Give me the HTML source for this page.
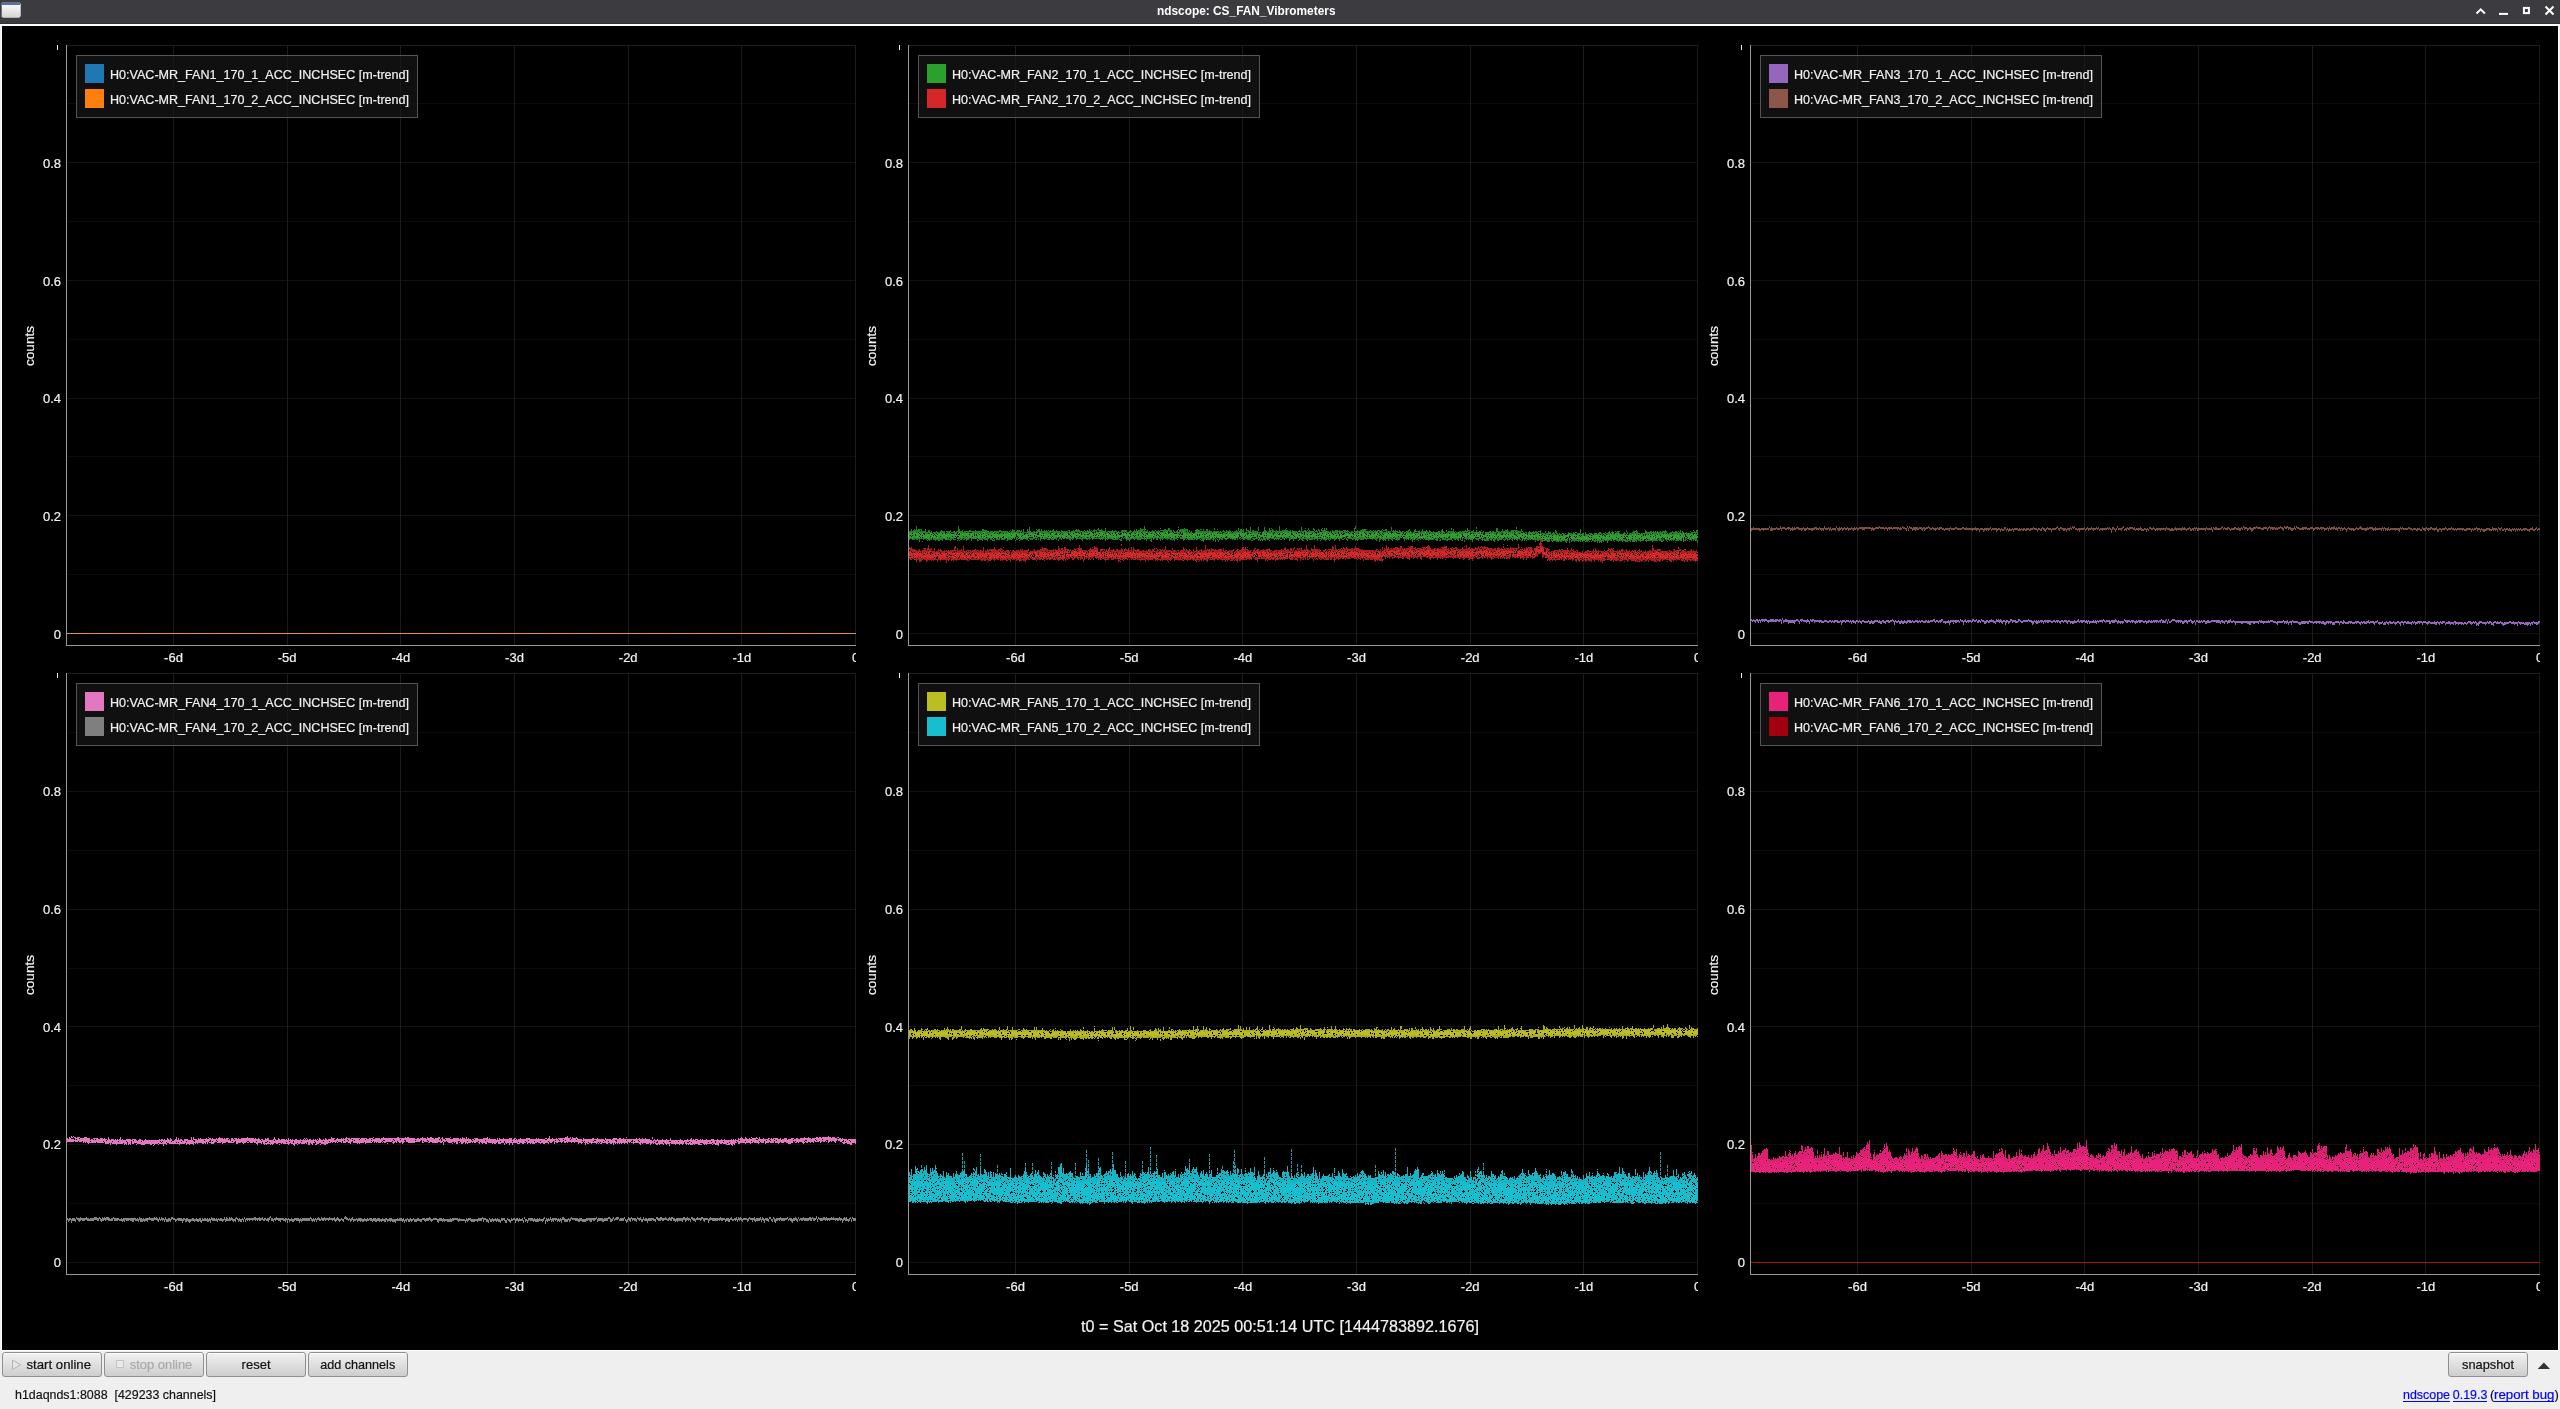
<!DOCTYPE html><html><head><meta charset="utf-8"><title>ndscope: CS_FAN_Vibrometers</title><style>html,body{margin:0;padding:0;background:#efefef;width:2560px;height:1409px;overflow:hidden;}svg{position:absolute;left:0;top:0;display:block;will-change:transform;}text{font-family:"Liberation Sans",sans-serif;stroke-width:0.2px;}</style></head><body><svg width="2560" height="1409" viewBox="0 0 2560 1409" shape-rendering="crispEdges"><defs><linearGradient id="btn" x1="0" y1="0" x2="0" y2="1"><stop offset="0" stop-color="#f2f2f2"/><stop offset="1" stop-color="#cdcdcd"/></linearGradient><linearGradient id="ico" x1="0" y1="0" x2="0" y2="1"><stop offset="0" stop-color="#ffffff"/><stop offset="1" stop-color="#d5d6d2"/></linearGradient><pattern id="sp1" width="211" height="127" patternUnits="userSpaceOnUse"><path d="M10 0h1M16 0h1M19 0h1M31 0h1M37 0h1M51 0h1M67 0h1M68 0h1M69 0h1M79 0h1M86 0h1M89 0h1M94 0h1M102 0h1M103 0h1M104 0h1M109 0h1M123 0h1M127 0h1M131 0h1M134 0h1M135 0h1M136 0h1M158 0h1M167 0h1M206 0h1M1 1h1M20 1h1M41 1h1M45 1h1M47 1h1M51 1h1M62 1h1M76 1h1M81 1h1M88 1h1M103 1h1M118 1h1M119 1h1M120 1h1M121 1h1M129 1h1M131 1h1M139 1h1M147 1h1M152 1h1M153 1h1M160 1h1M182 1h1M183 1h1M190 1h1M201 1h1M5 2h1M16 2h1M17 2h1M26 2h1M41 2h1M43 2h1M45 2h1M49 2h1M58 2h1M64 2h1M71 2h1M75 2h1M87 2h1M112 2h1M123 2h1M132 2h1M158 2h1M160 2h1M171 2h1M186 2h1M187 2h1M197 2h1M200 2h1M25 3h1M38 3h1M45 3h1M54 3h1M77 3h1M84 3h1M111 3h1M126 3h1M130 3h1M134 3h1M136 3h1M137 3h1M146 3h1M151 3h1M161 3h1M186 3h1M189 3h1M190 3h1M7 4h1M17 4h1M32 4h1M36 4h1M43 4h1M69 4h1M82 4h1M92 4h1M98 4h1M104 4h1M120 4h1M121 4h1M122 4h1M124 4h1M130 4h1M143 4h1M147 4h1M155 4h1M169 4h1M178 4h1M183 4h1M200 4h1M205 4h1M6 5h1M24 5h1M54 5h1M74 5h1M83 5h1M137 5h1M169 5h1M170 5h1M185 5h1M187 5h1M188 5h1M195 5h1M198 5h1M202 5h1M206 5h1M207 5h1M13 6h1M19 6h1M31 6h1M49 6h1M55 6h1M58 6h1M61 6h1M66 6h1M75 6h1M78 6h1M84 6h1M109 6h1M112 6h1M113 6h1M119 6h1M150 6h1M159 6h1M196 6h1M206 6h1M210 6h1M6 7h1M15 7h1M18 7h1M51 7h1M57 7h1M76 7h1M97 7h1M107 7h1M109 7h1M123 7h1M131 7h1M177 7h1M187 7h1M194 7h1M13 8h1M21 8h1M26 8h1M33 8h1M34 8h1M38 8h1M53 8h1M57 8h1M70 8h1M87 8h1M118 8h1M119 8h1M124 8h1M135 8h1M136 8h1M165 8h1M186 8h1M187 8h1M199 8h1M79 9h1M95 9h1M98 9h1M106 9h1M109 9h1M117 9h1M123 9h1M133 9h1M135 9h1M136 9h1M167 9h1M168 9h1M198 9h1M12 10h1M25 10h1M30 10h1M35 10h1M48 10h1M50 10h1M57 10h1M59 10h1M72 10h1M89 10h1M99 10h1M110 10h1M113 10h1M118 10h1M123 10h1M149 10h1M154 10h1M157 10h1M175 10h1M177 10h1M188 10h1M5 11h1M8 11h1M39 11h1M56 11h1M85 11h1M91 11h1M101 11h1M121 11h1M123 11h1M177 11h1M179 11h1M181 11h1M205 11h1M209 11h1M7 12h1M19 12h1M32 12h1M52 12h1M61 12h1M64 12h1M81 12h1M82 12h1M87 12h1M88 12h1M91 12h1M94 12h1M111 12h1M116 12h1M121 12h1M132 12h1M152 12h1M162 12h1M169 12h1M172 12h1M176 12h1M177 12h1M0 13h1M1 13h1M20 13h1M22 13h1M28 13h1M43 13h1M46 13h1M56 13h1M74 13h1M86 13h1M97 13h1M111 13h1M114 13h1M118 13h1M135 13h1M149 13h1M176 13h1M193 13h1M199 13h1M205 13h1M208 13h1M5 14h1M24 14h1M38 14h1M40 14h1M59 14h1M78 14h1M81 14h1M83 14h1M86 14h1M96 14h1M107 14h1M117 14h1M119 14h1M144 14h1M153 14h1M155 14h1M163 14h1M174 14h1M175 14h1M176 14h1M201 14h1M204 14h1M206 14h1M207 14h1M210 14h1M11 15h1M35 15h1M38 15h1M49 15h1M50 15h1M51 15h1M59 15h1M72 15h1M94 15h1M122 15h1M132 15h1M139 15h1M143 15h1M165 15h1M173 15h1M177 15h1M185 15h1M186 15h1M205 15h1M11 16h1M33 16h1M40 16h1M59 16h1M63 16h1M78 16h1M84 16h1M87 16h1M104 16h1M121 16h1M141 16h1M157 16h1M166 16h1M199 16h1M205 16h1M206 16h1M207 16h1M4 17h1M19 17h1M31 17h1M39 17h1M43 17h1M51 17h1M58 17h1M59 17h1M60 17h1M67 17h1M68 17h1M84 17h1M104 17h1M106 17h1M108 17h1M113 17h1M114 17h1M119 17h1M134 17h1M157 17h1M163 17h1M164 17h1M166 17h1M188 17h1M195 17h1M200 17h1M206 17h1M12 18h1M27 18h1M34 18h1M45 18h1M51 18h1M55 18h1M67 18h1M70 18h1M76 18h1M90 18h1M108 18h1M115 18h1M131 18h1M134 18h1M153 18h1M188 18h1M196 18h1M9 19h1M68 19h1M124 19h1M128 19h1M140 19h1M158 19h1M159 19h1M163 19h1M174 19h1M175 19h1M176 19h1M179 19h1M182 19h1M183 19h1M200 19h1M3 20h1M4 20h1M14 20h1M23 20h1M34 20h1M38 20h1M42 20h1M47 20h1M76 20h1M79 20h1M81 20h1M108 20h1M121 20h1M127 20h1M130 20h1M132 20h1M142 20h1M161 20h1M12 21h1M39 21h1M41 21h1M48 21h1M74 21h1M80 21h1M87 21h1M94 21h1M106 21h1M141 21h1M148 21h1M189 21h1M192 21h1M198 21h1M199 21h1M11 22h1M13 22h1M23 22h1M29 22h1M53 22h1M57 22h1M64 22h1M70 22h1M71 22h1M86 22h1M92 22h1M94 22h1M98 22h1M99 22h1M101 22h1M105 22h1M119 22h1M121 22h1M124 22h1M134 22h1M143 22h1M160 22h1M169 22h1M172 22h1M178 22h1M193 22h1M195 22h1M10 23h1M23 23h1M43 23h1M44 23h1M46 23h1M62 23h1M64 23h1M73 23h1M80 23h1M99 23h1M101 23h1M111 23h1M122 23h1M129 23h1M142 23h1M151 23h1M169 23h1M201 23h1M208 23h1M209 23h1M12 24h1M23 24h1M40 24h1M44 24h1M68 24h1M79 24h1M85 24h1M94 24h1M104 24h1M118 24h1M121 24h1M136 24h1M165 24h1M167 24h1M182 24h1M185 24h1M186 24h1M201 24h1M203 24h1M13 25h1M34 25h1M94 25h1M109 25h1M157 25h1M180 25h1M183 25h1M7 26h1M16 26h1M49 26h1M52 26h1M59 26h1M61 26h1M75 26h1M92 26h1M117 26h1M122 26h1M134 26h1M135 26h1M153 26h1M171 26h1M189 26h1M190 26h1M194 26h1M208 26h1M1 27h1M48 27h1M69 27h1M73 27h1M74 27h1M75 27h1M92 27h1M95 27h1M97 27h1M99 27h1M111 27h1M112 27h1M120 27h1M126 27h1M129 27h1M136 27h1M138 27h1M167 27h1M175 27h1M180 27h1M188 27h1M197 27h1M198 27h1M2 28h1M10 28h1M19 28h1M20 28h1M26 28h1M30 28h1M34 28h1M35 28h1M66 28h1M109 28h1M110 28h1M113 28h1M122 28h1M128 28h1M129 28h1M130 28h1M143 28h1M160 28h1M162 28h1M185 28h1M187 28h1M188 28h1M197 28h1M202 28h1M1 29h1M13 29h1M36 29h1M42 29h1M44 29h1M73 29h1M78 29h1M104 29h1M107 29h1M113 29h1M114 29h1M130 29h1M135 29h1M136 29h1M143 29h1M155 29h1M165 29h1M178 29h1M190 29h1M208 29h1M0 30h1M24 30h1M32 30h1M33 30h1M54 30h1M61 30h1M68 30h1M69 30h1M71 30h1M74 30h1M90 30h1M94 30h1M122 30h1M125 30h1M139 30h1M140 30h1M147 30h1M163 30h1M167 30h1M173 30h1M183 30h1M185 30h1M192 30h1M209 30h1M3 31h1M19 31h1M33 31h1M37 31h1M48 31h1M54 31h1M56 31h1M64 31h1M95 31h1M97 31h1M100 31h1M101 31h1M115 31h1M126 31h1M133 31h1M162 31h1M167 31h1M170 31h1M174 31h1M178 31h1M183 31h1M184 31h1M13 32h1M19 32h1M27 32h1M34 32h1M44 32h1M51 32h1M56 32h1M68 32h1M80 32h1M84 32h1M88 32h1M100 32h1M128 32h1M130 32h1M135 32h1M153 32h1M157 32h1M158 32h1M193 32h1M199 32h1M202 32h1M206 32h1M32 33h1M48 33h1M63 33h1M64 33h1M65 33h1M86 33h1M121 33h1M132 33h1M165 33h1M167 33h1M183 33h1M189 33h1M198 33h1M205 33h1M209 33h1M210 33h1M0 34h1M3 34h1M6 34h1M16 34h1M19 34h1M20 34h1M30 34h1M41 34h1M48 34h1M68 34h1M79 34h1M84 34h1M95 34h1M97 34h1M101 34h1M108 34h1M120 34h1M128 34h1M178 34h1M185 34h1M200 34h1M210 34h1M7 35h1M31 35h1M68 35h1M86 35h1M94 35h1M116 35h1M138 35h1M145 35h1M146 35h1M156 35h1M163 35h1M201 35h1M210 35h1M1 36h1M2 36h1M12 36h1M18 36h1M25 36h1M26 36h1M46 36h1M111 36h1M152 36h1M164 36h1M167 36h1M178 36h1M188 36h1M201 36h1M206 36h1M208 36h1M1 37h1M11 37h1M20 37h1M48 37h1M53 37h1M67 37h1M71 37h1M76 37h1M80 37h1M81 37h1M83 37h1M100 37h1M111 37h1M127 37h1M134 37h1M144 37h1M186 37h1M208 37h1M0 38h1M9 38h1M13 38h1M45 38h1M58 38h1M59 38h1M84 38h1M92 38h1M96 38h1M149 38h1M160 38h1M174 38h1M200 38h1M0 39h1M4 39h1M15 39h1M53 39h1M64 39h1M79 39h1M87 39h1M91 39h1M111 39h1M113 39h1M120 39h1M125 39h1M135 39h1M136 39h1M138 39h1M141 39h1M159 39h1M165 39h1M170 39h1M179 39h1M5 40h1M6 40h1M20 40h1M36 40h1M45 40h1M47 40h1M48 40h1M50 40h1M60 40h1M65 40h1M89 40h1M122 40h1M125 40h1M137 40h1M142 40h1M157 40h1M162 40h1M181 40h1M190 40h1M193 40h1M204 40h1M208 40h1M4 41h1M6 41h1M30 41h1M40 41h1M66 41h1M100 41h1M112 41h1M113 41h1M120 41h1M124 41h1M134 41h1M158 41h1M170 41h1M174 41h1M185 41h1M187 41h1M192 41h1M7 42h1M10 42h1M31 42h1M39 42h1M51 42h1M87 42h1M93 42h1M94 42h1M107 42h1M113 42h1M116 42h1M134 42h1M141 42h1M163 42h1M173 42h1M186 42h1M187 42h1M188 42h1M189 42h1M195 42h1M210 42h1M0 43h1M5 43h1M11 43h1M15 43h1M19 43h1M30 43h1M32 43h1M45 43h1M47 43h1M50 43h1M56 43h1M61 43h1M69 43h1M81 43h1M91 43h1M126 43h1M128 43h1M143 43h1M145 43h1M146 43h1M151 43h1M156 43h1M157 43h1M167 43h1M177 43h1M210 43h1M12 44h1M29 44h1M37 44h1M43 44h1M58 44h1M77 44h1M88 44h1M98 44h1M115 44h1M116 44h1M118 44h1M132 44h1M141 44h1M144 44h1M151 44h1M187 44h1M193 44h1M8 45h1M39 45h1M54 45h1M57 45h1M58 45h1M61 45h1M74 45h1M85 45h1M87 45h1M110 45h1M124 45h1M142 45h1M161 45h1M169 45h1M184 45h1M205 45h1M207 45h1M209 45h1M5 46h1M13 46h1M40 46h1M59 46h1M80 46h1M81 46h1M92 46h1M94 46h1M97 46h1M112 46h1M120 46h1M127 46h1M141 46h1M145 46h1M173 46h1M189 46h1M208 46h1M6 47h1M58 47h1M66 47h1M69 47h1M73 47h1M76 47h1M81 47h1M85 47h1M87 47h1M96 47h1M100 47h1M103 47h1M116 47h1M129 47h1M140 47h1M144 47h1M170 47h1M177 47h1M182 47h1M184 47h1M197 47h1M202 47h1M1 48h1M3 48h1M6 48h1M13 48h1M25 48h1M40 48h1M45 48h1M49 48h1M53 48h1M55 48h1M57 48h1M58 48h1M61 48h1M76 48h1M79 48h1M80 48h1M109 48h1M116 48h1M117 48h1M121 48h1M130 48h1M160 48h1M167 48h1M184 48h1M191 48h1M196 48h1M197 48h1M198 48h1M202 48h1M4 49h1M42 49h1M45 49h1M64 49h1M66 49h1M67 49h1M88 49h1M89 49h1M130 49h1M138 49h1M139 49h1M143 49h1M144 49h1M166 49h1M167 49h1M168 49h1M170 49h1M197 49h1M209 49h1M5 50h1M13 50h1M14 50h1M21 50h1M37 50h1M61 50h1M62 50h1M74 50h1M75 50h1M81 50h1M84 50h1M90 50h1M98 50h1M105 50h1M112 50h1M119 50h1M147 50h1M166 50h1M171 50h1M173 50h1M176 50h1M180 50h1M6 51h1M10 51h1M14 51h1M25 51h1M36 51h1M50 51h1M54 51h1M59 51h1M61 51h1M66 51h1M69 51h1M102 51h1M106 51h1M134 51h1M138 51h1M147 51h1M148 51h1M159 51h1M175 51h1M178 51h1M184 51h1M194 51h1M3 52h1M11 52h1M44 52h1M61 52h1M68 52h1M72 52h1M84 52h1M98 52h1M102 52h1M104 52h1M113 52h1M114 52h1M123 52h1M140 52h1M150 52h1M151 52h1M153 52h1M172 52h1M187 52h1M199 52h1M205 52h1M4 53h1M11 53h1M16 53h1M17 53h1M27 53h1M30 53h1M50 53h1M53 53h1M54 53h1M64 53h1M70 53h1M80 53h1M83 53h1M94 53h1M97 53h1M116 53h1M128 53h1M141 53h1M151 53h1M158 53h1M160 53h1M163 53h1M168 53h1M187 53h1M193 53h1M203 53h1M2 54h1M16 54h1M23 54h1M25 54h1M50 54h1M89 54h1M104 54h1M128 54h1M141 54h1M146 54h1M154 54h1M157 54h1M180 54h1M181 54h1M189 54h1M196 54h1M198 54h1M15 55h1M17 55h1M25 55h1M26 55h1M36 55h1M51 55h1M92 55h1M96 55h1M111 55h1M133 55h1M151 55h1M164 55h1M175 55h1M181 55h1M182 55h1M190 55h1M2 56h1M14 56h1M22 56h1M40 56h1M45 56h1M50 56h1M63 56h1M74 56h1M95 56h1M96 56h1M104 56h1M105 56h1M115 56h1M140 56h1M144 56h1M154 56h1M159 56h1M169 56h1M207 56h1M7 57h1M15 57h1M19 57h1M43 57h1M57 57h1M72 57h1M78 57h1M82 57h1M85 57h1M87 57h1M128 57h1M133 57h1M137 57h1M138 57h1M144 57h1M147 57h1M157 57h1M163 57h1M173 57h1M191 57h1M204 57h1M9 58h1M21 58h1M29 58h1M34 58h1M36 58h1M42 58h1M43 58h1M62 58h1M67 58h1M73 58h1M93 58h1M113 58h1M124 58h1M132 58h1M135 58h1M151 58h1M152 58h1M156 58h1M157 58h1M158 58h1M167 58h1M170 58h1M176 58h1M179 58h1M193 58h1M194 58h1M209 58h1M13 59h1M47 59h1M51 59h1M67 59h1M80 59h1M98 59h1M100 59h1M103 59h1M115 59h1M134 59h1M149 59h1M158 59h1M179 59h1M206 59h1M207 59h1M0 60h1M12 60h1M24 60h1M37 60h1M42 60h1M45 60h1M50 60h1M54 60h1M85 60h1M90 60h1M93 60h1M103 60h1M117 60h1M118 60h1M146 60h1M170 60h1M175 60h1M189 60h1M197 60h1M202 60h1M208 60h1M2 61h1M6 61h1M20 61h1M44 61h1M47 61h1M51 61h1M54 61h1M68 61h1M79 61h1M80 61h1M84 61h1M109 61h1M118 61h1M128 61h1M129 61h1M136 61h1M143 61h1M159 61h1M170 61h1M181 61h1M183 61h1M193 61h1M204 61h1M6 62h1M9 62h1M12 62h1M16 62h1M31 62h1M33 62h1M39 62h1M56 62h1M63 62h1M71 62h1M74 62h1M78 62h1M80 62h1M85 62h1M93 62h1M105 62h1M109 62h1M126 62h1M141 62h1M155 62h1M168 62h1M181 62h1M182 62h1M189 62h1M197 62h1M198 62h1M204 62h1M17 63h1M37 63h1M41 63h1M61 63h1M65 63h1M66 63h1M68 63h1M77 63h1M91 63h1M93 63h1M109 63h1M111 63h1M135 63h1M154 63h1M155 63h1M158 63h1M159 63h1M160 63h1M170 63h1M179 63h1M186 63h1M4 64h1M10 64h1M38 64h1M41 64h1M59 64h1M66 64h1M90 64h1M96 64h1M123 64h1M130 64h1M140 64h1M146 64h1M175 64h1M182 64h1M197 64h1M200 64h1M208 64h1M4 65h1M27 65h1M39 65h1M41 65h1M46 65h1M49 65h1M54 65h1M56 65h1M58 65h1M64 65h1M68 65h1M73 65h1M83 65h1M84 65h1M98 65h1M107 65h1M110 65h1M115 65h1M141 65h1M142 65h1M143 65h1M148 65h1M153 65h1M161 65h1M167 65h1M186 65h1M193 65h1M194 65h1M207 65h1M208 65h1M16 66h1M19 66h1M30 66h1M32 66h1M55 66h1M60 66h1M81 66h1M82 66h1M106 66h1M110 66h1M111 66h1M114 66h1M119 66h1M127 66h1M128 66h1M132 66h1M133 66h1M165 66h1M185 66h1M195 66h1M198 66h1M206 66h1M2 67h1M6 67h1M7 67h1M15 67h1M41 67h1M42 67h1M55 67h1M59 67h1M67 67h1M85 67h1M93 67h1M95 67h1M107 67h1M108 67h1M116 67h1M129 67h1M132 67h1M143 67h1M152 67h1M170 67h1M184 67h1M185 67h1M204 67h1M37 68h1M43 68h1M50 68h1M59 68h1M70 68h1M75 68h1M93 68h1M99 68h1M125 68h1M139 68h1M144 68h1M157 68h1M169 68h1M178 68h1M194 68h1M202 68h1M0 69h1M11 69h1M13 69h1M16 69h1M39 69h1M48 69h1M49 69h1M77 69h1M81 69h1M82 69h1M110 69h1M112 69h1M186 69h1M189 69h1M192 69h1M206 69h1M207 69h1M13 70h1M18 70h1M20 70h1M25 70h1M29 70h1M43 70h1M49 70h1M58 70h1M60 70h1M68 70h1M77 70h1M79 70h1M80 70h1M90 70h1M91 70h1M103 70h1M104 70h1M117 70h1M127 70h1M143 70h1M145 70h1M154 70h1M180 70h1M203 70h1M44 71h1M45 71h1M47 71h1M56 71h1M57 71h1M64 71h1M72 71h1M84 71h1M85 71h1M87 71h1M105 71h1M112 71h1M117 71h1M123 71h1M131 71h1M132 71h1M147 71h1M158 71h1M160 71h1M165 71h1M171 71h1M180 71h1M193 71h1M201 71h1M202 71h1M207 71h1M0 72h1M3 72h1M32 72h1M49 72h1M71 72h1M77 72h1M79 72h1M82 72h1M88 72h1M100 72h1M109 72h1M125 72h1M141 72h1M151 72h1M154 72h1M157 72h1M170 72h1M172 72h1M173 72h1M189 72h1M206 72h1M209 72h1M10 73h1M11 73h1M16 73h1M36 73h1M39 73h1M49 73h1M59 73h1M72 73h1M83 73h1M142 73h1M176 73h1M183 73h1M206 73h1M24 74h1M42 74h1M50 74h1M52 74h1M67 74h1M70 74h1M77 74h1M81 74h1M85 74h1M89 74h1M112 74h1M116 74h1M137 74h1M146 74h1M151 74h1M157 74h1M159 74h1M163 74h1M180 74h1M183 74h1M184 74h1M186 74h1M188 74h1M198 74h1M200 74h1M201 74h1M203 74h1M21 75h1M28 75h1M37 75h1M43 75h1M46 75h1M64 75h1M68 75h1M103 75h1M110 75h1M112 75h1M116 75h1M124 75h1M127 75h1M137 75h1M138 75h1M145 75h1M147 75h1M174 75h1M182 75h1M186 75h1M194 75h1M6 76h1M10 76h1M15 76h1M18 76h1M19 76h1M25 76h1M31 76h1M32 76h1M43 76h1M52 76h1M74 76h1M77 76h1M98 76h1M108 76h1M127 76h1M138 76h1M146 76h1M153 76h1M169 76h1M185 76h1M189 76h1M190 76h1M191 76h1M28 77h1M48 77h1M51 77h1M61 77h1M81 77h1M94 77h1M121 77h1M149 77h1M160 77h1M162 77h1M181 77h1M188 77h1M208 77h1M2 78h1M13 78h1M26 78h1M46 78h1M52 78h1M56 78h1M58 78h1M70 78h1M84 78h1M87 78h1M90 78h1M98 78h1M116 78h1M119 78h1M123 78h1M130 78h1M134 78h1M137 78h1M145 78h1M146 78h1M176 78h1M179 78h1M184 78h1M197 78h1M201 78h1M202 78h1M10 79h1M19 79h1M20 79h1M30 79h1M32 79h1M67 79h1M84 79h1M87 79h1M104 79h1M123 79h1M131 79h1M193 79h1M197 79h1M0 80h1M2 80h1M5 80h1M6 80h1M14 80h1M29 80h1M36 80h1M39 80h1M57 80h1M65 80h1M78 80h1M92 80h1M105 80h1M116 80h1M124 80h1M158 80h1M176 80h1M196 80h1M210 80h1M7 81h1M18 81h1M28 81h1M48 81h1M51 81h1M66 81h1M75 81h1M80 81h1M96 81h1M111 81h1M114 81h1M116 81h1M120 81h1M126 81h1M129 81h1M145 81h1M162 81h1M166 81h1M179 81h1M185 81h1M195 81h1M198 81h1M210 81h1M2 82h1M7 82h1M12 82h1M24 82h1M35 82h1M38 82h1M62 82h1M69 82h1M70 82h1M72 82h1M78 82h1M80 82h1M97 82h1M99 82h1M103 82h1M106 82h1M109 82h1M119 82h1M120 82h1M138 82h1M140 82h1M142 82h1M148 82h1M151 82h1M154 82h1M171 82h1M181 82h1M185 82h1M188 82h1M200 82h1M3 83h1M14 83h1M24 83h1M29 83h1M31 83h1M37 83h1M40 83h1M59 83h1M84 83h1M107 83h1M111 83h1M177 83h1M184 83h1M185 83h1M192 83h1M193 83h1M197 83h1M9 84h1M13 84h1M14 84h1M16 84h1M21 84h1M23 84h1M28 84h1M48 84h1M68 84h1M70 84h1M75 84h1M94 84h1M98 84h1M99 84h1M103 84h1M117 84h1M118 84h1M128 84h1M129 84h1M145 84h1M157 84h1M159 84h1M169 84h1M175 84h1M176 84h1M181 84h1M190 84h1M193 84h1M205 84h1M207 84h1M210 84h1M9 85h1M38 85h1M47 85h1M67 85h1M101 85h1M111 85h1M113 85h1M119 85h1M122 85h1M128 85h1M131 85h1M133 85h1M151 85h1M160 85h1M175 85h1M188 85h1M190 85h1M198 85h1M201 85h1M9 86h1M18 86h1M25 86h1M31 86h1M35 86h1M42 86h1M43 86h1M47 86h1M76 86h1M82 86h1M83 86h1M95 86h1M114 86h1M116 86h1M117 86h1M134 86h1M143 86h1M145 86h1M151 86h1M180 86h1M188 86h1M195 86h1M203 86h1M4 87h1M5 87h1M18 87h1M19 87h1M36 87h1M39 87h1M46 87h1M70 87h1M88 87h1M94 87h1M98 87h1M102 87h1M103 87h1M114 87h1M116 87h1M118 87h1M120 87h1M144 87h1M153 87h1M171 87h1M173 87h1M175 87h1M178 87h1M186 87h1M0 88h1M3 88h1M14 88h1M15 88h1M29 88h1M60 88h1M86 88h1M89 88h1M99 88h1M103 88h1M106 88h1M108 88h1M122 88h1M140 88h1M145 88h1M146 88h1M170 88h1M172 88h1M176 88h1M180 88h1M202 88h1M7 89h1M27 89h1M36 89h1M49 89h1M50 89h1M53 89h1M69 89h1M73 89h1M76 89h1M88 89h1M113 89h1M122 89h1M129 89h1M134 89h1M143 89h1M154 89h1M160 89h1M175 89h1M176 89h1M177 89h1M180 89h1M187 89h1M193 89h1M198 89h1M200 89h1M205 89h1M207 89h1M11 90h1M37 90h1M80 90h1M82 90h1M98 90h1M113 90h1M123 90h1M125 90h1M135 90h1M137 90h1M140 90h1M142 90h1M155 90h1M158 90h1M174 90h1M200 90h1M209 90h1M1 91h1M17 91h1M56 91h1M59 91h1M67 91h1M78 91h1M86 91h1M91 91h1M113 91h1M120 91h1M133 91h1M136 91h1M137 91h1M147 91h1M161 91h1M165 91h1M209 91h1M1 92h1M2 92h1M9 92h1M20 92h1M29 92h1M32 92h1M37 92h1M84 92h1M92 92h1M95 92h1M100 92h1M101 92h1M117 92h1M119 92h1M127 92h1M136 92h1M142 92h1M146 92h1M179 92h1M180 92h1M181 92h1M185 92h1M206 92h1M208 92h1M5 93h1M8 93h1M12 93h1M16 93h1M31 93h1M45 93h1M53 93h1M54 93h1M57 93h1M73 93h1M74 93h1M93 93h1M97 93h1M103 93h1M114 93h1M116 93h1M121 93h1M124 93h1M133 93h1M148 93h1M151 93h1M171 93h1M176 93h1M193 93h1M205 93h1M209 93h1M0 94h1M12 94h1M47 94h1M57 94h1M64 94h1M72 94h1M79 94h1M97 94h1M98 94h1M103 94h1M130 94h1M131 94h1M152 94h1M158 94h1M167 94h1M169 94h1M178 94h1M190 94h1M192 94h1M13 95h1M16 95h1M39 95h1M48 95h1M50 95h1M62 95h1M64 95h1M83 95h1M111 95h1M131 95h1M137 95h1M166 95h1M177 95h1M179 95h1M191 95h1M203 95h1M208 95h1M0 96h1M5 96h1M22 96h1M24 96h1M29 96h1M55 96h1M57 96h1M86 96h1M109 96h1M129 96h1M131 96h1M139 96h1M140 96h1M149 96h1M151 96h1M159 96h1M162 96h1M166 96h1M168 96h1M180 96h1M188 96h1M206 96h1M208 96h1M0 97h1M1 97h1M18 97h1M23 97h1M37 97h1M44 97h1M58 97h1M71 97h1M87 97h1M89 97h1M93 97h1M107 97h1M125 97h1M133 97h1M134 97h1M135 97h1M142 97h1M194 97h1M0 98h1M1 98h1M23 98h1M24 98h1M47 98h1M62 98h1M63 98h1M72 98h1M91 98h1M94 98h1M105 98h1M106 98h1M112 98h1M132 98h1M135 98h1M137 98h1M145 98h1M165 98h1M176 98h1M177 98h1M191 98h1M208 98h1M10 99h1M32 99h1M42 99h1M55 99h1M64 99h1M68 99h1M75 99h1M100 99h1M107 99h1M111 99h1M118 99h1M130 99h1M142 99h1M149 99h1M153 99h1M161 99h1M187 99h1M197 99h1M203 99h1M204 99h1M10 100h1M19 100h1M34 100h1M41 100h1M59 100h1M83 100h1M94 100h1M99 100h1M107 100h1M117 100h1M120 100h1M152 100h1M158 100h1M170 100h1M173 100h1M175 100h1M1 101h1M5 101h1M8 101h1M21 101h1M28 101h1M29 101h1M42 101h1M44 101h1M45 101h1M47 101h1M54 101h1M62 101h1M66 101h1M73 101h1M83 101h1M84 101h1M87 101h1M104 101h1M109 101h1M111 101h1M124 101h1M127 101h1M129 101h1M130 101h1M137 101h1M139 101h1M140 101h1M172 101h1M176 101h1M181 101h1M200 101h1M201 101h1M0 102h1M12 102h1M20 102h1M39 102h1M89 102h1M92 102h1M94 102h1M96 102h1M97 102h1M100 102h1M101 102h1M105 102h1M108 102h1M126 102h1M131 102h1M139 102h1M141 102h1M150 102h1M156 102h1M166 102h1M167 102h1M205 102h1M6 103h1M7 103h1M15 103h1M51 103h1M66 103h1M69 103h1M73 103h1M81 103h1M88 103h1M91 103h1M92 103h1M95 103h1M105 103h1M124 103h1M135 103h1M141 103h1M155 103h1M156 103h1M168 103h1M190 103h1M200 103h1M208 103h1M210 103h1M6 104h1M12 104h1M14 104h1M17 104h1M23 104h1M30 104h1M62 104h1M70 104h1M74 104h1M87 104h1M96 104h1M100 104h1M102 104h1M121 104h1M132 104h1M138 104h1M143 104h1M145 104h1M160 104h1M162 104h1M193 104h1M4 105h1M8 105h1M19 105h1M44 105h1M46 105h1M49 105h1M56 105h1M61 105h1M70 105h1M72 105h1M73 105h1M74 105h1M76 105h1M84 105h1M93 105h1M96 105h1M114 105h1M117 105h1M123 105h1M127 105h1M131 105h1M133 105h1M135 105h1M144 105h1M151 105h1M171 105h1M175 105h1M201 105h1M206 105h1M25 106h1M31 106h1M37 106h1M47 106h1M53 106h1M69 106h1M88 106h1M105 106h1M149 106h1M151 106h1M162 106h1M166 106h1M167 106h1M174 106h1M188 106h1M200 106h1M32 107h1M38 107h1M40 107h1M56 107h1M74 107h1M76 107h1M83 107h1M87 107h1M91 107h1M120 107h1M142 107h1M144 107h1M147 107h1M162 107h1M174 107h1M8 108h1M12 108h1M14 108h1M24 108h1M25 108h1M34 108h1M38 108h1M41 108h1M50 108h1M52 108h1M53 108h1M65 108h1M77 108h1M85 108h1M103 108h1M117 108h1M123 108h1M139 108h1M151 108h1M178 108h1M194 108h1M200 108h1M9 109h1M10 109h1M15 109h1M21 109h1M23 109h1M39 109h1M48 109h1M53 109h1M57 109h1M68 109h1M70 109h1M71 109h1M85 109h1M90 109h1M94 109h1M103 109h1M119 109h1M126 109h1M137 109h1M141 109h1M143 109h1M176 109h1M179 109h1M185 109h1M192 109h1M4 110h1M8 110h1M40 110h1M67 110h1M79 110h1M91 110h1M92 110h1M105 110h1M109 110h1M124 110h1M126 110h1M140 110h1M142 110h1M167 110h1M174 110h1M195 110h1M200 110h1M203 110h1M208 110h1M13 111h1M14 111h1M19 111h1M20 111h1M39 111h1M44 111h1M51 111h1M71 111h1M77 111h1M79 111h1M100 111h1M103 111h1M106 111h1M112 111h1M117 111h1M176 111h1M180 111h1M181 111h1M183 111h1M191 111h1M193 111h1M198 111h1M199 111h1M210 111h1M23 112h1M42 112h1M50 112h1M53 112h1M56 112h1M58 112h1M67 112h1M68 112h1M86 112h1M97 112h1M99 112h1M100 112h1M140 112h1M141 112h1M143 112h1M146 112h1M153 112h1M162 112h1M176 112h1M188 112h1M203 112h1M207 112h1M209 112h1M2 113h1M4 113h1M62 113h1M87 113h1M88 113h1M101 113h1M119 113h1M127 113h1M132 113h1M135 113h1M139 113h1M140 113h1M147 113h1M155 113h1M168 113h1M172 113h1M174 113h1M194 113h1M199 113h1M202 113h1M13 114h1M16 114h1M19 114h1M21 114h1M27 114h1M32 114h1M36 114h1M58 114h1M82 114h1M101 114h1M109 114h1M112 114h1M116 114h1M121 114h1M134 114h1M140 114h1M145 114h1M146 114h1M148 114h1M156 114h1M180 114h1M183 114h1M186 114h1M14 115h1M19 115h1M29 115h1M35 115h1M36 115h1M62 115h1M77 115h1M94 115h1M111 115h1M112 115h1M150 115h1M153 115h1M155 115h1M160 115h1M170 115h1M171 115h1M172 115h1M184 115h1M188 115h1M191 115h1M194 115h1M197 115h1M198 115h1M200 115h1M205 115h1M206 115h1M20 116h1M28 116h1M44 116h1M45 116h1M55 116h1M61 116h1M85 116h1M86 116h1M90 116h1M95 116h1M107 116h1M140 116h1M151 116h1M154 116h1M156 116h1M158 116h1M186 116h1M188 116h1M200 116h1M11 117h1M23 117h1M24 117h1M43 117h1M47 117h1M48 117h1M49 117h1M50 117h1M60 117h1M65 117h1M89 117h1M96 117h1M99 117h1M110 117h1M128 117h1M132 117h1M138 117h1M150 117h1M160 117h1M1 118h1M5 118h1M12 118h1M14 118h1M20 118h1M24 118h1M39 118h1M50 118h1M57 118h1M70 118h1M80 118h1M97 118h1M100 118h1M103 118h1M106 118h1M110 118h1M112 118h1M117 118h1M124 118h1M149 118h1M156 118h1M158 118h1M159 118h1M165 118h1M186 118h1M194 118h1M204 118h1M12 119h1M19 119h1M25 119h1M28 119h1M51 119h1M52 119h1M65 119h1M72 119h1M85 119h1M94 119h1M98 119h1M143 119h1M151 119h1M160 119h1M161 119h1M165 119h1M166 119h1M177 119h1M0 120h1M5 120h1M9 120h1M14 120h1M21 120h1M38 120h1M46 120h1M50 120h1M51 120h1M55 120h1M65 120h1M67 120h1M80 120h1M83 120h1M88 120h1M90 120h1M92 120h1M93 120h1M103 120h1M107 120h1M111 120h1M112 120h1M126 120h1M132 120h1M142 120h1M157 120h1M175 120h1M177 120h1M187 120h1M199 120h1M2 121h1M18 121h1M29 121h1M33 121h1M39 121h1M59 121h1M62 121h1M70 121h1M73 121h1M88 121h1M89 121h1M98 121h1M115 121h1M131 121h1M136 121h1M141 121h1M142 121h1M153 121h1M159 121h1M163 121h1M166 121h1M169 121h1M173 121h1M179 121h1M182 121h1M203 121h1M206 121h1M207 121h1M4 122h1M18 122h1M22 122h1M28 122h1M29 122h1M49 122h1M68 122h1M71 122h1M72 122h1M73 122h1M74 122h1M79 122h1M90 122h1M99 122h1M115 122h1M118 122h1M125 122h1M128 122h1M129 122h1M131 122h1M133 122h1M149 122h1M162 122h1M204 122h1M205 122h1M208 122h1M17 123h1M19 123h1M23 123h1M49 123h1M52 123h1M74 123h1M76 123h1M90 123h1M93 123h1M95 123h1M123 123h1M124 123h1M136 123h1M141 123h1M148 123h1M154 123h1M160 123h1M182 123h1M189 123h1M5 124h1M19 124h1M50 124h1M63 124h1M106 124h1M133 124h1M137 124h1M143 124h1M172 124h1M173 124h1M183 124h1M193 124h1M194 124h1M204 124h1M210 124h1M1 125h1M6 125h1M21 125h1M24 125h1M36 125h1M37 125h1M45 125h1M56 125h1M78 125h1M82 125h1M90 125h1M103 125h1M112 125h1M118 125h1M126 125h1M131 125h1M141 125h1M160 125h1M162 125h1M171 125h1M181 125h1M186 125h1M194 125h1M209 125h1M210 125h1M23 126h1M24 126h1M30 126h1M51 126h1M54 126h1M55 126h1M58 126h1M75 126h1M82 126h1M96 126h1M104 126h1M127 126h1M131 126h1M161 126h1M166 126h1M176 126h1M178 126h1M206 126h1M208 126h1" stroke="#000" stroke-width="1" transform="translate(0 0.5)"/></pattern><pattern id="sp2" width="199" height="113" patternUnits="userSpaceOnUse"><path d="M0 0h1M37 0h1M45 0h1M63 0h1M64 0h1M66 0h1M69 0h1M96 0h1M103 0h1M153 0h1M167 0h1M12 1h1M24 1h1M33 1h1M51 1h1M59 1h1M67 1h1M73 1h1M121 1h1M166 1h1M176 1h1M180 1h1M189 1h1M47 2h1M56 2h1M99 2h1M120 2h1M122 2h1M140 2h1M170 2h1M188 2h1M1 3h1M6 3h1M8 3h1M11 3h1M50 3h1M66 3h1M68 3h1M75 3h1M99 3h1M111 3h1M156 3h1M166 3h1M190 3h1M194 3h1M2 4h1M14 4h1M41 4h1M82 4h1M86 4h1M100 4h1M101 4h1M102 4h1M105 4h1M137 4h1M143 4h1M162 4h1M178 4h1M190 4h1M67 5h1M100 5h1M107 5h1M111 5h1M122 5h1M125 5h1M145 5h1M152 5h1M34 6h1M62 6h1M89 6h1M158 6h1M179 6h1M186 6h1M13 7h1M37 7h1M89 7h1M103 7h1M108 7h1M147 7h1M153 7h1M155 7h1M185 7h1M195 7h1M8 8h1M14 8h1M29 8h1M39 8h1M57 8h1M59 8h1M75 8h1M94 8h1M114 8h1M126 8h1M172 8h1M186 8h1M11 9h1M21 9h1M23 9h1M28 9h1M40 9h1M43 9h1M58 9h1M64 9h1M76 9h1M77 9h1M96 9h1M98 9h1M102 9h1M117 9h1M119 9h1M145 9h1M170 9h1M175 9h1M182 9h1M186 9h1M197 9h1M21 10h1M38 10h1M65 10h1M78 10h1M109 10h1M142 10h1M157 10h1M162 10h1M0 11h1M51 11h1M64 11h1M66 11h1M113 11h1M119 11h1M141 11h1M38 12h1M42 12h1M43 12h1M57 12h1M72 12h1M80 12h1M95 12h1M123 12h1M126 12h1M127 12h1M133 12h1M154 12h1M179 12h1M185 12h1M30 13h1M32 13h1M60 13h1M74 13h1M182 13h1M20 14h1M27 14h1M29 14h1M75 14h1M77 14h1M117 14h1M126 14h1M142 14h1M168 14h1M171 14h1M184 14h1M186 14h1M14 15h1M27 15h1M42 15h1M62 15h1M101 15h1M125 15h1M127 15h1M147 15h1M158 15h1M161 15h1M0 16h1M43 16h1M48 16h1M61 16h1M67 16h1M70 16h1M89 16h1M195 16h1M3 17h1M7 17h1M27 17h1M39 17h1M110 17h1M112 17h1M115 17h1M122 17h1M2 18h1M60 18h1M97 18h1M101 18h1M144 18h1M146 18h1M52 19h1M85 19h1M102 19h1M106 19h1M166 19h1M169 19h1M0 20h1M15 20h1M21 20h1M60 20h1M67 20h1M137 20h1M150 20h1M168 20h1M6 21h1M20 21h1M43 21h1M48 21h1M81 21h1M112 21h1M122 21h1M131 21h1M153 21h1M159 21h1M163 21h1M1 22h1M46 22h1M84 22h1M96 22h1M109 22h1M120 22h1M129 22h1M150 22h1M151 22h1M160 22h1M167 22h1M178 22h1M191 22h1M196 22h1M16 23h1M32 23h1M34 23h1M43 23h1M45 23h1M61 23h1M66 23h1M96 23h1M115 23h1M175 23h1M6 24h1M7 24h1M42 24h1M67 24h1M106 24h1M119 24h1M130 24h1M134 24h1M143 24h1M149 24h1M179 24h1M192 24h1M2 25h1M12 25h1M23 25h1M44 25h1M46 25h1M55 25h1M66 25h1M98 25h1M101 25h1M125 25h1M129 25h1M137 25h1M141 25h1M145 25h1M147 25h1M153 25h1M156 25h1M158 25h1M195 25h1M9 26h1M24 26h1M33 26h1M82 26h1M100 26h1M107 26h1M110 26h1M126 26h1M134 26h1M162 26h1M180 26h1M10 27h1M30 27h1M39 27h1M47 27h1M49 27h1M52 27h1M67 27h1M73 27h1M78 27h1M88 27h1M103 27h1M117 27h1M119 27h1M131 27h1M13 28h1M51 28h1M57 28h1M78 28h1M79 28h1M118 28h1M122 28h1M127 28h1M140 28h1M145 28h1M152 28h1M154 28h1M5 29h1M28 29h1M30 29h1M36 29h1M71 29h1M76 29h1M91 29h1M96 29h1M121 29h1M132 29h1M153 29h1M158 29h1M168 29h1M176 29h1M198 29h1M15 30h1M79 30h1M83 30h1M94 30h1M129 30h1M133 30h1M136 30h1M140 30h1M143 30h1M144 30h1M148 30h1M176 30h1M181 30h1M182 30h1M198 30h1M25 31h1M142 31h1M144 31h1M198 31h1M9 32h1M19 32h1M30 32h1M55 32h1M82 32h1M91 32h1M116 32h1M143 32h1M188 32h1M190 32h1M2 33h1M33 33h1M53 33h1M62 33h1M69 33h1M88 33h1M92 33h1M98 33h1M132 33h1M133 33h1M154 33h1M5 34h1M29 34h1M37 34h1M95 34h1M104 34h1M142 34h1M160 34h1M176 34h1M0 35h1M60 35h1M64 35h1M81 35h1M89 35h1M100 35h1M106 35h1M112 35h1M115 35h1M141 35h1M142 35h1M154 35h1M158 35h1M171 35h1M14 36h1M38 36h1M55 36h1M61 36h1M90 36h1M95 36h1M34 37h1M37 37h1M50 37h1M88 37h1M104 37h1M105 37h1M110 37h1M124 37h1M126 37h1M147 37h1M166 37h1M169 37h1M24 38h1M54 38h1M59 38h1M61 38h1M68 38h1M69 38h1M75 38h1M108 38h1M135 38h1M146 38h1M156 38h1M158 38h1M179 38h1M11 39h1M29 39h1M30 39h1M78 39h1M90 39h1M112 39h1M131 39h1M132 39h1M151 39h1M185 39h1M21 40h1M42 40h1M43 40h1M84 40h1M85 40h1M97 40h1M100 40h1M106 40h1M114 40h1M145 40h1M161 40h1M174 40h1M15 41h1M73 41h1M110 41h1M126 41h1M154 41h1M155 41h1M161 41h1M167 41h1M190 41h1M4 42h1M142 42h1M165 42h1M178 42h1M183 42h1M8 43h1M22 43h1M50 43h1M56 43h1M75 43h1M85 43h1M93 43h1M139 43h1M166 43h1M13 44h1M14 44h1M47 44h1M99 44h1M116 44h1M123 44h1M147 44h1M154 44h1M52 45h1M87 45h1M125 45h1M187 45h1M193 45h1M3 46h1M5 46h1M8 46h1M30 46h1M40 46h1M57 46h1M72 46h1M75 46h1M79 46h1M85 46h1M106 46h1M108 46h1M127 46h1M134 46h1M136 46h1M12 47h1M32 47h1M95 47h1M104 47h1M142 47h1M164 47h1M166 47h1M173 47h1M176 47h1M177 47h1M19 48h1M23 48h1M47 48h1M52 48h1M82 48h1M110 48h1M121 48h1M122 48h1M163 48h1M171 48h1M2 49h1M21 49h1M39 49h1M45 49h1M46 49h1M77 49h1M131 49h1M142 49h1M178 49h1M196 49h1M16 50h1M86 50h1M107 50h1M118 50h1M124 50h1M177 50h1M4 51h1M6 51h1M58 51h1M69 51h1M118 51h1M122 51h1M126 51h1M140 51h1M157 51h1M165 51h1M1 52h1M5 52h1M13 52h1M62 52h1M101 52h1M102 52h1M157 52h1M160 52h1M187 52h1M24 53h1M25 53h1M61 53h1M74 53h1M80 53h1M87 53h1M90 53h1M112 53h1M124 53h1M128 53h1M150 53h1M152 53h1M161 53h1M18 54h1M43 54h1M61 54h1M63 54h1M99 54h1M101 54h1M110 54h1M147 54h1M161 54h1M167 54h1M168 54h1M18 55h1M37 55h1M42 55h1M139 55h1M156 55h1M172 55h1M19 56h1M31 56h1M44 56h1M62 56h1M85 56h1M149 56h1M163 56h1M167 56h1M181 56h1M26 57h1M27 57h1M35 57h1M41 57h1M54 57h1M58 57h1M74 57h1M77 57h1M106 57h1M107 57h1M114 57h1M125 57h1M134 57h1M148 57h1M155 57h1M197 57h1M26 58h1M44 58h1M49 58h1M71 58h1M74 58h1M81 58h1M83 58h1M114 58h1M139 58h1M162 58h1M15 59h1M42 59h1M51 59h1M86 59h1M159 59h1M168 59h1M172 59h1M49 60h1M85 60h1M90 60h1M95 60h1M107 60h1M159 60h1M176 60h1M194 60h1M23 61h1M46 61h1M58 61h1M78 61h1M99 61h1M101 61h1M114 61h1M115 61h1M120 61h1M128 61h1M145 61h1M189 61h1M36 62h1M37 62h1M48 62h1M57 62h1M68 62h1M84 62h1M99 62h1M197 62h1M198 62h1M56 63h1M58 63h1M102 63h1M108 63h1M124 63h1M135 63h1M163 63h1M168 63h1M170 63h1M191 63h1M18 64h1M48 64h1M88 64h1M155 64h1M197 64h1M2 65h1M32 65h1M68 65h1M93 65h1M110 65h1M111 65h1M152 65h1M13 66h1M49 66h1M72 66h1M81 66h1M122 66h1M123 66h1M125 66h1M127 66h1M195 66h1M40 67h1M43 67h1M52 67h1M54 67h1M67 67h1M68 67h1M87 67h1M129 67h1M131 67h1M136 67h1M163 67h1M182 67h1M190 67h1M53 68h1M76 68h1M86 68h1M89 68h1M99 68h1M142 68h1M145 68h1M161 68h1M190 68h1M193 68h1M7 69h1M8 69h1M32 69h1M121 69h1M141 69h1M158 69h1M160 69h1M169 69h1M192 69h1M195 69h1M16 70h1M35 70h1M47 70h1M52 70h1M66 70h1M82 70h1M125 70h1M170 70h1M172 70h1M184 70h1M1 71h1M2 71h1M28 71h1M32 71h1M37 71h1M64 71h1M66 71h1M78 71h1M81 71h1M88 71h1M89 71h1M95 71h1M100 71h1M107 71h1M126 71h1M132 71h1M145 71h1M164 71h1M182 71h1M183 71h1M30 72h1M37 72h1M38 72h1M43 72h1M78 72h1M80 72h1M165 72h1M185 72h1M7 73h1M9 73h1M26 73h1M56 73h1M60 73h1M78 73h1M90 73h1M102 73h1M105 73h1M116 73h1M130 73h1M155 73h1M159 73h1M6 74h1M40 74h1M50 74h1M105 74h1M110 74h1M124 74h1M127 74h1M132 74h1M133 74h1M134 74h1M143 74h1M161 74h1M167 74h1M198 74h1M23 75h1M50 75h1M71 75h1M98 75h1M138 75h1M152 75h1M6 76h1M50 76h1M51 76h1M60 76h1M69 76h1M82 76h1M122 76h1M133 76h1M137 76h1M168 76h1M186 76h1M11 77h1M34 77h1M41 77h1M48 77h1M64 77h1M80 77h1M129 77h1M143 77h1M153 77h1M155 77h1M176 77h1M25 78h1M38 78h1M44 78h1M52 78h1M68 78h1M75 78h1M85 78h1M91 78h1M103 78h1M105 78h1M133 78h1M137 78h1M144 78h1M147 78h1M181 78h1M184 78h1M21 79h1M60 79h1M63 79h1M101 79h1M129 79h1M162 79h1M169 79h1M182 79h1M0 80h1M22 80h1M23 80h1M126 80h1M131 80h1M157 80h1M179 80h1M65 81h1M74 81h1M77 81h1M83 81h1M95 81h1M106 81h1M155 81h1M156 81h1M177 81h1M182 81h1M187 81h1M0 82h1M1 82h1M8 82h1M30 82h1M53 82h1M67 82h1M75 82h1M171 82h1M197 82h1M198 82h1M21 83h1M22 83h1M27 83h1M85 83h1M87 83h1M105 83h1M108 83h1M123 83h1M144 83h1M162 83h1M168 83h1M187 83h1M194 83h1M197 83h1M10 84h1M55 84h1M73 84h1M96 84h1M106 84h1M140 84h1M146 84h1M170 84h1M196 84h1M197 84h1M0 85h1M18 85h1M20 85h1M43 85h1M57 85h1M98 85h1M131 85h1M193 85h1M5 86h1M17 86h1M28 86h1M33 86h1M65 86h1M73 86h1M77 86h1M109 86h1M151 86h1M169 86h1M6 87h1M22 87h1M34 87h1M71 87h1M77 87h1M91 87h1M184 87h1M188 87h1M198 87h1M5 88h1M6 88h1M19 88h1M38 88h1M81 88h1M108 88h1M109 88h1M116 88h1M127 88h1M128 88h1M132 88h1M153 88h1M11 89h1M24 89h1M34 89h1M38 89h1M41 89h1M63 89h1M66 89h1M75 89h1M137 89h1M8 90h1M9 90h1M42 90h1M72 90h1M80 90h1M114 90h1M165 90h1M170 90h1M175 90h1M177 90h1M19 91h1M43 91h1M74 91h1M89 91h1M97 91h1M118 91h1M125 91h1M127 91h1M171 91h1M197 91h1M34 92h1M83 92h1M106 92h1M153 92h1M154 92h1M155 92h1M170 92h1M188 92h1M12 93h1M17 93h1M19 93h1M34 93h1M81 93h1M25 94h1M45 94h1M50 94h1M176 94h1M183 94h1M185 94h1M192 94h1M15 95h1M17 95h1M27 95h1M36 95h1M47 95h1M77 95h1M133 95h1M144 95h1M179 95h1M7 96h1M13 96h1M40 96h1M67 96h1M152 96h1M162 96h1M178 96h1M184 96h1M20 97h1M26 97h1M35 97h1M39 97h1M103 97h1M124 97h1M128 97h1M129 97h1M130 97h1M136 97h1M140 97h1M154 97h1M179 97h1M188 97h1M191 97h1M3 98h1M24 98h1M71 98h1M94 98h1M102 98h1M131 98h1M142 98h1M150 98h1M175 98h1M190 98h1M6 99h1M22 99h1M26 99h1M32 99h1M41 99h1M85 99h1M103 99h1M105 99h1M122 99h1M144 99h1M154 99h1M180 99h1M185 99h1M17 100h1M45 100h1M62 100h1M89 100h1M90 100h1M97 100h1M123 100h1M138 100h1M141 100h1M154 100h1M184 100h1M9 101h1M13 101h1M30 101h1M33 101h1M56 101h1M65 101h1M90 101h1M153 101h1M175 101h1M197 101h1M0 102h1M4 102h1M7 102h1M34 102h1M53 102h1M57 102h1M95 102h1M97 102h1M109 102h1M128 102h1M144 102h1M184 102h1M192 102h1M34 103h1M72 103h1M88 103h1M111 103h1M158 103h1M163 103h1M30 104h1M33 104h1M47 104h1M51 104h1M77 104h1M121 104h1M125 104h1M129 104h1M161 104h1M167 104h1M172 104h1M182 104h1M52 105h1M68 105h1M112 105h1M140 105h1M148 105h1M163 105h1M47 106h1M53 106h1M163 106h1M187 106h1M3 107h1M18 107h1M28 107h1M34 107h1M36 107h1M45 107h1M61 107h1M67 107h1M79 107h1M151 107h1M161 107h1M23 108h1M38 108h1M57 108h1M109 108h1M117 108h1M124 108h1M126 108h1M159 108h1M9 109h1M10 109h1M72 109h1M77 109h1M85 109h1M93 109h1M115 109h1M134 109h1M151 109h1M193 109h1M195 109h1M10 110h1M25 110h1M39 110h1M47 110h1M68 110h1M85 110h1M94 110h1M114 110h1M120 110h1M126 110h1M127 110h1M169 110h1M193 110h1M14 111h1M28 111h1M32 111h1M74 111h1M91 111h1M125 111h1M157 111h1M173 111h1M197 111h1M13 112h1M29 112h1M66 112h1M85 112h1M102 112h1M108 112h1M115 112h1M143 112h1M164 112h1M172 112h1M182 112h1" stroke="#000" stroke-width="1" transform="translate(0 0.5)"/></pattern><pattern id="sp3" width="223" height="131" patternUnits="userSpaceOnUse"><path d="M4 0h1M8 0h1M9 0h1M11 0h1M19 0h1M22 0h1M23 0h1M27 0h1M33 0h1M39 0h1M53 0h1M66 0h1M76 0h1M84 0h1M93 0h1M100 0h1M104 0h1M110 0h1M113 0h1M115 0h1M135 0h1M151 0h1M154 0h1M158 0h1M167 0h1M168 0h1M170 0h1M183 0h1M188 0h1M201 0h1M211 0h1M215 0h1M221 0h1M1 1h1M9 1h1M24 1h1M25 1h1M37 1h1M39 1h1M61 1h1M63 1h1M68 1h1M78 1h1M82 1h1M83 1h1M86 1h1M99 1h1M111 1h1M124 1h1M139 1h1M143 1h1M147 1h1M157 1h1M173 1h1M178 1h1M181 1h1M188 1h1M194 1h1M198 1h1M200 1h1M203 1h1M204 1h1M208 1h1M217 1h1M1 2h1M9 2h1M15 2h1M23 2h1M36 2h1M50 2h1M63 2h1M78 2h1M80 2h1M88 2h1M111 2h1M114 2h1M122 2h1M126 2h1M127 2h1M129 2h1M143 2h1M159 2h1M163 2h1M167 2h1M176 2h1M178 2h1M179 2h1M180 2h1M190 2h1M203 2h1M205 2h1M210 2h1M6 3h1M11 3h1M21 3h1M23 3h1M25 3h1M34 3h1M50 3h1M59 3h1M87 3h1M89 3h1M106 3h1M128 3h1M131 3h1M148 3h1M168 3h1M170 3h1M175 3h1M176 3h1M190 3h1M191 3h1M198 3h1M1 4h1M8 4h1M12 4h1M15 4h1M23 4h1M41 4h1M46 4h1M49 4h1M60 4h1M63 4h1M65 4h1M70 4h1M71 4h1M77 4h1M101 4h1M102 4h1M103 4h1M104 4h1M112 4h1M114 4h1M117 4h1M122 4h1M136 4h1M140 4h1M141 4h1M146 4h1M157 4h1M166 4h1M169 4h1M173 4h1M174 4h1M187 4h1M188 4h1M189 4h1M204 4h1M208 4h1M210 4h1M216 4h1M219 4h1M222 4h1M5 5h1M8 5h1M13 5h1M15 5h1M17 5h1M20 5h1M23 5h1M32 5h1M37 5h1M40 5h1M41 5h1M43 5h1M45 5h1M46 5h1M51 5h1M58 5h1M61 5h1M74 5h1M76 5h1M83 5h1M100 5h1M101 5h1M117 5h1M127 5h1M130 5h1M133 5h1M138 5h1M142 5h1M148 5h1M151 5h1M156 5h1M160 5h1M171 5h1M172 5h1M178 5h1M190 5h1M195 5h1M207 5h1M208 5h1M217 5h1M218 5h1M220 5h1M17 6h1M18 6h1M20 6h1M28 6h1M30 6h1M44 6h1M63 6h1M73 6h1M85 6h1M86 6h1M96 6h1M97 6h1M99 6h1M100 6h1M101 6h1M102 6h1M106 6h1M112 6h1M113 6h1M117 6h1M124 6h1M142 6h1M144 6h1M148 6h1M151 6h1M180 6h1M182 6h1M191 6h1M193 6h1M196 6h1M198 6h1M200 6h1M205 6h1M211 6h1M212 6h1M5 7h1M12 7h1M35 7h1M40 7h1M45 7h1M46 7h1M47 7h1M53 7h1M60 7h1M63 7h1M71 7h1M97 7h1M116 7h1M118 7h1M123 7h1M130 7h1M132 7h1M143 7h1M156 7h1M176 7h1M192 7h1M199 7h1M203 7h1M205 7h1M206 7h1M214 7h1M0 8h1M8 8h1M10 8h1M16 8h1M26 8h1M40 8h1M53 8h1M54 8h1M58 8h1M65 8h1M74 8h1M77 8h1M78 8h1M79 8h1M107 8h1M108 8h1M117 8h1M127 8h1M129 8h1M146 8h1M159 8h1M183 8h1M184 8h1M186 8h1M189 8h1M200 8h1M201 8h1M203 8h1M216 8h1M0 9h1M3 9h1M5 9h1M6 9h1M11 9h1M14 9h1M15 9h1M20 9h1M27 9h1M31 9h1M32 9h1M36 9h1M41 9h1M44 9h1M50 9h1M53 9h1M59 9h1M60 9h1M61 9h1M65 9h1M67 9h1M91 9h1M102 9h1M105 9h1M107 9h1M111 9h1M132 9h1M133 9h1M135 9h1M143 9h1M145 9h1M146 9h1M151 9h1M158 9h1M164 9h1M168 9h1M176 9h1M181 9h1M187 9h1M189 9h1M197 9h1M201 9h1M207 9h1M213 9h1M217 9h1M220 9h1M1 10h1M4 10h1M5 10h1M15 10h1M23 10h1M28 10h1M32 10h1M39 10h1M42 10h1M45 10h1M64 10h1M66 10h1M67 10h1M77 10h1M82 10h1M84 10h1M87 10h1M89 10h1M96 10h1M124 10h1M132 10h1M145 10h1M146 10h1M158 10h1M163 10h1M164 10h1M167 10h1M170 10h1M176 10h1M177 10h1M189 10h1M192 10h1M195 10h1M196 10h1M204 10h1M211 10h1M218 10h1M1 11h1M18 11h1M20 11h1M23 11h1M30 11h1M41 11h1M43 11h1M82 11h1M84 11h1M94 11h1M99 11h1M119 11h1M124 11h1M130 11h1M136 11h1M138 11h1M142 11h1M149 11h1M151 11h1M178 11h1M184 11h1M201 11h1M203 11h1M206 11h1M214 11h1M221 11h1M8 12h1M9 12h1M13 12h1M15 12h1M19 12h1M27 12h1M38 12h1M44 12h1M48 12h1M60 12h1M63 12h1M65 12h1M66 12h1M71 12h1M74 12h1M80 12h1M89 12h1M92 12h1M111 12h1M124 12h1M125 12h1M129 12h1M142 12h1M144 12h1M156 12h1M160 12h1M174 12h1M179 12h1M187 12h1M208 12h1M210 12h1M5 13h1M6 13h1M8 13h1M14 13h1M28 13h1M30 13h1M55 13h1M64 13h1M94 13h1M101 13h1M106 13h1M110 13h1M111 13h1M123 13h1M126 13h1M137 13h1M138 13h1M139 13h1M140 13h1M146 13h1M147 13h1M150 13h1M159 13h1M166 13h1M169 13h1M182 13h1M186 13h1M189 13h1M195 13h1M198 13h1M203 13h1M205 13h1M212 13h1M214 13h1M4 14h1M5 14h1M7 14h1M9 14h1M40 14h1M57 14h1M62 14h1M63 14h1M64 14h1M71 14h1M78 14h1M85 14h1M97 14h1M100 14h1M102 14h1M103 14h1M108 14h1M114 14h1M121 14h1M123 14h1M125 14h1M136 14h1M143 14h1M145 14h1M147 14h1M155 14h1M165 14h1M166 14h1M170 14h1M173 14h1M182 14h1M183 14h1M222 14h1M7 15h1M10 15h1M16 15h1M30 15h1M33 15h1M35 15h1M40 15h1M51 15h1M65 15h1M67 15h1M80 15h1M83 15h1M84 15h1M86 15h1M96 15h1M101 15h1M103 15h1M114 15h1M121 15h1M123 15h1M126 15h1M127 15h1M131 15h1M136 15h1M137 15h1M141 15h1M142 15h1M151 15h1M154 15h1M158 15h1M168 15h1M172 15h1M183 15h1M185 15h1M188 15h1M193 15h1M205 15h1M212 15h1M214 15h1M20 16h1M24 16h1M28 16h1M29 16h1M30 16h1M48 16h1M51 16h1M53 16h1M70 16h1M76 16h1M83 16h1M97 16h1M104 16h1M106 16h1M107 16h1M111 16h1M113 16h1M128 16h1M151 16h1M161 16h1M165 16h1M167 16h1M175 16h1M176 16h1M181 16h1M189 16h1M193 16h1M212 16h1M6 17h1M11 17h1M18 17h1M22 17h1M32 17h1M35 17h1M50 17h1M51 17h1M52 17h1M55 17h1M58 17h1M67 17h1M78 17h1M81 17h1M82 17h1M83 17h1M90 17h1M92 17h1M93 17h1M94 17h1M96 17h1M110 17h1M114 17h1M118 17h1M119 17h1M124 17h1M125 17h1M130 17h1M131 17h1M147 17h1M161 17h1M168 17h1M184 17h1M191 17h1M192 17h1M195 17h1M201 17h1M217 17h1M221 17h1M1 18h1M4 18h1M9 18h1M13 18h1M15 18h1M19 18h1M21 18h1M25 18h1M28 18h1M31 18h1M57 18h1M93 18h1M94 18h1M98 18h1M122 18h1M131 18h1M144 18h1M157 18h1M163 18h1M168 18h1M169 18h1M186 18h1M195 18h1M203 18h1M207 18h1M211 18h1M212 18h1M213 18h1M215 18h1M216 18h1M218 18h1M220 18h1M222 18h1M7 19h1M31 19h1M43 19h1M44 19h1M54 19h1M63 19h1M64 19h1M83 19h1M85 19h1M88 19h1M95 19h1M96 19h1M108 19h1M110 19h1M115 19h1M116 19h1M146 19h1M151 19h1M155 19h1M157 19h1M158 19h1M165 19h1M179 19h1M180 19h1M193 19h1M199 19h1M212 19h1M217 19h1M218 19h1M220 19h1M7 20h1M11 20h1M23 20h1M25 20h1M27 20h1M28 20h1M33 20h1M46 20h1M50 20h1M63 20h1M69 20h1M71 20h1M74 20h1M79 20h1M81 20h1M82 20h1M106 20h1M112 20h1M116 20h1M122 20h1M123 20h1M125 20h1M129 20h1M133 20h1M135 20h1M140 20h1M157 20h1M161 20h1M170 20h1M172 20h1M174 20h1M182 20h1M186 20h1M193 20h1M198 20h1M205 20h1M208 20h1M211 20h1M2 21h1M9 21h1M10 21h1M11 21h1M18 21h1M21 21h1M23 21h1M34 21h1M43 21h1M46 21h1M66 21h1M72 21h1M78 21h1M82 21h1M89 21h1M94 21h1M96 21h1M97 21h1M99 21h1M101 21h1M106 21h1M107 21h1M108 21h1M110 21h1M115 21h1M116 21h1M124 21h1M133 21h1M150 21h1M165 21h1M173 21h1M188 21h1M200 21h1M201 21h1M205 21h1M207 21h1M209 21h1M2 22h1M4 22h1M5 22h1M6 22h1M9 22h1M16 22h1M18 22h1M19 22h1M30 22h1M38 22h1M44 22h1M46 22h1M55 22h1M66 22h1M69 22h1M75 22h1M78 22h1M81 22h1M84 22h1M86 22h1M87 22h1M97 22h1M111 22h1M112 22h1M115 22h1M117 22h1M123 22h1M153 22h1M163 22h1M167 22h1M169 22h1M179 22h1M184 22h1M188 22h1M189 22h1M192 22h1M196 22h1M206 22h1M6 23h1M11 23h1M12 23h1M28 23h1M30 23h1M35 23h1M49 23h1M56 23h1M61 23h1M65 23h1M70 23h1M80 23h1M92 23h1M97 23h1M126 23h1M139 23h1M156 23h1M161 23h1M169 23h1M176 23h1M182 23h1M196 23h1M197 23h1M208 23h1M210 23h1M212 23h1M1 24h1M7 24h1M15 24h1M22 24h1M30 24h1M78 24h1M84 24h1M88 24h1M101 24h1M103 24h1M111 24h1M114 24h1M126 24h1M132 24h1M136 24h1M142 24h1M143 24h1M162 24h1M164 24h1M165 24h1M181 24h1M183 24h1M200 24h1M201 24h1M206 24h1M211 24h1M213 24h1M222 24h1M3 25h1M5 25h1M31 25h1M40 25h1M41 25h1M43 25h1M52 25h1M63 25h1M73 25h1M75 25h1M76 25h1M80 25h1M87 25h1M111 25h1M116 25h1M117 25h1M140 25h1M144 25h1M146 25h1M147 25h1M158 25h1M168 25h1M177 25h1M179 25h1M180 25h1M181 25h1M185 25h1M190 25h1M194 25h1M195 25h1M206 25h1M207 25h1M219 25h1M222 25h1M0 26h1M8 26h1M17 26h1M36 26h1M39 26h1M41 26h1M44 26h1M50 26h1M57 26h1M70 26h1M87 26h1M109 26h1M112 26h1M123 26h1M131 26h1M137 26h1M140 26h1M144 26h1M169 26h1M174 26h1M179 26h1M182 26h1M184 26h1M195 26h1M206 26h1M207 26h1M211 26h1M213 26h1M215 26h1M10 27h1M11 27h1M15 27h1M19 27h1M43 27h1M47 27h1M62 27h1M64 27h1M69 27h1M75 27h1M77 27h1M85 27h1M92 27h1M97 27h1M98 27h1M107 27h1M111 27h1M118 27h1M119 27h1M136 27h1M137 27h1M150 27h1M153 27h1M156 27h1M162 27h1M176 27h1M178 27h1M185 27h1M191 27h1M196 27h1M206 27h1M207 27h1M210 27h1M212 27h1M218 27h1M1 28h1M7 28h1M9 28h1M20 28h1M22 28h1M27 28h1M29 28h1M33 28h1M38 28h1M39 28h1M48 28h1M53 28h1M54 28h1M60 28h1M62 28h1M71 28h1M80 28h1M92 28h1M108 28h1M114 28h1M118 28h1M154 28h1M160 28h1M167 28h1M178 28h1M194 28h1M196 28h1M199 28h1M203 28h1M209 28h1M214 28h1M221 28h1M2 29h1M35 29h1M38 29h1M40 29h1M48 29h1M55 29h1M72 29h1M77 29h1M79 29h1M101 29h1M115 29h1M118 29h1M120 29h1M126 29h1M135 29h1M136 29h1M141 29h1M146 29h1M151 29h1M157 29h1M171 29h1M173 29h1M174 29h1M176 29h1M177 29h1M178 29h1M189 29h1M194 29h1M209 29h1M212 29h1M217 29h1M219 29h1M221 29h1M2 30h1M4 30h1M6 30h1M7 30h1M9 30h1M31 30h1M32 30h1M38 30h1M43 30h1M46 30h1M49 30h1M55 30h1M57 30h1M63 30h1M68 30h1M72 30h1M76 30h1M78 30h1M83 30h1M103 30h1M110 30h1M111 30h1M117 30h1M118 30h1M139 30h1M141 30h1M142 30h1M146 30h1M163 30h1M168 30h1M169 30h1M170 30h1M173 30h1M186 30h1M193 30h1M203 30h1M210 30h1M214 30h1M14 31h1M21 31h1M58 31h1M59 31h1M61 31h1M74 31h1M78 31h1M83 31h1M84 31h1M89 31h1M96 31h1M109 31h1M112 31h1M114 31h1M131 31h1M138 31h1M140 31h1M142 31h1M154 31h1M162 31h1M173 31h1M193 31h1M195 31h1M206 31h1M212 31h1M222 31h1M18 32h1M26 32h1M45 32h1M54 32h1M55 32h1M63 32h1M67 32h1M95 32h1M96 32h1M107 32h1M118 32h1M124 32h1M136 32h1M140 32h1M141 32h1M142 32h1M147 32h1M157 32h1M158 32h1M164 32h1M166 32h1M167 32h1M169 32h1M173 32h1M180 32h1M186 32h1M187 32h1M191 32h1M202 32h1M212 32h1M214 32h1M1 33h1M12 33h1M21 33h1M28 33h1M42 33h1M44 33h1M45 33h1M57 33h1M66 33h1M74 33h1M80 33h1M90 33h1M137 33h1M139 33h1M145 33h1M150 33h1M155 33h1M161 33h1M163 33h1M175 33h1M178 33h1M181 33h1M191 33h1M193 33h1M198 33h1M201 33h1M202 33h1M220 33h1M6 34h1M13 34h1M14 34h1M15 34h1M19 34h1M23 34h1M25 34h1M44 34h1M45 34h1M58 34h1M66 34h1M80 34h1M84 34h1M94 34h1M96 34h1M107 34h1M120 34h1M129 34h1M130 34h1M137 34h1M138 34h1M173 34h1M179 34h1M183 34h1M184 34h1M187 34h1M191 34h1M193 34h1M195 34h1M198 34h1M200 34h1M203 34h1M205 34h1M209 34h1M214 34h1M217 34h1M218 34h1M1 35h1M4 35h1M8 35h1M10 35h1M13 35h1M21 35h1M31 35h1M58 35h1M68 35h1M76 35h1M87 35h1M100 35h1M104 35h1M115 35h1M119 35h1M123 35h1M138 35h1M139 35h1M144 35h1M146 35h1M149 35h1M152 35h1M156 35h1M159 35h1M164 35h1M174 35h1M178 35h1M183 35h1M184 35h1M189 35h1M197 35h1M222 35h1M5 36h1M12 36h1M13 36h1M16 36h1M20 36h1M23 36h1M26 36h1M31 36h1M32 36h1M38 36h1M53 36h1M62 36h1M63 36h1M69 36h1M77 36h1M82 36h1M83 36h1M95 36h1M106 36h1M113 36h1M138 36h1M139 36h1M153 36h1M154 36h1M164 36h1M165 36h1M179 36h1M184 36h1M195 36h1M196 36h1M199 36h1M212 36h1M218 36h1M220 36h1M222 36h1M4 37h1M6 37h1M7 37h1M19 37h1M20 37h1M36 37h1M38 37h1M49 37h1M55 37h1M61 37h1M62 37h1M68 37h1M69 37h1M82 37h1M96 37h1M108 37h1M114 37h1M129 37h1M132 37h1M143 37h1M149 37h1M153 37h1M157 37h1M166 37h1M175 37h1M182 37h1M185 37h1M187 37h1M189 37h1M198 37h1M201 37h1M206 37h1M214 37h1M215 37h1M218 37h1M2 38h1M6 38h1M9 38h1M18 38h1M31 38h1M52 38h1M57 38h1M70 38h1M77 38h1M83 38h1M100 38h1M110 38h1M111 38h1M115 38h1M116 38h1M122 38h1M140 38h1M145 38h1M148 38h1M151 38h1M165 38h1M180 38h1M191 38h1M192 38h1M195 38h1M198 38h1M213 38h1M6 39h1M15 39h1M20 39h1M24 39h1M29 39h1M38 39h1M39 39h1M57 39h1M73 39h1M74 39h1M76 39h1M82 39h1M90 39h1M119 39h1M125 39h1M126 39h1M130 39h1M132 39h1M140 39h1M142 39h1M150 39h1M151 39h1M154 39h1M155 39h1M157 39h1M164 39h1M166 39h1M173 39h1M180 39h1M186 39h1M187 39h1M193 39h1M195 39h1M198 39h1M3 40h1M5 40h1M7 40h1M10 40h1M11 40h1M25 40h1M30 40h1M32 40h1M34 40h1M57 40h1M58 40h1M96 40h1M104 40h1M106 40h1M112 40h1M115 40h1M117 40h1M119 40h1M128 40h1M137 40h1M142 40h1M156 40h1M163 40h1M168 40h1M173 40h1M174 40h1M175 40h1M185 40h1M192 40h1M211 40h1M212 40h1M216 40h1M218 40h1M222 40h1M2 41h1M4 41h1M14 41h1M15 41h1M17 41h1M18 41h1M19 41h1M20 41h1M25 41h1M45 41h1M46 41h1M50 41h1M55 41h1M62 41h1M73 41h1M88 41h1M92 41h1M98 41h1M125 41h1M130 41h1M133 41h1M138 41h1M156 41h1M167 41h1M169 41h1M176 41h1M183 41h1M187 41h1M191 41h1M193 41h1M210 41h1M217 41h1M4 42h1M41 42h1M44 42h1M50 42h1M59 42h1M65 42h1M94 42h1M109 42h1M118 42h1M119 42h1M129 42h1M132 42h1M133 42h1M135 42h1M145 42h1M146 42h1M157 42h1M165 42h1M172 42h1M177 42h1M188 42h1M192 42h1M202 42h1M205 42h1M206 42h1M212 42h1M214 42h1M222 42h1M1 43h1M9 43h1M19 43h1M20 43h1M28 43h1M30 43h1M35 43h1M36 43h1M40 43h1M46 43h1M53 43h1M55 43h1M58 43h1M67 43h1M74 43h1M87 43h1M95 43h1M96 43h1M107 43h1M115 43h1M125 43h1M129 43h1M138 43h1M142 43h1M147 43h1M148 43h1M151 43h1M158 43h1M165 43h1M167 43h1M170 43h1M171 43h1M175 43h1M177 43h1M190 43h1M198 43h1M205 43h1M215 43h1M217 43h1M2 44h1M9 44h1M13 44h1M17 44h1M18 44h1M22 44h1M32 44h1M35 44h1M38 44h1M43 44h1M50 44h1M55 44h1M56 44h1M59 44h1M66 44h1M67 44h1M69 44h1M75 44h1M80 44h1M85 44h1M91 44h1M97 44h1M100 44h1M104 44h1M106 44h1M108 44h1M112 44h1M119 44h1M121 44h1M139 44h1M157 44h1M174 44h1M194 44h1M205 44h1M213 44h1M216 44h1M218 44h1M23 45h1M27 45h1M42 45h1M73 45h1M74 45h1M96 45h1M99 45h1M100 45h1M118 45h1M120 45h1M129 45h1M131 45h1M138 45h1M154 45h1M157 45h1M158 45h1M169 45h1M188 45h1M189 45h1M193 45h1M197 45h1M201 45h1M202 45h1M204 45h1M207 45h1M217 45h1M218 45h1M219 45h1M3 46h1M12 46h1M35 46h1M39 46h1M79 46h1M81 46h1M84 46h1M90 46h1M102 46h1M106 46h1M109 46h1M114 46h1M116 46h1M133 46h1M135 46h1M148 46h1M150 46h1M151 46h1M157 46h1M166 46h1M170 46h1M172 46h1M190 46h1M194 46h1M198 46h1M205 46h1M210 46h1M214 46h1M218 46h1M222 46h1M1 47h1M5 47h1M17 47h1M18 47h1M24 47h1M32 47h1M42 47h1M44 47h1M66 47h1M69 47h1M71 47h1M79 47h1M81 47h1M83 47h1M88 47h1M89 47h1M94 47h1M95 47h1M97 47h1M101 47h1M107 47h1M114 47h1M117 47h1M123 47h1M128 47h1M129 47h1M138 47h1M141 47h1M142 47h1M143 47h1M146 47h1M152 47h1M164 47h1M168 47h1M193 47h1M210 47h1M4 48h1M5 48h1M8 48h1M19 48h1M21 48h1M22 48h1M27 48h1M28 48h1M32 48h1M52 48h1M59 48h1M63 48h1M65 48h1M89 48h1M94 48h1M96 48h1M101 48h1M111 48h1M119 48h1M123 48h1M127 48h1M131 48h1M134 48h1M135 48h1M136 48h1M138 48h1M139 48h1M173 48h1M180 48h1M185 48h1M190 48h1M197 48h1M203 48h1M218 48h1M0 49h1M12 49h1M20 49h1M22 49h1M31 49h1M64 49h1M66 49h1M70 49h1M75 49h1M98 49h1M104 49h1M106 49h1M109 49h1M120 49h1M121 49h1M123 49h1M125 49h1M126 49h1M137 49h1M139 49h1M140 49h1M144 49h1M151 49h1M167 49h1M170 49h1M176 49h1M179 49h1M181 49h1M183 49h1M200 49h1M210 49h1M219 49h1M220 49h1M222 49h1M0 50h1M5 50h1M7 50h1M18 50h1M26 50h1M42 50h1M54 50h1M55 50h1M79 50h1M80 50h1M87 50h1M91 50h1M92 50h1M93 50h1M99 50h1M101 50h1M105 50h1M112 50h1M113 50h1M117 50h1M128 50h1M139 50h1M145 50h1M155 50h1M167 50h1M169 50h1M175 50h1M187 50h1M188 50h1M195 50h1M197 50h1M199 50h1M206 50h1M209 50h1M214 50h1M21 51h1M22 51h1M25 51h1M27 51h1M33 51h1M34 51h1M35 51h1M44 51h1M54 51h1M55 51h1M66 51h1M76 51h1M93 51h1M95 51h1M99 51h1M101 51h1M104 51h1M108 51h1M115 51h1M118 51h1M125 51h1M154 51h1M161 51h1M167 51h1M174 51h1M196 51h1M0 52h1M6 52h1M7 52h1M21 52h1M31 52h1M53 52h1M54 52h1M55 52h1M56 52h1M61 52h1M62 52h1M75 52h1M78 52h1M84 52h1M88 52h1M90 52h1M94 52h1M96 52h1M122 52h1M134 52h1M136 52h1M150 52h1M154 52h1M155 52h1M174 52h1M197 52h1M198 52h1M206 52h1M208 52h1M2 53h1M3 53h1M15 53h1M16 53h1M25 53h1M28 53h1M48 53h1M54 53h1M59 53h1M80 53h1M81 53h1M87 53h1M88 53h1M122 53h1M131 53h1M136 53h1M137 53h1M165 53h1M169 53h1M170 53h1M174 53h1M176 53h1M184 53h1M190 53h1M201 53h1M202 53h1M203 53h1M213 53h1M214 53h1M217 53h1M222 53h1M3 54h1M10 54h1M18 54h1M30 54h1M33 54h1M39 54h1M46 54h1M51 54h1M52 54h1M53 54h1M64 54h1M65 54h1M74 54h1M75 54h1M78 54h1M90 54h1M94 54h1M103 54h1M107 54h1M108 54h1M111 54h1M115 54h1M131 54h1M140 54h1M141 54h1M147 54h1M150 54h1M158 54h1M168 54h1M186 54h1M191 54h1M192 54h1M195 54h1M216 54h1M5 55h1M15 55h1M18 55h1M20 55h1M26 55h1M35 55h1M46 55h1M54 55h1M63 55h1M65 55h1M66 55h1M67 55h1M71 55h1M78 55h1M92 55h1M104 55h1M126 55h1M130 55h1M135 55h1M137 55h1M138 55h1M145 55h1M148 55h1M159 55h1M162 55h1M166 55h1M172 55h1M184 55h1M197 55h1M200 55h1M207 55h1M211 55h1M220 55h1M3 56h1M5 56h1M17 56h1M24 56h1M25 56h1M30 56h1M31 56h1M43 56h1M47 56h1M51 56h1M58 56h1M60 56h1M65 56h1M68 56h1M69 56h1M75 56h1M82 56h1M86 56h1M95 56h1M104 56h1M107 56h1M108 56h1M110 56h1M128 56h1M129 56h1M132 56h1M142 56h1M156 56h1M169 56h1M181 56h1M185 56h1M190 56h1M195 56h1M198 56h1M204 56h1M205 56h1M207 56h1M209 56h1M217 56h1M221 56h1M0 57h1M2 57h1M11 57h1M14 57h1M24 57h1M26 57h1M27 57h1M37 57h1M44 57h1M59 57h1M69 57h1M76 57h1M79 57h1M86 57h1M90 57h1M92 57h1M99 57h1M102 57h1M105 57h1M107 57h1M115 57h1M121 57h1M125 57h1M127 57h1M133 57h1M152 57h1M153 57h1M156 57h1M173 57h1M184 57h1M185 57h1M186 57h1M191 57h1M193 57h1M194 57h1M205 57h1M210 57h1M212 57h1M217 57h1M219 57h1M4 58h1M19 58h1M21 58h1M32 58h1M41 58h1M66 58h1M75 58h1M76 58h1M85 58h1M100 58h1M110 58h1M112 58h1M113 58h1M116 58h1M130 58h1M134 58h1M137 58h1M138 58h1M158 58h1M160 58h1M165 58h1M167 58h1M169 58h1M170 58h1M178 58h1M181 58h1M189 58h1M191 58h1M194 58h1M197 58h1M199 58h1M203 58h1M204 58h1M205 58h1M219 58h1M220 58h1M222 58h1M14 59h1M16 59h1M19 59h1M20 59h1M33 59h1M51 59h1M61 59h1M65 59h1M68 59h1M81 59h1M82 59h1M84 59h1M88 59h1M90 59h1M91 59h1M95 59h1M105 59h1M114 59h1M120 59h1M136 59h1M138 59h1M140 59h1M145 59h1M147 59h1M153 59h1M158 59h1M167 59h1M171 59h1M174 59h1M178 59h1M208 59h1M213 59h1M221 59h1M222 59h1M1 60h1M21 60h1M37 60h1M52 60h1M63 60h1M67 60h1M71 60h1M76 60h1M81 60h1M82 60h1M94 60h1M107 60h1M108 60h1M113 60h1M114 60h1M126 60h1M136 60h1M137 60h1M143 60h1M151 60h1M169 60h1M172 60h1M177 60h1M180 60h1M187 60h1M209 60h1M210 60h1M211 60h1M212 60h1M215 60h1M217 60h1M1 61h1M9 61h1M11 61h1M25 61h1M30 61h1M34 61h1M56 61h1M60 61h1M67 61h1M80 61h1M81 61h1M82 61h1M84 61h1M93 61h1M95 61h1M112 61h1M115 61h1M119 61h1M120 61h1M121 61h1M124 61h1M128 61h1M139 61h1M147 61h1M148 61h1M151 61h1M177 61h1M185 61h1M193 61h1M194 61h1M203 61h1M213 61h1M219 61h1M0 62h1M4 62h1M19 62h1M23 62h1M27 62h1M31 62h1M50 62h1M55 62h1M57 62h1M67 62h1M74 62h1M75 62h1M82 62h1M89 62h1M92 62h1M93 62h1M94 62h1M101 62h1M102 62h1M105 62h1M109 62h1M114 62h1M115 62h1M119 62h1M128 62h1M133 62h1M139 62h1M147 62h1M157 62h1M188 62h1M192 62h1M197 62h1M205 62h1M209 62h1M210 62h1M211 62h1M212 62h1M213 62h1M1 63h1M2 63h1M12 63h1M17 63h1M26 63h1M30 63h1M48 63h1M50 63h1M62 63h1M71 63h1M78 63h1M79 63h1M85 63h1M87 63h1M92 63h1M103 63h1M124 63h1M146 63h1M148 63h1M149 63h1M153 63h1M158 63h1M171 63h1M186 63h1M187 63h1M193 63h1M195 63h1M204 63h1M205 63h1M207 63h1M208 63h1M215 63h1M222 63h1M1 64h1M8 64h1M11 64h1M13 64h1M16 64h1M19 64h1M20 64h1M22 64h1M31 64h1M32 64h1M34 64h1M38 64h1M43 64h1M51 64h1M52 64h1M68 64h1M78 64h1M83 64h1M86 64h1M87 64h1M89 64h1M90 64h1M93 64h1M107 64h1M114 64h1M117 64h1M131 64h1M132 64h1M145 64h1M147 64h1M164 64h1M167 64h1M171 64h1M184 64h1M188 64h1M194 64h1M201 64h1M215 64h1M1 65h1M2 65h1M3 65h1M4 65h1M6 65h1M7 65h1M22 65h1M24 65h1M27 65h1M28 65h1M30 65h1M38 65h1M45 65h1M51 65h1M70 65h1M71 65h1M72 65h1M77 65h1M78 65h1M82 65h1M84 65h1M87 65h1M88 65h1M98 65h1M107 65h1M127 65h1M129 65h1M148 65h1M156 65h1M158 65h1M166 65h1M170 65h1M173 65h1M174 65h1M187 65h1M190 65h1M191 65h1M192 65h1M210 65h1M212 65h1M221 65h1M4 66h1M12 66h1M14 66h1M21 66h1M26 66h1M29 66h1M31 66h1M32 66h1M34 66h1M43 66h1M55 66h1M56 66h1M62 66h1M65 66h1M68 66h1M71 66h1M76 66h1M80 66h1M86 66h1M94 66h1M98 66h1M111 66h1M112 66h1M128 66h1M132 66h1M134 66h1M138 66h1M146 66h1M149 66h1M155 66h1M163 66h1M164 66h1M176 66h1M177 66h1M209 66h1M214 66h1M220 66h1M13 67h1M21 67h1M25 67h1M47 67h1M52 67h1M60 67h1M64 67h1M73 67h1M76 67h1M77 67h1M86 67h1M90 67h1M91 67h1M103 67h1M107 67h1M113 67h1M117 67h1M118 67h1M121 67h1M143 67h1M146 67h1M150 67h1M151 67h1M154 67h1M161 67h1M162 67h1M163 67h1M165 67h1M167 67h1M172 67h1M180 67h1M181 67h1M197 67h1M199 67h1M200 67h1M205 67h1M207 67h1M215 67h1M217 67h1M221 67h1M3 68h1M5 68h1M10 68h1M11 68h1M12 68h1M16 68h1M25 68h1M30 68h1M32 68h1M33 68h1M37 68h1M45 68h1M48 68h1M56 68h1M70 68h1M76 68h1M93 68h1M97 68h1M99 68h1M139 68h1M148 68h1M162 68h1M164 68h1M168 68h1M169 68h1M170 68h1M186 68h1M194 68h1M195 68h1M199 68h1M220 68h1M7 69h1M9 69h1M24 69h1M28 69h1M37 69h1M40 69h1M48 69h1M60 69h1M61 69h1M66 69h1M72 69h1M76 69h1M83 69h1M91 69h1M93 69h1M98 69h1M111 69h1M115 69h1M118 69h1M119 69h1M137 69h1M141 69h1M146 69h1M160 69h1M163 69h1M166 69h1M177 69h1M185 69h1M186 69h1M188 69h1M191 69h1M209 69h1M210 69h1M211 69h1M216 69h1M6 70h1M10 70h1M15 70h1M16 70h1M34 70h1M45 70h1M46 70h1M50 70h1M51 70h1M52 70h1M59 70h1M60 70h1M63 70h1M67 70h1M68 70h1M78 70h1M82 70h1M83 70h1M85 70h1M86 70h1M98 70h1M105 70h1M107 70h1M112 70h1M117 70h1M119 70h1M128 70h1M132 70h1M140 70h1M142 70h1M145 70h1M149 70h1M155 70h1M159 70h1M163 70h1M177 70h1M185 70h1M193 70h1M194 70h1M200 70h1M201 70h1M212 70h1M219 70h1M7 71h1M27 71h1M35 71h1M57 71h1M71 71h1M73 71h1M76 71h1M77 71h1M80 71h1M81 71h1M89 71h1M90 71h1M94 71h1M98 71h1M103 71h1M127 71h1M134 71h1M146 71h1M150 71h1M154 71h1M171 71h1M177 71h1M181 71h1M197 71h1M2 72h1M8 72h1M14 72h1M27 72h1M39 72h1M50 72h1M63 72h1M65 72h1M72 72h1M73 72h1M74 72h1M85 72h1M93 72h1M99 72h1M101 72h1M106 72h1M108 72h1M123 72h1M125 72h1M137 72h1M149 72h1M152 72h1M157 72h1M161 72h1M163 72h1M170 72h1M172 72h1M178 72h1M197 72h1M206 72h1M212 72h1M215 72h1M216 72h1M6 73h1M19 73h1M20 73h1M22 73h1M27 73h1M29 73h1M38 73h1M39 73h1M42 73h1M47 73h1M54 73h1M58 73h1M64 73h1M70 73h1M79 73h1M95 73h1M96 73h1M110 73h1M137 73h1M141 73h1M149 73h1M153 73h1M160 73h1M166 73h1M167 73h1M171 73h1M187 73h1M206 73h1M212 73h1M216 73h1M217 73h1M219 73h1M7 74h1M14 74h1M33 74h1M36 74h1M38 74h1M41 74h1M48 74h1M53 74h1M58 74h1M60 74h1M63 74h1M65 74h1M66 74h1M67 74h1M70 74h1M90 74h1M106 74h1M137 74h1M169 74h1M171 74h1M174 74h1M184 74h1M189 74h1M195 74h1M202 74h1M205 74h1M3 75h1M6 75h1M10 75h1M16 75h1M25 75h1M64 75h1M72 75h1M78 75h1M82 75h1M95 75h1M100 75h1M103 75h1M105 75h1M112 75h1M115 75h1M130 75h1M140 75h1M141 75h1M143 75h1M155 75h1M166 75h1M169 75h1M171 75h1M174 75h1M180 75h1M184 75h1M190 75h1M202 75h1M210 75h1M213 75h1M219 75h1M13 76h1M25 76h1M37 76h1M44 76h1M45 76h1M46 76h1M51 76h1M54 76h1M68 76h1M72 76h1M74 76h1M76 76h1M79 76h1M85 76h1M106 76h1M132 76h1M141 76h1M145 76h1M162 76h1M171 76h1M173 76h1M183 76h1M184 76h1M187 76h1M191 76h1M197 76h1M200 76h1M3 77h1M7 77h1M22 77h1M33 77h1M34 77h1M48 77h1M49 77h1M51 77h1M57 77h1M58 77h1M63 77h1M73 77h1M98 77h1M107 77h1M114 77h1M130 77h1M133 77h1M136 77h1M146 77h1M147 77h1M157 77h1M167 77h1M172 77h1M182 77h1M187 77h1M191 77h1M192 77h1M198 77h1M209 77h1M211 77h1M213 77h1M220 77h1M222 77h1M5 78h1M9 78h1M12 78h1M20 78h1M26 78h1M27 78h1M28 78h1M29 78h1M44 78h1M47 78h1M51 78h1M55 78h1M67 78h1M73 78h1M75 78h1M79 78h1M83 78h1M85 78h1M87 78h1M90 78h1M101 78h1M115 78h1M121 78h1M124 78h1M127 78h1M129 78h1M141 78h1M148 78h1M149 78h1M152 78h1M153 78h1M158 78h1M163 78h1M164 78h1M167 78h1M170 78h1M176 78h1M185 78h1M187 78h1M197 78h1M199 78h1M204 78h1M214 78h1M216 78h1M0 79h1M7 79h1M8 79h1M13 79h1M14 79h1M18 79h1M24 79h1M40 79h1M50 79h1M65 79h1M70 79h1M75 79h1M76 79h1M78 79h1M84 79h1M93 79h1M102 79h1M104 79h1M111 79h1M113 79h1M117 79h1M122 79h1M137 79h1M148 79h1M157 79h1M158 79h1M159 79h1M160 79h1M164 79h1M171 79h1M175 79h1M177 79h1M180 79h1M183 79h1M188 79h1M193 79h1M198 79h1M201 79h1M204 79h1M206 79h1M207 79h1M211 79h1M213 79h1M5 80h1M7 80h1M13 80h1M16 80h1M26 80h1M32 80h1M45 80h1M46 80h1M49 80h1M52 80h1M64 80h1M66 80h1M85 80h1M86 80h1M87 80h1M92 80h1M98 80h1M103 80h1M115 80h1M126 80h1M131 80h1M134 80h1M140 80h1M146 80h1M149 80h1M150 80h1M155 80h1M157 80h1M161 80h1M162 80h1M163 80h1M164 80h1M179 80h1M181 80h1M184 80h1M185 80h1M191 80h1M194 80h1M205 80h1M209 80h1M211 80h1M215 80h1M217 80h1M4 81h1M9 81h1M25 81h1M47 81h1M51 81h1M52 81h1M55 81h1M65 81h1M66 81h1M67 81h1M72 81h1M77 81h1M78 81h1M81 81h1M89 81h1M98 81h1M108 81h1M112 81h1M127 81h1M129 81h1M158 81h1M160 81h1M161 81h1M189 81h1M192 81h1M193 81h1M204 81h1M214 81h1M2 82h1M23 82h1M24 82h1M31 82h1M46 82h1M52 82h1M53 82h1M74 82h1M75 82h1M81 82h1M82 82h1M98 82h1M100 82h1M102 82h1M104 82h1M106 82h1M111 82h1M124 82h1M128 82h1M134 82h1M138 82h1M151 82h1M158 82h1M167 82h1M168 82h1M171 82h1M173 82h1M187 82h1M190 82h1M192 82h1M195 82h1M196 82h1M197 82h1M204 82h1M205 82h1M10 83h1M12 83h1M13 83h1M14 83h1M26 83h1M28 83h1M50 83h1M53 83h1M54 83h1M60 83h1M62 83h1M67 83h1M70 83h1M97 83h1M99 83h1M104 83h1M106 83h1M122 83h1M128 83h1M131 83h1M137 83h1M138 83h1M141 83h1M154 83h1M161 83h1M183 83h1M191 83h1M202 83h1M203 83h1M206 83h1M207 83h1M211 83h1M219 83h1M2 84h1M7 84h1M8 84h1M9 84h1M12 84h1M23 84h1M28 84h1M36 84h1M45 84h1M53 84h1M58 84h1M64 84h1M77 84h1M79 84h1M89 84h1M90 84h1M111 84h1M128 84h1M133 84h1M153 84h1M155 84h1M177 84h1M187 84h1M189 84h1M192 84h1M200 84h1M204 84h1M210 84h1M211 84h1M218 84h1M222 84h1M7 85h1M9 85h1M18 85h1M30 85h1M42 85h1M43 85h1M45 85h1M54 85h1M69 85h1M94 85h1M97 85h1M108 85h1M118 85h1M140 85h1M146 85h1M159 85h1M174 85h1M175 85h1M179 85h1M185 85h1M188 85h1M194 85h1M196 85h1M210 85h1M211 85h1M217 85h1M222 85h1M10 86h1M12 86h1M13 86h1M17 86h1M19 86h1M24 86h1M27 86h1M34 86h1M40 86h1M47 86h1M49 86h1M61 86h1M62 86h1M63 86h1M74 86h1M96 86h1M111 86h1M113 86h1M143 86h1M146 86h1M151 86h1M153 86h1M154 86h1M159 86h1M161 86h1M172 86h1M176 86h1M181 86h1M184 86h1M185 86h1M194 86h1M206 86h1M213 86h1M214 86h1M216 86h1M4 87h1M10 87h1M13 87h1M29 87h1M32 87h1M36 87h1M43 87h1M48 87h1M53 87h1M59 87h1M76 87h1M78 87h1M82 87h1M85 87h1M89 87h1M94 87h1M97 87h1M101 87h1M107 87h1M119 87h1M121 87h1M134 87h1M140 87h1M147 87h1M170 87h1M171 87h1M177 87h1M179 87h1M184 87h1M204 87h1M215 87h1M217 87h1M0 88h1M13 88h1M16 88h1M30 88h1M36 88h1M47 88h1M56 88h1M66 88h1M74 88h1M81 88h1M89 88h1M90 88h1M92 88h1M98 88h1M99 88h1M100 88h1M113 88h1M116 88h1M121 88h1M133 88h1M136 88h1M137 88h1M138 88h1M140 88h1M141 88h1M142 88h1M143 88h1M152 88h1M161 88h1M165 88h1M172 88h1M174 88h1M176 88h1M178 88h1M181 88h1M182 88h1M189 88h1M198 88h1M200 88h1M203 88h1M207 88h1M209 88h1M0 89h1M16 89h1M23 89h1M74 89h1M83 89h1M87 89h1M90 89h1M95 89h1M103 89h1M105 89h1M107 89h1M122 89h1M125 89h1M143 89h1M148 89h1M160 89h1M165 89h1M166 89h1M169 89h1M172 89h1M184 89h1M186 89h1M188 89h1M189 89h1M191 89h1M197 89h1M198 89h1M207 89h1M208 89h1M212 89h1M213 89h1M214 89h1M222 89h1M2 90h1M3 90h1M24 90h1M25 90h1M33 90h1M44 90h1M60 90h1M64 90h1M72 90h1M73 90h1M81 90h1M84 90h1M87 90h1M88 90h1M99 90h1M100 90h1M101 90h1M106 90h1M118 90h1M136 90h1M143 90h1M148 90h1M150 90h1M151 90h1M155 90h1M182 90h1M184 90h1M195 90h1M206 90h1M214 90h1M0 91h1M8 91h1M14 91h1M17 91h1M35 91h1M37 91h1M40 91h1M49 91h1M60 91h1M61 91h1M66 91h1M71 91h1M97 91h1M98 91h1M100 91h1M111 91h1M113 91h1M116 91h1M117 91h1M127 91h1M140 91h1M143 91h1M145 91h1M147 91h1M160 91h1M166 91h1M167 91h1M176 91h1M178 91h1M192 91h1M205 91h1M208 91h1M209 91h1M210 91h1M212 91h1M11 92h1M13 92h1M17 92h1M18 92h1M36 92h1M37 92h1M58 92h1M65 92h1M71 92h1M78 92h1M81 92h1M87 92h1M89 92h1M105 92h1M109 92h1M114 92h1M120 92h1M125 92h1M134 92h1M141 92h1M165 92h1M166 92h1M173 92h1M174 92h1M179 92h1M186 92h1M187 92h1M190 92h1M194 92h1M203 92h1M221 92h1M0 93h1M1 93h1M3 93h1M8 93h1M17 93h1M24 93h1M50 93h1M59 93h1M60 93h1M61 93h1M63 93h1M65 93h1M71 93h1M77 93h1M89 93h1M103 93h1M112 93h1M114 93h1M115 93h1M117 93h1M119 93h1M127 93h1M130 93h1M131 93h1M132 93h1M133 93h1M139 93h1M145 93h1M167 93h1M174 93h1M176 93h1M179 93h1M187 93h1M206 93h1M217 93h1M218 93h1M219 93h1M5 94h1M17 94h1M22 94h1M24 94h1M28 94h1M29 94h1M35 94h1M40 94h1M41 94h1M49 94h1M52 94h1M53 94h1M64 94h1M65 94h1M73 94h1M76 94h1M85 94h1M91 94h1M97 94h1M114 94h1M117 94h1M122 94h1M129 94h1M137 94h1M150 94h1M154 94h1M159 94h1M160 94h1M161 94h1M174 94h1M176 94h1M179 94h1M185 94h1M200 94h1M202 94h1M207 94h1M212 94h1M213 94h1M220 94h1M3 95h1M17 95h1M20 95h1M31 95h1M32 95h1M34 95h1M36 95h1M48 95h1M65 95h1M67 95h1M70 95h1M75 95h1M96 95h1M97 95h1M110 95h1M126 95h1M128 95h1M140 95h1M151 95h1M168 95h1M170 95h1M171 95h1M180 95h1M194 95h1M196 95h1M202 95h1M209 95h1M213 95h1M214 95h1M4 96h1M9 96h1M12 96h1M24 96h1M27 96h1M40 96h1M43 96h1M45 96h1M48 96h1M49 96h1M60 96h1M66 96h1M74 96h1M80 96h1M94 96h1M110 96h1M112 96h1M116 96h1M118 96h1M123 96h1M127 96h1M128 96h1M134 96h1M137 96h1M139 96h1M152 96h1M153 96h1M168 96h1M179 96h1M180 96h1M182 96h1M190 96h1M198 96h1M206 96h1M217 96h1M219 96h1M222 96h1M21 97h1M24 97h1M33 97h1M39 97h1M58 97h1M60 97h1M75 97h1M78 97h1M85 97h1M87 97h1M89 97h1M105 97h1M112 97h1M113 97h1M116 97h1M117 97h1M125 97h1M129 97h1M144 97h1M151 97h1M165 97h1M189 97h1M194 97h1M195 97h1M219 97h1M8 98h1M9 98h1M16 98h1M17 98h1M21 98h1M26 98h1M40 98h1M46 98h1M50 98h1M75 98h1M84 98h1M100 98h1M102 98h1M125 98h1M128 98h1M129 98h1M131 98h1M132 98h1M135 98h1M137 98h1M146 98h1M154 98h1M165 98h1M168 98h1M179 98h1M184 98h1M189 98h1M192 98h1M197 98h1M198 98h1M199 98h1M203 98h1M205 98h1M207 98h1M208 98h1M213 98h1M222 98h1M10 99h1M12 99h1M23 99h1M31 99h1M36 99h1M39 99h1M41 99h1M48 99h1M53 99h1M57 99h1M65 99h1M66 99h1M67 99h1M77 99h1M80 99h1M83 99h1M84 99h1M90 99h1M93 99h1M98 99h1M99 99h1M100 99h1M106 99h1M109 99h1M120 99h1M121 99h1M130 99h1M136 99h1M138 99h1M144 99h1M148 99h1M152 99h1M153 99h1M154 99h1M159 99h1M162 99h1M170 99h1M180 99h1M186 99h1M187 99h1M189 99h1M194 99h1M196 99h1M200 99h1M204 99h1M222 99h1M1 100h1M10 100h1M30 100h1M61 100h1M66 100h1M71 100h1M74 100h1M76 100h1M80 100h1M103 100h1M108 100h1M124 100h1M137 100h1M139 100h1M140 100h1M141 100h1M142 100h1M143 100h1M148 100h1M150 100h1M156 100h1M167 100h1M169 100h1M173 100h1M174 100h1M177 100h1M182 100h1M185 100h1M192 100h1M206 100h1M217 100h1M218 100h1M5 101h1M9 101h1M17 101h1M32 101h1M33 101h1M35 101h1M40 101h1M44 101h1M55 101h1M59 101h1M68 101h1M73 101h1M79 101h1M94 101h1M124 101h1M129 101h1M130 101h1M167 101h1M171 101h1M172 101h1M183 101h1M185 101h1M201 101h1M208 101h1M210 101h1M222 101h1M13 102h1M14 102h1M19 102h1M26 102h1M32 102h1M37 102h1M45 102h1M48 102h1M56 102h1M63 102h1M64 102h1M67 102h1M82 102h1M97 102h1M99 102h1M110 102h1M113 102h1M120 102h1M121 102h1M125 102h1M134 102h1M143 102h1M158 102h1M165 102h1M166 102h1M169 102h1M176 102h1M182 102h1M195 102h1M197 102h1M216 102h1M218 102h1M219 102h1M1 103h1M13 103h1M19 103h1M23 103h1M24 103h1M38 103h1M60 103h1M64 103h1M67 103h1M90 103h1M132 103h1M136 103h1M142 103h1M155 103h1M177 103h1M181 103h1M182 103h1M185 103h1M188 103h1M191 103h1M193 103h1M201 103h1M219 103h1M22 104h1M28 104h1M43 104h1M45 104h1M46 104h1M58 104h1M61 104h1M72 104h1M81 104h1M82 104h1M83 104h1M88 104h1M93 104h1M100 104h1M106 104h1M113 104h1M122 104h1M126 104h1M129 104h1M147 104h1M149 104h1M150 104h1M151 104h1M154 104h1M166 104h1M194 104h1M199 104h1M201 104h1M207 104h1M212 104h1M222 104h1M11 105h1M12 105h1M20 105h1M25 105h1M44 105h1M48 105h1M52 105h1M59 105h1M60 105h1M65 105h1M70 105h1M86 105h1M88 105h1M89 105h1M117 105h1M123 105h1M124 105h1M125 105h1M127 105h1M130 105h1M139 105h1M141 105h1M145 105h1M147 105h1M148 105h1M153 105h1M156 105h1M159 105h1M162 105h1M165 105h1M168 105h1M170 105h1M180 105h1M187 105h1M213 105h1M3 106h1M4 106h1M6 106h1M15 106h1M34 106h1M38 106h1M53 106h1M56 106h1M57 106h1M62 106h1M73 106h1M81 106h1M102 106h1M107 106h1M114 106h1M116 106h1M126 106h1M127 106h1M129 106h1M137 106h1M138 106h1M140 106h1M141 106h1M146 106h1M165 106h1M169 106h1M180 106h1M181 106h1M188 106h1M190 106h1M194 106h1M195 106h1M203 106h1M212 106h1M219 106h1M220 106h1M1 107h1M2 107h1M16 107h1M18 107h1M19 107h1M23 107h1M27 107h1M30 107h1M38 107h1M42 107h1M50 107h1M56 107h1M68 107h1M70 107h1M77 107h1M84 107h1M86 107h1M87 107h1M93 107h1M94 107h1M104 107h1M112 107h1M121 107h1M128 107h1M135 107h1M142 107h1M155 107h1M171 107h1M173 107h1M179 107h1M187 107h1M192 107h1M203 107h1M204 107h1M217 107h1M0 108h1M8 108h1M17 108h1M21 108h1M26 108h1M28 108h1M35 108h1M42 108h1M44 108h1M46 108h1M51 108h1M71 108h1M75 108h1M78 108h1M81 108h1M88 108h1M96 108h1M98 108h1M99 108h1M108 108h1M124 108h1M125 108h1M127 108h1M133 108h1M145 108h1M150 108h1M156 108h1M158 108h1M167 108h1M180 108h1M192 108h1M194 108h1M198 108h1M207 108h1M210 108h1M212 108h1M221 108h1M4 109h1M7 109h1M9 109h1M10 109h1M18 109h1M28 109h1M40 109h1M50 109h1M51 109h1M77 109h1M96 109h1M111 109h1M113 109h1M124 109h1M129 109h1M134 109h1M137 109h1M142 109h1M158 109h1M159 109h1M165 109h1M170 109h1M171 109h1M176 109h1M178 109h1M187 109h1M190 109h1M191 109h1M193 109h1M211 109h1M214 109h1M217 109h1M220 109h1M221 109h1M1 110h1M3 110h1M8 110h1M11 110h1M21 110h1M22 110h1M32 110h1M43 110h1M44 110h1M52 110h1M55 110h1M57 110h1M60 110h1M62 110h1M71 110h1M75 110h1M84 110h1M85 110h1M87 110h1M92 110h1M95 110h1M99 110h1M103 110h1M133 110h1M147 110h1M148 110h1M163 110h1M168 110h1M192 110h1M203 110h1M207 110h1M7 111h1M44 111h1M45 111h1M51 111h1M54 111h1M56 111h1M58 111h1M65 111h1M75 111h1M76 111h1M81 111h1M88 111h1M91 111h1M92 111h1M96 111h1M98 111h1M103 111h1M105 111h1M108 111h1M114 111h1M120 111h1M121 111h1M126 111h1M140 111h1M142 111h1M151 111h1M156 111h1M161 111h1M175 111h1M192 111h1M208 111h1M219 111h1M8 112h1M18 112h1M19 112h1M24 112h1M26 112h1M49 112h1M51 112h1M67 112h1M79 112h1M83 112h1M88 112h1M103 112h1M108 112h1M117 112h1M118 112h1M120 112h1M124 112h1M127 112h1M129 112h1M151 112h1M158 112h1M161 112h1M166 112h1M170 112h1M173 112h1M199 112h1M219 112h1M222 112h1M18 113h1M28 113h1M32 113h1M38 113h1M39 113h1M40 113h1M60 113h1M61 113h1M62 113h1M66 113h1M69 113h1M80 113h1M89 113h1M110 113h1M113 113h1M116 113h1M123 113h1M139 113h1M142 113h1M145 113h1M148 113h1M149 113h1M163 113h1M168 113h1M174 113h1M175 113h1M176 113h1M180 113h1M183 113h1M189 113h1M191 113h1M194 113h1M196 113h1M216 113h1M220 113h1M6 114h1M9 114h1M15 114h1M18 114h1M21 114h1M27 114h1M39 114h1M46 114h1M53 114h1M57 114h1M68 114h1M75 114h1M87 114h1M91 114h1M94 114h1M101 114h1M115 114h1M124 114h1M128 114h1M135 114h1M136 114h1M140 114h1M150 114h1M152 114h1M164 114h1M169 114h1M189 114h1M193 114h1M197 114h1M198 114h1M200 114h1M207 114h1M208 114h1M222 114h1M6 115h1M22 115h1M30 115h1M38 115h1M43 115h1M44 115h1M48 115h1M60 115h1M68 115h1M73 115h1M82 115h1M97 115h1M104 115h1M107 115h1M118 115h1M122 115h1M124 115h1M125 115h1M128 115h1M150 115h1M154 115h1M161 115h1M166 115h1M181 115h1M182 115h1M188 115h1M191 115h1M202 115h1M219 115h1M222 115h1M14 116h1M22 116h1M25 116h1M28 116h1M29 116h1M36 116h1M45 116h1M46 116h1M50 116h1M52 116h1M54 116h1M57 116h1M60 116h1M63 116h1M65 116h1M67 116h1M68 116h1M70 116h1M80 116h1M84 116h1M87 116h1M89 116h1M91 116h1M97 116h1M98 116h1M100 116h1M109 116h1M110 116h1M111 116h1M121 116h1M128 116h1M130 116h1M131 116h1M136 116h1M139 116h1M143 116h1M162 116h1M182 116h1M193 116h1M206 116h1M209 116h1M217 116h1M2 117h1M20 117h1M23 117h1M24 117h1M26 117h1M29 117h1M39 117h1M41 117h1M44 117h1M45 117h1M73 117h1M88 117h1M91 117h1M92 117h1M96 117h1M101 117h1M109 117h1M110 117h1M115 117h1M130 117h1M135 117h1M136 117h1M137 117h1M139 117h1M148 117h1M153 117h1M168 117h1M177 117h1M183 117h1M189 117h1M194 117h1M206 117h1M216 117h1M220 117h1M222 117h1M1 118h1M2 118h1M3 118h1M9 118h1M10 118h1M11 118h1M13 118h1M19 118h1M33 118h1M34 118h1M42 118h1M45 118h1M52 118h1M58 118h1M61 118h1M62 118h1M63 118h1M66 118h1M75 118h1M95 118h1M96 118h1M102 118h1M111 118h1M131 118h1M140 118h1M142 118h1M147 118h1M177 118h1M182 118h1M183 118h1M197 118h1M208 118h1M209 118h1M16 119h1M20 119h1M39 119h1M45 119h1M71 119h1M76 119h1M80 119h1M84 119h1M90 119h1M92 119h1M100 119h1M116 119h1M117 119h1M127 119h1M129 119h1M140 119h1M148 119h1M153 119h1M154 119h1M155 119h1M162 119h1M165 119h1M169 119h1M182 119h1M189 119h1M201 119h1M209 119h1M213 119h1M221 119h1M0 120h1M4 120h1M8 120h1M16 120h1M40 120h1M43 120h1M51 120h1M57 120h1M59 120h1M87 120h1M88 120h1M94 120h1M110 120h1M112 120h1M115 120h1M116 120h1M120 120h1M124 120h1M126 120h1M137 120h1M138 120h1M140 120h1M148 120h1M149 120h1M181 120h1M184 120h1M203 120h1M204 120h1M209 120h1M9 121h1M15 121h1M24 121h1M30 121h1M51 121h1M69 121h1M81 121h1M102 121h1M103 121h1M109 121h1M116 121h1M121 121h1M130 121h1M137 121h1M138 121h1M142 121h1M153 121h1M156 121h1M159 121h1M161 121h1M172 121h1M173 121h1M174 121h1M182 121h1M184 121h1M193 121h1M195 121h1M197 121h1M200 121h1M202 121h1M205 121h1M213 121h1M220 121h1M10 122h1M14 122h1M18 122h1M23 122h1M26 122h1M32 122h1M41 122h1M44 122h1M47 122h1M50 122h1M51 122h1M74 122h1M79 122h1M88 122h1M90 122h1M92 122h1M97 122h1M98 122h1M107 122h1M114 122h1M118 122h1M128 122h1M136 122h1M138 122h1M147 122h1M149 122h1M150 122h1M161 122h1M172 122h1M185 122h1M200 122h1M204 122h1M205 122h1M208 122h1M210 122h1M212 122h1M213 122h1M6 123h1M35 123h1M36 123h1M46 123h1M66 123h1M68 123h1M69 123h1M81 123h1M86 123h1M93 123h1M107 123h1M111 123h1M131 123h1M136 123h1M144 123h1M158 123h1M174 123h1M180 123h1M181 123h1M182 123h1M188 123h1M190 123h1M192 123h1M199 123h1M201 123h1M205 123h1M206 123h1M208 123h1M221 123h1M6 124h1M11 124h1M15 124h1M24 124h1M25 124h1M33 124h1M35 124h1M36 124h1M43 124h1M44 124h1M53 124h1M56 124h1M63 124h1M64 124h1M65 124h1M69 124h1M76 124h1M81 124h1M82 124h1M87 124h1M92 124h1M95 124h1M104 124h1M111 124h1M122 124h1M123 124h1M125 124h1M126 124h1M133 124h1M139 124h1M141 124h1M149 124h1M160 124h1M167 124h1M173 124h1M177 124h1M200 124h1M214 124h1M222 124h1M1 125h1M3 125h1M12 125h1M14 125h1M19 125h1M28 125h1M30 125h1M43 125h1M49 125h1M58 125h1M60 125h1M70 125h1M78 125h1M85 125h1M86 125h1M93 125h1M98 125h1M120 125h1M127 125h1M130 125h1M137 125h1M162 125h1M163 125h1M167 125h1M173 125h1M189 125h1M201 125h1M203 125h1M215 125h1M11 126h1M13 126h1M16 126h1M41 126h1M42 126h1M46 126h1M56 126h1M64 126h1M71 126h1M72 126h1M77 126h1M81 126h1M86 126h1M114 126h1M126 126h1M128 126h1M139 126h1M143 126h1M154 126h1M156 126h1M157 126h1M161 126h1M162 126h1M170 126h1M180 126h1M182 126h1M190 126h1M218 126h1M219 126h1M0 127h1M4 127h1M10 127h1M11 127h1M32 127h1M37 127h1M43 127h1M55 127h1M66 127h1M70 127h1M71 127h1M74 127h1M75 127h1M80 127h1M97 127h1M109 127h1M121 127h1M125 127h1M133 127h1M145 127h1M150 127h1M153 127h1M160 127h1M165 127h1M171 127h1M181 127h1M188 127h1M194 127h1M195 127h1M206 127h1M211 127h1M20 128h1M21 128h1M43 128h1M48 128h1M53 128h1M54 128h1M65 128h1M70 128h1M71 128h1M72 128h1M81 128h1M85 128h1M89 128h1M90 128h1M104 128h1M107 128h1M130 128h1M136 128h1M137 128h1M145 128h1M150 128h1M154 128h1M163 128h1M167 128h1M181 128h1M186 128h1M190 128h1M192 128h1M202 128h1M209 128h1M210 128h1M214 128h1M215 128h1M219 128h1M220 128h1M221 128h1M3 129h1M6 129h1M26 129h1M54 129h1M61 129h1M64 129h1M72 129h1M75 129h1M89 129h1M93 129h1M97 129h1M105 129h1M109 129h1M112 129h1M120 129h1M126 129h1M130 129h1M132 129h1M138 129h1M141 129h1M148 129h1M158 129h1M161 129h1M163 129h1M166 129h1M169 129h1M175 129h1M184 129h1M188 129h1M191 129h1M192 129h1M197 129h1M201 129h1M218 129h1M219 129h1M220 129h1M221 129h1M14 130h1M19 130h1M20 130h1M27 130h1M31 130h1M37 130h1M39 130h1M68 130h1M83 130h1M84 130h1M90 130h1M93 130h1M110 130h1M112 130h1M114 130h1M118 130h1M123 130h1M130 130h1M136 130h1M140 130h1M149 130h1M155 130h1M163 130h1M173 130h1M185 130h1M190 130h1M201 130h1M204 130h1M206 130h1M208 130h1M210 130h1M217 130h1M221 130h1" stroke="#000" stroke-width="1" transform="translate(0 0.5)"/></pattern><pattern id="sp4" width="227" height="137" patternUnits="userSpaceOnUse"><path d="M44 0h1M146 0h1M200 0h1M205 0h1M4 1h1M82 1h1M87 1h1M101 1h1M104 1h1M125 1h1M145 1h1M161 1h1M177 1h1M193 1h1M207 1h1M220 1h1M225 1h1M79 2h1M122 2h1M123 2h1M171 2h1M192 2h1M205 2h1M17 3h1M30 3h1M52 3h1M75 3h1M98 3h1M109 3h1M145 3h1M153 3h1M163 3h1M164 3h1M180 3h1M182 3h1M19 4h1M86 4h1M92 4h1M127 4h1M169 4h1M17 5h1M34 5h1M37 5h1M124 5h1M175 5h1M180 5h1M226 5h1M9 6h1M78 6h1M103 6h1M138 6h1M139 6h1M165 6h1M192 6h1M205 6h1M0 7h1M23 7h1M35 7h1M72 7h1M75 7h1M84 7h1M89 7h1M94 7h1M103 7h1M186 7h1M197 7h1M14 8h1M17 8h1M24 8h1M33 8h1M83 8h1M131 8h1M141 8h1M158 8h1M160 8h1M181 8h1M201 8h1M214 8h1M16 9h1M19 9h1M123 9h1M174 9h1M213 9h1M8 10h1M19 10h1M108 10h1M109 10h1M153 10h1M162 10h1M169 10h1M195 10h1M201 10h1M69 11h1M96 11h1M98 11h1M107 11h1M133 11h1M159 11h1M197 11h1M199 11h1M201 11h1M203 11h1M17 12h1M60 12h1M89 12h1M104 12h1M125 12h1M131 12h1M132 12h1M161 12h1M200 12h1M16 13h1M45 13h1M62 13h1M67 13h1M141 13h1M153 13h1M178 13h1M190 13h1M200 13h1M211 13h1M121 14h1M126 14h1M159 14h1M192 14h1M193 14h1M208 14h1M7 15h1M27 15h1M76 15h1M133 15h1M192 15h1M59 16h1M69 16h1M84 16h1M110 16h1M169 16h1M170 16h1M32 17h1M67 17h1M78 17h1M89 17h1M136 17h1M70 18h1M133 18h1M138 18h1M167 18h1M170 18h1M208 18h1M78 19h1M80 19h1M86 19h1M116 19h1M125 19h1M148 19h1M198 19h1M201 19h1M226 19h1M8 20h1M55 20h1M70 20h1M72 20h1M90 20h1M128 20h1M129 20h1M131 20h1M159 20h1M185 20h1M215 20h1M223 20h1M1 21h1M8 21h1M69 21h1M94 21h1M143 21h1M166 21h1M0 22h1M108 22h1M114 22h1M198 22h1M202 22h1M209 22h1M2 23h1M13 23h1M41 23h1M92 23h1M105 23h1M134 23h1M153 23h1M160 23h1M162 23h1M204 23h1M11 24h1M38 24h1M80 24h1M99 24h1M118 24h1M204 24h1M225 24h1M0 25h1M27 25h1M38 25h1M43 25h1M76 25h1M85 25h1M129 25h1M4 26h1M77 26h1M128 26h1M148 26h1M185 26h1M189 26h1M197 26h1M216 26h1M1 27h1M49 27h1M63 27h1M95 27h1M146 27h1M187 27h1M218 27h1M34 28h1M89 28h1M103 28h1M109 28h1M119 28h1M128 28h1M154 28h1M168 28h1M196 28h1M201 28h1M3 29h1M51 29h1M55 29h1M93 29h1M123 29h1M133 29h1M173 29h1M194 29h1M198 29h1M215 29h1M55 30h1M103 30h1M105 30h1M114 30h1M138 30h1M151 30h1M205 30h1M206 30h1M47 31h1M71 31h1M124 31h1M201 31h1M226 31h1M21 32h1M54 32h1M71 32h1M99 32h1M121 32h1M137 32h1M143 32h1M144 32h1M172 32h1M193 32h1M209 32h1M40 33h1M44 33h1M67 33h1M108 33h1M13 34h1M43 34h1M71 34h1M139 34h1M168 34h1M181 34h1M184 34h1M187 34h1M2 35h1M9 35h1M44 35h1M83 35h1M91 35h1M97 35h1M122 35h1M149 35h1M171 35h1M175 35h1M224 35h1M57 36h1M70 36h1M101 36h1M145 36h1M189 36h1M212 36h1M3 37h1M29 37h1M136 37h1M139 37h1M145 37h1M172 37h1M183 37h1M215 37h1M218 37h1M59 38h1M67 38h1M90 38h1M113 38h1M134 38h1M144 38h1M148 38h1M171 38h1M185 38h1M13 39h1M27 39h1M50 39h1M96 39h1M188 39h1M11 40h1M26 40h1M50 40h1M68 40h1M79 40h1M91 40h1M93 40h1M107 40h1M132 40h1M140 40h1M172 40h1M176 40h1M223 40h1M1 41h1M40 41h1M73 41h1M84 41h1M190 41h1M199 41h1M226 41h1M4 42h1M24 42h1M38 42h1M40 42h1M64 42h1M120 42h1M141 42h1M194 42h1M224 42h1M12 43h1M62 43h1M162 43h1M206 43h1M216 43h1M219 43h1M27 44h1M93 44h1M139 44h1M151 44h1M152 44h1M163 44h1M193 44h1M212 44h1M7 45h1M30 45h1M104 45h1M121 45h1M124 45h1M140 45h1M16 46h1M19 46h1M66 46h1M109 46h1M149 46h1M192 46h1M215 46h1M151 47h1M196 47h1M204 47h1M223 47h1M224 47h1M9 48h1M26 48h1M27 48h1M39 48h1M49 48h1M114 48h1M145 48h1M182 48h1M185 48h1M188 48h1M190 48h1M218 48h1M81 49h1M159 49h1M192 49h1M222 49h1M11 50h1M12 50h1M41 50h1M62 50h1M67 50h1M119 50h1M148 50h1M195 50h1M222 50h1M224 50h1M29 51h1M84 51h1M137 51h1M140 51h1M141 51h1M143 51h1M151 51h1M154 51h1M167 51h1M29 52h1M68 52h1M93 52h1M127 52h1M132 52h1M157 52h1M163 52h1M167 52h1M51 53h1M67 53h1M76 53h1M77 53h1M91 53h1M138 53h1M159 53h1M165 53h1M211 53h1M48 54h1M57 54h1M60 54h1M65 54h1M89 54h1M91 54h1M121 54h1M123 54h1M137 54h1M170 54h1M173 54h1M185 54h1M187 54h1M212 54h1M58 55h1M135 55h1M139 55h1M183 55h1M184 55h1M191 55h1M200 55h1M216 55h1M22 56h1M32 56h1M39 56h1M54 56h1M64 56h1M90 56h1M100 56h1M103 56h1M111 56h1M161 56h1M201 56h1M205 56h1M5 57h1M22 57h1M24 57h1M42 57h1M62 57h1M69 57h1M108 57h1M133 57h1M163 57h1M187 57h1M213 57h1M1 58h1M62 58h1M84 58h1M94 58h1M105 58h1M144 58h1M171 58h1M219 58h1M2 59h1M11 59h1M44 59h1M110 59h1M118 59h1M27 60h1M45 60h1M117 60h1M139 60h1M184 60h1M199 60h1M11 61h1M47 61h1M51 61h1M56 61h1M76 61h1M77 61h1M91 61h1M102 61h1M117 61h1M141 61h1M150 61h1M154 61h1M54 62h1M55 62h1M111 62h1M156 62h1M161 62h1M194 62h1M201 62h1M206 62h1M5 63h1M15 63h1M22 63h1M56 63h1M63 63h1M72 63h1M85 63h1M88 63h1M109 63h1M128 63h1M26 64h1M62 64h1M73 64h1M157 64h1M177 64h1M33 65h1M45 65h1M83 65h1M128 65h1M168 65h1M192 65h1M8 66h1M13 66h1M62 66h1M76 66h1M99 66h1M105 66h1M120 66h1M130 66h1M131 66h1M133 66h1M154 66h1M163 66h1M164 66h1M199 66h1M211 66h1M221 66h1M1 67h1M38 67h1M57 67h1M87 67h1M119 67h1M143 67h1M146 67h1M169 67h1M205 67h1M14 68h1M79 68h1M126 68h1M200 68h1M204 68h1M11 69h1M36 69h1M45 69h1M66 69h1M68 69h1M87 69h1M126 69h1M138 69h1M144 69h1M181 69h1M203 69h1M16 70h1M37 70h1M133 70h1M157 70h1M170 70h1M206 70h1M207 70h1M19 71h1M50 71h1M69 71h1M88 71h1M125 71h1M133 71h1M136 71h1M138 71h1M161 71h1M166 71h1M182 71h1M52 72h1M69 72h1M107 72h1M148 72h1M187 72h1M195 72h1M205 72h1M15 73h1M46 73h1M74 73h1M100 73h1M129 73h1M150 73h1M166 73h1M202 73h1M223 73h1M24 74h1M44 74h1M52 74h1M80 74h1M81 74h1M117 74h1M130 74h1M131 74h1M154 74h1M0 75h1M23 75h1M80 75h1M119 75h1M216 75h1M24 76h1M47 76h1M82 76h1M98 76h1M102 76h1M124 76h1M129 76h1M167 76h1M186 76h1M209 76h1M211 76h1M213 76h1M224 76h1M4 77h1M94 77h1M2 78h1M19 78h1M40 78h1M49 78h1M157 78h1M164 78h1M181 78h1M200 78h1M208 78h1M51 79h1M224 79h1M4 80h1M9 80h1M26 80h1M27 80h1M72 80h1M75 80h1M87 80h1M89 80h1M142 80h1M143 80h1M189 80h1M45 81h1M59 81h1M12 82h1M32 82h1M100 82h1M121 82h1M194 82h1M203 82h1M218 82h1M3 83h1M5 83h1M30 83h1M34 83h1M138 83h1M142 83h1M15 84h1M40 84h1M81 84h1M171 84h1M189 84h1M15 85h1M27 85h1M42 85h1M45 85h1M69 85h1M88 85h1M145 85h1M147 85h1M190 85h1M212 85h1M1 86h1M24 86h1M26 86h1M36 86h1M62 86h1M63 86h1M87 86h1M90 86h1M91 86h1M160 86h1M168 86h1M174 86h1M179 86h1M21 87h1M26 87h1M33 87h1M36 87h1M38 87h1M86 87h1M89 87h1M93 87h1M127 87h1M164 87h1M168 87h1M176 87h1M219 87h1M1 88h1M28 88h1M30 88h1M35 88h1M143 88h1M176 88h1M187 88h1M12 89h1M16 89h1M37 89h1M46 89h1M109 89h1M198 89h1M16 90h1M21 90h1M107 90h1M110 90h1M115 90h1M122 90h1M132 90h1M136 90h1M154 90h1M13 91h1M39 91h1M69 91h1M75 91h1M157 91h1M186 91h1M222 91h1M1 92h1M63 92h1M156 92h1M176 92h1M202 92h1M3 93h1M16 93h1M17 93h1M20 93h1M21 93h1M48 93h1M130 93h1M132 93h1M191 93h1M209 93h1M217 93h1M22 94h1M48 94h1M86 94h1M128 94h1M138 94h1M145 94h1M163 94h1M165 94h1M195 94h1M202 94h1M206 94h1M20 95h1M94 95h1M110 95h1M118 95h1M207 95h1M208 95h1M87 96h1M125 96h1M133 96h1M184 96h1M191 96h1M200 96h1M220 96h1M9 97h1M13 97h1M24 97h1M38 97h1M82 97h1M93 97h1M110 97h1M119 97h1M123 97h1M129 97h1M143 97h1M178 97h1M196 97h1M218 97h1M224 97h1M4 98h1M14 98h1M15 98h1M38 98h1M103 98h1M104 98h1M199 98h1M205 98h1M214 98h1M44 99h1M45 99h1M54 99h1M77 99h1M161 99h1M191 99h1M200 99h1M4 100h1M76 100h1M159 100h1M171 100h1M211 100h1M216 100h1M7 101h1M156 101h1M161 101h1M190 101h1M0 102h1M51 102h1M92 102h1M128 102h1M200 102h1M217 102h1M9 103h1M17 103h1M58 103h1M84 103h1M111 103h1M141 103h1M179 103h1M210 103h1M19 104h1M20 104h1M23 104h1M47 104h1M57 104h1M109 104h1M159 104h1M168 104h1M184 104h1M13 105h1M58 105h1M84 105h1M135 105h1M177 105h1M205 105h1M22 106h1M28 106h1M66 106h1M88 106h1M146 106h1M153 106h1M207 106h1M221 106h1M60 107h1M89 107h1M193 107h1M67 108h1M76 108h1M134 108h1M153 108h1M164 108h1M165 108h1M178 108h1M179 108h1M2 109h1M19 109h1M69 109h1M92 109h1M103 109h1M161 109h1M179 109h1M211 109h1M40 110h1M56 110h1M79 110h1M95 110h1M114 110h1M142 110h1M143 110h1M161 110h1M200 110h1M217 110h1M218 110h1M65 111h1M95 111h1M145 111h1M185 111h1M195 111h1M206 111h1M14 112h1M31 112h1M44 112h1M50 112h1M77 112h1M82 112h1M128 112h1M136 112h1M172 112h1M210 112h1M213 112h1M2 113h1M19 113h1M42 113h1M54 113h1M63 113h1M79 113h1M107 113h1M120 113h1M80 114h1M97 114h1M118 114h1M119 114h1M121 114h1M122 114h1M201 114h1M213 114h1M11 115h1M16 115h1M57 115h1M84 115h1M155 115h1M167 115h1M175 115h1M182 115h1M183 115h1M204 115h1M218 115h1M20 116h1M116 116h1M201 116h1M134 117h1M149 117h1M168 117h1M193 117h1M58 118h1M76 118h1M126 118h1M157 118h1M184 118h1M26 119h1M40 119h1M47 119h1M60 119h1M66 119h1M79 119h1M147 119h1M200 119h1M208 119h1M212 119h1M59 120h1M60 120h1M69 120h1M109 120h1M113 120h1M191 120h1M200 120h1M217 120h1M88 121h1M202 121h1M204 121h1M205 121h1M214 121h1M23 122h1M30 122h1M49 122h1M69 122h1M73 122h1M98 122h1M206 122h1M217 122h1M2 123h1M19 123h1M51 123h1M92 123h1M99 123h1M101 123h1M119 123h1M120 123h1M134 123h1M137 123h1M187 123h1M56 124h1M84 124h1M119 124h1M160 124h1M163 124h1M192 124h1M219 124h1M32 125h1M43 125h1M63 125h1M78 125h1M79 125h1M132 125h1M136 125h1M182 125h1M202 125h1M24 126h1M52 126h1M66 126h1M81 126h1M218 126h1M90 127h1M92 127h1M108 127h1M154 127h1M205 127h1M211 127h1M221 127h1M31 128h1M143 128h1M149 128h1M183 128h1M194 128h1M212 128h1M225 128h1M17 129h1M22 129h1M41 129h1M66 129h1M134 129h1M173 129h1M181 129h1M203 129h1M214 129h1M3 130h1M9 130h1M25 130h1M28 130h1M54 130h1M134 130h1M158 130h1M159 130h1M162 130h1M225 130h1M3 131h1M43 131h1M68 131h1M92 131h1M156 131h1M181 131h1M219 131h1M32 132h1M69 132h1M78 132h1M95 132h1M108 132h1M134 132h1M151 132h1M167 132h1M194 132h1M208 132h1M211 132h1M213 132h1M18 133h1M64 133h1M76 133h1M131 133h1M92 134h1M108 134h1M117 134h1M159 134h1M174 134h1M2 135h1M68 135h1M77 135h1M117 135h1M168 135h1M172 135h1M183 135h1M206 135h1M46 136h1M62 136h1M67 136h1M122 136h1M126 136h1M221 136h1" stroke="#000" stroke-width="1" transform="translate(0 0.5)"/></pattern></defs><rect x="0" y="0" width="2560" height="24" fill="#3c3b40"/><rect x="0" y="23" width="2560" height="1" fill="#323136"/><rect x="0" y="24" width="2560" height="2" fill="#ffffff"/><rect x="1" y="26" width="1" height="1325" fill="#ffffff"/><rect x="2558" y="26" width="1" height="1325" fill="#ffffff"/><rect x="1" y="1350" width="2558" height="1" fill="#ffffff"/><rect x="2" y="26" width="2556" height="1324" fill="#000000"/><rect x="1.5" y="2.5" width="19" height="15" rx="1.5" fill="url(#ico)" stroke="#9a9a9a" stroke-width="0.6"/><rect x="2" y="3" width="18" height="2" fill="#4a72b0"/><text x="1157" y="15" fill="#ffffff" font-size="13" font-weight="bold" stroke="none" textLength="178.5" lengthAdjust="spacingAndGlyphs">ndscope: CS_FAN_Vibrometers</text><g stroke="#ffffff" stroke-width="2" fill="none" shape-rendering="auto"><path d="M2476.5 13.5L2480.7 9.3L2484.9 13.5"/><path d="M2499 13.9H2508"/><rect x="2523.9" y="7.9" width="5" height="5.2"/><path d="M2545.5 6.5L2553.5 14.5M2553.5 6.5L2545.5 14.5"/></g><clipPath id="c00"><rect x="67" y="45" width="789" height="600"/></clipPath><path d="M67 633.5H856M67 515.5H856M67 398.5H856M67 280.5H856M67 162.5H856" stroke="#121212"/><path d="M67 574.5H856M67 456.5H856M67 339.5H856M67 221.5H856M67 103.5H856" stroke="#0c0c0c"/><path d="M67 45.5H856" stroke="#1f1f1f"/><path d="M173.5 45V645M287.5 45V645M400.5 45V645M514.5 45V645M628.5 45V645M741.5 45V645M855.5 45V645" stroke="#1c1c1c"/><g clip-path="url(#c00)"><path d="M67 633.5H856" stroke="#d99452" stroke-width="1"/><path d="M67 633.5H856" stroke="#f58a1f" stroke-width="1" stroke-dasharray="2 4" stroke-dashoffset="3"/></g><path d="M66.5 45V645.5H856" stroke="#999" fill="none"/><g fill="#f2f2f2" font-size="13" text-anchor="end" stroke="#f2f2f2"><text x="61" y="638.7">0</text><text x="61" y="521.0">0.2</text><text x="61" y="403.3">0.4</text><text x="61" y="285.6">0.6</text><text x="61" y="167.9">0.8</text></g><rect x="57" y="45" width="1.3" height="5" fill="#eee"/><g fill="#f2f2f2" font-size="13" text-anchor="middle" stroke="#f2f2f2"><text x="173.5" y="662">-6d</text><text x="287.1" y="662">-5d</text><text x="400.8" y="662">-4d</text><text x="514.5" y="662">-3d</text><text x="628.2" y="662">-2d</text><text x="741.8" y="662">-1d</text></g><clipPath id="zc00"><rect x="0" y="0" width="856" height="1409"/></clipPath><text x="855.5" y="662" fill="#f2f2f2" font-size="13" text-anchor="middle" clip-path="url(#zc00)" stroke="#f2f2f2">0</text><text transform="translate(34 346) rotate(-90)" fill="#f2f2f2" font-size="13" text-anchor="middle" textLength="40" lengthAdjust="spacingAndGlyphs" stroke="#f2f2f2">counts</text><rect x="76.5" y="55.5" width="341" height="62" fill="rgba(24,24,24,0.68)" stroke="#555"/><rect x="85" y="64" width="19" height="19" fill="#1f77b4"/><text x="110.0" y="79" fill="#f0f0f0" font-size="13" textLength="299" lengthAdjust="spacingAndGlyphs" stroke="#f0f0f0">H0:VAC-MR_FAN1_170_1_ACC_INCHSEC [m-trend]</text><rect x="85" y="89" width="19" height="19" fill="#ff7f0e"/><text x="110.0" y="104" fill="#f0f0f0" font-size="13" textLength="299" lengthAdjust="spacingAndGlyphs" stroke="#f0f0f0">H0:VAC-MR_FAN1_170_2_ACC_INCHSEC [m-trend]</text><clipPath id="c10"><rect x="909" y="45" width="789" height="600"/></clipPath><path d="M909 633.5H1698M909 515.5H1698M909 398.5H1698M909 280.5H1698M909 162.5H1698" stroke="#121212"/><path d="M909 574.5H1698M909 456.5H1698M909 339.5H1698M909 221.5H1698M909 103.5H1698" stroke="#0c0c0c"/><path d="M909 45.5H1698" stroke="#1f1f1f"/><path d="M1015.5 45V645M1129.5 45V645M1242.5 45V645M1356.5 45V645M1470.5 45V645M1583.5 45V645M1697.5 45V645" stroke="#1c1c1c"/><g clip-path="url(#c10)"><path d="M909.5 530v10m1 -10v9m1 -10v10m1 -8v9m1 -10v10m1 -11v11m1 -11v10m1 -13v14m1 -10v10m1 -11v10m1 -10v13m1 -13v10m1 -10v10m1 -8v11m1 -11v9m1 -9v8m1 -10v10m1 -7v8m1 -9v10m1 -11v10m1 -10v11m1 -9v8m1 -9v9m1 -8v8m1 -8v8m1 -8v8m1 -8v9m1 -10v9m1 -9v9m1 -8v9m1 -9v9m1 -10v9m1 -10v10m1 -9v10m1 -10v9m1 -9v8m1 -8v9m1 -9v9m1 -9v9m1 -9v9m1 -9v9m1 -10v12m1 -10v8m1 -9v8m1 -8v9m1 -9v9m1 -8v8m1 -9v8m1 -8v10m1 -15v14m1 -11v12m1 -10v9m1 -9v9m1 -10v9m1 -8v9m1 -9v9m1 -10v9m1 -8v10m1 -10v9m1 -9v10m1 -11v9m1 -9v9m1 -8v10m1 -10v8m1 -8v8m1 -8v8m1 -10v10m1 -8v9m1 -9v10m1 -11v11m1 -10v9m1 -9v9m1 -9v9m1 -11v12m1 -12v10m1 -9v10m1 -10v10m1 -10v10m1 -9v10m1 -10v9m1 -10v9m1 -8v9m1 -9v9m1 -9v10m1 -9v9m1 -11v11m1 -10v9m1 -9v10m1 -10v9m1 -10v10m1 -10v11m1 -11v9m1 -8v9m1 -9v9m1 -9v10m1 -11v10m1 -10v9m1 -8v10m1 -10v10m1 -10v9m1 -9v9m1 -10v10m1 -9v9m1 -11v10m1 -9v10m1 -10v9m1 -8v10m1 -10v9m1 -10v10m1 -10v10m1 -11v12m1 -10v9m1 -10v10m1 -8v8m1 -11v11m1 -9v8m1 -7v7m1 -7v8m1 -11v11m1 -9v10m1 -14v13m1 -9v9m1 -8v8m1 -8v8m1 -9v9m1 -10v10m1 -9v9m1 -11v11m1 -10v9m1 -10v11m1 -11v10m1 -8v10m1 -12v10m1 -8v8m1 -8v8m1 -9v10m1 -9v8m1 -9v10m1 -9v9m1 -11v11m1 -9v9m1 -10v10m1 -9v9m1 -10v10m1 -11v11m1 -9v8m1 -8v8m1 -9v10m1 -9v8m1 -8v10m1 -10v8m1 -7v8m1 -10v10m1 -9v8m1 -8v7m1 -7v8m1 -8v8m1 -8v8m1 -8v8m1 -9v9m1 -9v10m1 -8v9m1 -10v8m1 -8v9m1 -10v9m1 -9v9m1 -9v9m1 -10v11m1 -10v10m1 -11v10m1 -9v9m1 -8v8m1 -8v9m1 -9v10m1 -10v8m1 -9v9m1 -9v9m1 -8v9m1 -10v10m1 -10v9m1 -10v11m1 -10v9m1 -9v8m1 -8v10m1 -10v9m1 -10v10m1 -9v9m1 -9v9m1 -10v10m1 -11v11m1 -10v10m1 -9v10m1 -11v10m1 -9v10m1 -10v9m1 -8v9m1 -12v13m1 -10v9m1 -9v9m1 -9v8m1 -8v8m1 -8v8m1 -8v8m1 -9v10m1 -9v9m1 -9v9m1 -10v10m1 -9v9m1 -8v8m1 -9v8m1 -7v8m1 -8v9m1 -11v11m1 -11v9m1 -9v9m1 -9v9m1 -9v9m1 -9v11m1 -10v9m1 -8v8m1 -9v10m1 -11v10m1 -9v8m1 -7v7m1 -8v8m1 -9v10m1 -9v8m1 -10v10m1 -8v9m1 -11v11m1 -10v10m1 -13v13m1 -11v10m1 -10v10m1 -10v10m1 -13v14m1 -11v11m1 -9v10m1 -11v9m1 -7v8m1 -9v8m1 -8v10m1 -10v11m1 -12v8m1 -7v9m1 -9v8m1 -10v10m1 -8v9m1 -9v9m1 -10v8m1 -8v9m1 -11v13m1 -11v9m1 -9v10m1 -10v9m1 -10v9m1 -9v10m1 -9v10m1 -10v10m1 -12v11m1 -11v11m1 -9v10m1 -10v10m1 -8v8m1 -11v11m1 -9v10m1 -10v8m1 -8v8m1 -9v10m1 -13v12m1 -9v9m1 -11v12m1 -11v10m1 -10v11m1 -11v12m1 -13v12m1 -11v10m1 -10v11m1 -11v10m1 -7v8m1 -10v10m1 -8v8m1 -9v9m1 -8v8m1 -8v8m1 -8v8m1 -10v9m1 -10v11m1 -11v11m1 -10v9m1 -9v9m1 -10v11m1 -11v12m1 -10v10m1 -12v13m1 -11v9m1 -9v8m1 -10v11m1 -11v11m1 -9v9m1 -10v10m1 -9v9m1 -9v9m1 -9v9m1 -9v10m1 -13v11m1 -8v11m1 -12v9m1 -10v11m1 -9v11m1 -10v9m1 -10v8m1 -7v8m1 -9v9m1 -10v9m1 -8v8m1 -7v8m1 -10v10m1 -9v8m1 -8v8m1 -9v10m1 -9v8m1 -8v8m1 -8v9m1 -9v8m1 -8v9m1 -9v9m1 -10v9m1 -8v9m1 -12v11m1 -9v9m1 -10v11m1 -11v10m1 -10v11m1 -11v11m1 -8v8m1 -9v8m1 -11v11m1 -9v10m1 -10v10m1 -9v9m1 -13v13m1 -8v9m1 -11v11m1 -11v10m1 -9v9m1 -9v8m1 -8v9m1 -9v9m1 -13v14m1 -9v8m1 -8v9m1 -9v8m1 -8v9m1 -10v9m1 -13v13m1 -10v11m1 -11v10m1 -8v8m1 -9v9m1 -12v13m1 -11v9m1 -11v11m1 -10v10m1 -9v9m1 -8v9m1 -9v8m1 -9v10m1 -9v8m1 -8v9m1 -14v13m1 -8v9m1 -9v9m1 -10v9m1 -9v10m1 -10v10m1 -11v10m1 -11v11m1 -10v9m1 -7v8m1 -8v10m1 -11v10m1 -9v8m1 -9v9m1 -8v10m1 -10v8m1 -9v9m1 -8v8m1 -7v7m1 -8v10m1 -11v10m1 -9v9m1 -13v13m1 -9v10m1 -10v10m1 -11v9m1 -11v11m1 -9v10m1 -10v11m1 -13v13m1 -11v10m1 -9v9m1 -9v9m1 -9v9m1 -12v11m1 -10v11m1 -9v8m1 -9v9m1 -8v10m1 -12v10m1 -9v9m1 -8v10m1 -12v11m1 -12v11m1 -10v11m1 -12v12m1 -10v11m1 -13v12m1 -10v10m1 -9v9m1 -8v9m1 -10v9m1 -8v7m1 -10v10m1 -8v8m1 -8v10m1 -11v10m1 -10v9m1 -9v9m1 -8v8m1 -9v11m1 -10v8m1 -8v8m1 -8v9m1 -10v10m1 -10v9m1 -9v9m1 -8v9m1 -10v11m1 -10v9m1 -8v7m1 -8v8m1 -8v8m1 -8v9m1 -8v8m1 -12v12m1 -14v15m1 -10v9m1 -10v11m1 -10v9m1 -9v8m1 -9v10m1 -12v12m1 -11v11m1 -11v11m1 -11v10m1 -10v10m1 -10v11m1 -9v8m1 -8v8m1 -8v8m1 -10v10m1 -8v8m1 -8v9m1 -10v10m1 -9v8m1 -9v10m1 -9v10m1 -11v9m1 -9v9m1 -9v12m1 -11v9m1 -10v9m1 -10v11m1 -11v12m1 -13v12m1 -11v12m1 -12v10m1 -8v8m1 -8v10m1 -10v10m1 -10v8m1 -12v13m1 -9v10m1 -11v9m1 -8v8m1 -9v10m1 -9v9m1 -9v10m1 -10v9m1 -11v11m1 -9v8m1 -9v9m1 -8v8m1 -8v9m1 -8v9m1 -9v8m1 -9v9m1 -9v8m1 -9v10m1 -11v10m1 -8v9m1 -8v7m1 -7v10m1 -10v8m1 -11v11m1 -11v10m1 -8v9m1 -9v9m1 -9v10m1 -11v9m1 -7v8m1 -9v9m1 -11v10m1 -8v9m1 -10v10m1 -9v9m1 -10v10m1 -9v9m1 -8v9m1 -11v10m1 -9v9m1 -8v8m1 -8v8m1 -9v9m1 -8v8m1 -8v8m1 -8v9m1 -9v9m1 -11v9m1 -8v10m1 -9v9m1 -11v9m1 -10v12m1 -10v9m1 -8v8m1 -8v8m1 -10v11m1 -9v9m1 -10v9m1 -9v9m1 -10v10m1 -12v12m1 -9v10m1 -12v10m1 -8v9m1 -10v10m1 -9v8m1 -7v8m1 -8v9m1 -10v9m1 -9v9m1 -9v10m1 -10v10m1 -10v8m1 -8v11m1 -12v9m1 -8v10m1 -13v11m1 -10v11m1 -10v10m1 -9v9m1 -9v9m1 -9v11m1 -12v9m1 -7v8m1 -8v7m1 -12v13m1 -8v8m1 -8v9m1 -10v9m1 -9v9m1 -10v10m1 -8v9m1 -10v9m1 -8v9m1 -9v9m1 -9v9m1 -9v9m1 -9v9m1 -11v10m1 -9v9m1 -8v9m1 -10v9m1 -9v10m1 -9v10m1 -10v8m1 -12v12m1 -12v13m1 -10v10m1 -10v9m1 -8v8m1 -9v9m1 -11v10m1 -8v9m1 -9v10m1 -11v10m1 -10v10m1 -11v12m1 -10v9m1 -8v8m1 -9v8m1 -9v10m1 -10v11m1 -11v9m1 -9v11m1 -11v9m1 -12v13m1 -10v11m1 -10v8m1 -8v9m1 -9v9m1 -11v12m1 -10v10m1 -9v8m1 -8v9m1 -9v8m1 -8v9m1 -9v8m1 -8v8m1 -9v9m1 -8v8m1 -8v8m1 -8v8m1 -9v9m1 -8v8m1 -9v11m1 -11v9m1 -8v9m1 -10v10m1 -10v9m1 -10v10m1 -8v8m1 -7v9m1 -9v8m1 -8v8m1 -10v10m1 -8v8m1 -8v9m1 -11v11m1 -10v10m1 -10v9m1 -8v8m1 -8v9m1 -10v9m1 -8v8m1 -11v11m1 -10v11m1 -9v9m1 -9v9m1 -9v8m1 -7v8m1 -9v9m1 -9v8m1 -8v8m1 -8v8m1 -8v9m1 -9v10m1 -10v9m1 -10v8m1 -8v11m1 -10v7m1 -7v9m1 -9v9m1 -11v10m1 -8v9m1 -10v9m1 -9v9m1 -8v8m1 -8v9m1 -9v9m1 -13v14m1 -10v8m1 -8v9m1 -9v9m1 -8v7m1 -9v10m1 -8v8m1 -8v8m1 -9v8m1 -8v9m1 -9v8m1 -8v9m1 -9v8m1 -8v9m1 -9v9m1 -9v9m1 -9v8m1 -8v10m1 -10v8m1 -9v11m1 -11v10m1 -10v11m1 -10v8m1 -8v9m1 -9v7m1 -8v9m1 -8v8m1 -8v10m1 -11v9m1 -10v10m1 -8v8m1 -9v9m1 -10v10m1 -9v10m1 -10v10m1 -11v9m1 -8v10m1 -11v10m1 -10v11m1 -11v10m1 -8v8m1 -8v8m1 -8v9m1 -9v8m1 -9v9m1 -8v9m1 -12v12m1 -10v10m1 -9v9m1 -9v8m1 -8v9m1 -9v8m1 -9v10m1 -11v11m1 -12v12m1 -11v10m1 -11v12m1 -11v10m1 -8v8m1 -8v8m1 -7v8m1 -9v8m1 -8v9m1 -9v8m1 -8v8m1 -11v11m1 -11v12m1 -10v9m1 -9v9m1 -9v9m1 -10v10m1 -10v11m1 -10v10m1 -11v11m1 -10v9m1 -10v12m1 -11v9m1 -10v10m1 -10v10m1 -9v9m1 -10v10m1 -9v10m1 -12v12m1 -11v10m1 -10v9m1 -10v10m1 -9v10m1 -8v9m1 -10v8m1 -7v8m1 -9v8m1 -8v9m1 -10v9m1 -8v9m1 -9v8m1 -9v12m1 -12v10m1 -9v9m1 -10v10m1 -10v9m1 -10v11m1 -8v8m1 -10v9m1 -8v10m1 -9v8m1 -8v8m1 -9v8m1 -7v8m1 -9v8m1 -7v9m1 -11v9m1 -8v9m1 -9v8m1 -10v11m1 -10v9m1 -8v9m1 -11v11m1 -11v13" stroke="#2ca02c" stroke-opacity="0.80" fill="none"/><path d="M909.5 533v5m1 -5v5m1 -6v5m1 -4v6m1 -6v4m1 -5v5m1 -5v6m1 -5v5m1 -5v5m1 -5v5m1 -6v6m1 -5v5m1 -4v4m1 -5v4m1 -3v4m1 -4v4m1 -4v4m1 -4v4m1 -4v5m1 -5v5m1 -5v4m1 -5v4m1 -4v6m1 -5v3m1 -3v5m1 -6v5m1 -4v4m1 -4v4m1 -4v5m1 -5v4m1 -5v5m1 -4v4m1 -5v4m1 -3v4m1 -5v5m1 -5v5m1 -4v5m1 -5v5m1 -5v4m1 -4v4m1 -4v3m1 -4v4m1 -3v4m1 -4v4m1 -5v4m1 -3v6m1 -7v5m1 -4v4m1 -5v4m1 -4v6m1 -7v5m1 -4v4m1 -4v5m1 -5v5m1 -4v5m1 -6v4m1 -4v4m1 -4v6m1 -6v4m1 -4v5m1 -6v5m1 -4v5m1 -5v4m1 -4v5m1 -5v5m1 -4v4m1 -5v5m1 -5v4m1 -3v4m1 -4v4m1 -5v6m1 -5v4m1 -5v5m1 -4v4m1 -6v5m1 -5v6m1 -5v5m1 -4v4m1 -4v3m1 -4v5m1 -4v4m1 -4v4m1 -5v5m1 -5v6m1 -6v6m1 -5v5m1 -5v4m1 -4v4m1 -4v4m1 -4v4m1 -4v4m1 -4v4m1 -4v4m1 -4v5m1 -6v5m1 -5v5m1 -4v5m1 -5v5m1 -6v6m1 -6v4m1 -4v5m1 -4v4m1 -5v5m1 -4v4m1 -5v5m1 -5v4m1 -4v5m1 -5v4m1 -3v4m1 -5v6m1 -5v4m1 -5v5m1 -4v5m1 -5v4m1 -4v5m1 -5v4m1 -4v4m1 -4v4m1 -4v4m1 -4v4m1 -5v4m1 -4v4m1 -4v4m1 -3v4m1 -5v5m1 -4v4m1 -5v4m1 -5v6m1 -6v4m1 -3v5m1 -5v5m1 -5v5m1 -5v5m1 -4v3m1 -3v5m1 -5v4m1 -5v4m1 -4v4m1 -3v3m1 -3v4m1 -4v4m1 -5v5m1 -6v6m1 -5v5m1 -5v4m1 -4v4m1 -3v4m1 -5v4m1 -4v4m1 -4v4m1 -4v4m1 -4v5m1 -4v3m1 -3v5m1 -5v5m1 -6v5m1 -5v4m1 -4v5m1 -5v4m1 -3v3m1 -4v5m1 -4v3m1 -4v4m1 -5v6m1 -5v5m1 -6v6m1 -6v6m1 -5v4m1 -4v5m1 -6v5m1 -4v4m1 -4v3m1 -3v4m1 -4v4m1 -4v3m1 -3v4m1 -4v5m1 -5v4m1 -4v4m1 -5v5m1 -4v4m1 -6v5m1 -4v4m1 -3v5m1 -5v5m1 -5v4m1 -4v5m1 -6v5m1 -5v5m1 -4v4m1 -5v5m1 -5v5m1 -5v5m1 -5v6m1 -5v4m1 -4v4m1 -4v5m1 -5v3m1 -3v5m1 -5v6m1 -5v3m1 -3v3m1 -4v5m1 -6v6m1 -5v4m1 -4v5m1 -5v6m1 -6v4m1 -5v5m1 -4v4m1 -3v4m1 -5v4m1 -4v4m1 -4v4m1 -4v4m1 -4v5m1 -5v4m1 -4v5m1 -5v5m1 -5v5m1 -5v5m1 -5v5m1 -5v5m1 -5v4m1 -4v5m1 -4v3m1 -3v3m1 -4v4m1 -5v5m1 -4v4m1 -4v3m1 -4v5m1 -4v5m1 -5v4m1 -5v6m1 -5v5m1 -5v4m1 -5v6m1 -5v4m1 -4v4m1 -4v5m1 -6v5m1 -4v4m1 -3v4m1 -6v5m1 -5v5m1 -4v4m1 -4v4m1 -5v6m1 -6v5m1 -4v4m1 -4v3m1 -3v4m1 -5v5m1 -4v4m1 -4v5m1 -5v5m1 -6v5m1 -6v6m1 -5v4m1 -4v5m1 -4v5m1 -5v5m1 -4v5m1 -7v6m1 -5v5m1 -5v4m1 -4v4m1 -4v6m1 -5v4m1 -4v5m1 -6v5m1 -5v4m1 -4v4m1 -6v7m1 -5v4m1 -4v5m1 -4v4m1 -4v4m1 -5v6m1 -5v4m1 -4v4m1 -4v4m1 -5v4m1 -3v4m1 -4v4m1 -5v4m1 -5v6m1 -5v5m1 -5v4m1 -4v5m1 -5v5m1 -5v4m1 -4v4m1 -3v3m1 -4v4m1 -4v4m1 -3v4m1 -5v5m1 -5v4m1 -4v3m1 -3v5m1 -4v4m1 -5v4m1 -4v5m1 -5v4m1 -4v5m1 -6v5m1 -4v5m1 -4v5m1 -5v4m1 -4v4m1 -4v4m1 -4v4m1 -5v5m1 -4v4m1 -4v5m1 -5v3m1 -3v4m1 -6v5m1 -3v4m1 -5v4m1 -3v4m1 -4v4m1 -4v5m1 -5v4m1 -4v4m1 -5v5m1 -5v5m1 -5v5m1 -5v4m1 -5v6m1 -6v5m1 -4v5m1 -5v4m1 -3v4m1 -5v4m1 -3v3m1 -4v5m1 -4v4m1 -6v5m1 -3v4m1 -4v4m1 -4v4m1 -5v5m1 -4v4m1 -4v4m1 -4v4m1 -4v3m1 -3v4m1 -4v5m1 -5v3m1 -3v3m1 -4v5m1 -6v6m1 -5v5m1 -6v6m1 -5v4m1 -4v5m1 -5v5m1 -4v4m1 -5v5m1 -5v4m1 -3v4m1 -4v4m1 -4v4m1 -4v3m1 -4v4m1 -3v3m1 -4v4m1 -4v4m1 -4v4m1 -4v4m1 -4v5m1 -6v5m1 -4v5m1 -6v6m1 -6v5m1 -4v4m1 -4v4m1 -4v4m1 -5v5m1 -4v4m1 -3v5m1 -7v5m1 -4v5m1 -5v4m1 -3v4m1 -6v5m1 -3v4m1 -4v3m1 -4v4m1 -3v4m1 -6v6m1 -5v5m1 -4v4m1 -5v4m1 -4v4m1 -4v5m1 -5v5m1 -5v5m1 -6v5m1 -4v4m1 -3v4m1 -5v5m1 -4v3m1 -4v5m1 -4v4m1 -5v5m1 -5v5m1 -5v4m1 -5v6m1 -6v5m1 -4v5m1 -6v6m1 -5v6m1 -7v5m1 -5v6m1 -5v5m1 -5v5m1 -5v4m1 -5v5m1 -3v4m1 -4v4m1 -4v4m1 -5v5m1 -5v4m1 -3v5m1 -6v4m1 -3v4m1 -5v4m1 -5v6m1 -5v5m1 -5v4m1 -4v5m1 -5v6m1 -6v4m1 -5v6m1 -5v6m1 -5v4m1 -5v5m1 -4v3m1 -4v4m1 -4v4m1 -4v4m1 -4v4m1 -3v3m1 -3v4m1 -4v4m1 -5v5m1 -6v5m1 -5v5m1 -4v4m1 -5v5m1 -6v6m1 -4v5m1 -5v5m1 -4v4m1 -6v6m1 -5v5m1 -5v5m1 -4v4m1 -4v3m1 -4v5m1 -4v4m1 -4v3m1 -4v4m1 -5v5m1 -5v5m1 -4v5m1 -5v4m1 -4v5m1 -6v6m1 -5v5m1 -5v6m1 -6v5m1 -5v5m1 -5v4m1 -4v5m1 -6v6m1 -5v5m1 -5v4m1 -4v4m1 -4v5m1 -5v5m1 -5v3m1 -3v4m1 -3v4m1 -5v4m1 -3v3m1 -4v4m1 -4v4m1 -4v5m1 -5v4m1 -3v4m1 -5v5m1 -4v3m1 -4v5m1 -4v3m1 -4v6m1 -5v5m1 -5v3m1 -3v5m1 -5v4m1 -5v4m1 -3v5m1 -5v4m1 -5v5m1 -6v5m1 -3v4m1 -5v5m1 -4v4m1 -4v4m1 -5v5m1 -5v5m1 -5v6m1 -7v5m1 -3v4m1 -4v4m1 -5v5m1 -4v5m1 -5v5m1 -5v4m1 -4v5m1 -5v4m1 -4v4m1 -4v3m1 -4v5m1 -5v5m1 -4v4m1 -5v4m1 -3v4m1 -4v4m1 -4v4m1 -4v4m1 -4v4m1 -4v4m1 -4v5m1 -5v4m1 -5v5m1 -4v4m1 -4v4m1 -4v5m1 -6v5m1 -5v4m1 -5v6m1 -4v4m1 -4v4m1 -4v5m1 -6v5m1 -4v4m1 -4v5m1 -5v4m1 -4v4m1 -5v4m1 -4v5m1 -5v5m1 -5v4m1 -3v3m1 -5v5m1 -4v4m1 -4v5m1 -4v5m1 -6v5m1 -4v5m1 -5v4m1 -4v4m1 -6v5m1 -4v4m1 -3v4m1 -4v4m1 -6v6m1 -4v3m1 -3v4m1 -4v4m1 -5v5m1 -4v4m1 -4v4m1 -5v6m1 -6v5m1 -4v4m1 -5v4m1 -3v5m1 -6v5m1 -4v4m1 -4v4m1 -4v4m1 -4v4m1 -4v4m1 -5v5m1 -4v4m1 -4v3m1 -3v4m1 -4v4m1 -4v4m1 -6v5m1 -4v4m1 -4v6m1 -7v5m1 -4v5m1 -5v4m1 -3v3m1 -4v5m1 -4v4m1 -5v4m1 -3v5m1 -6v6m1 -6v5m1 -4v5m1 -5v4m1 -5v5m1 -4v4m1 -5v5m1 -5v6m1 -5v5m1 -6v6m1 -5v5m1 -5v5m1 -5v4m1 -4v4m1 -5v5m1 -5v4m1 -2v4m1 -5v4m1 -5v6m1 -5v5m1 -6v4m1 -3v4m1 -4v4m1 -4v4m1 -4v4m1 -5v5m1 -3v4m1 -4v4m1 -4v4m1 -4v4m1 -3v4m1 -5v4m1 -4v3m1 -2v4m1 -7v6m1 -4v4m1 -4v4m1 -4v4m1 -4v5m1 -5v5m1 -5v5m1 -5v5m1 -5v6m1 -6v5m1 -4v4m1 -4v3m1 -3v4m1 -5v5m1 -5v4m1 -4v5m1 -5v5m1 -5v5m1 -5v4m1 -5v5m1 -3v4m1 -5v4m1 -3v3m1 -4v4m1 -5v5m1 -4v4m1 -4v4m1 -4v4m1 -4v4m1 -4v4m1 -5v5m1 -3v4m1 -4v4m1 -5v6m1 -5v3m1 -3v4m1 -4v5m1 -5v3m1 -4v5m1 -5v5m1 -4v4m1 -5v6m1 -6v5m1 -4v4m1 -5v3m1 -3v4m1 -4v3m1 -3v4m1 -4v5m1 -5v5m1 -5v4m1 -4v5m1 -5v3m1 -3v4m1 -5v5m1 -4v4m1 -3v4m1 -5v5m1 -5v4m1 -4v5m1 -5v5m1 -6v5m1 -5v4m1 -5v6m1 -4v5m1 -5v5m1 -6v5m1 -4v4m1 -4v4m1 -6v5m1 -3v5m1 -6v5m1 -4v5m1 -5v4m1 -5v5m1 -4v4m1 -4v4m1 -4v4m1 -4v5m1 -5v4m1 -4v5m1 -5v4m1 -4v5m1 -6v5m1 -4v5m1 -6v6m1 -6v4m1 -3v4m1 -4v4m1 -4v4m1 -4v4m1 -4v5m1 -6v5m1 -3v4m1 -4v4m1 -5v4m1 -5v5m1 -4v4m1 -4v4m1 -4v4m1 -6v6m1 -5v6m1 -5v5m1 -6v5m1 -5v6m1 -5v4m1 -4v4m1 -5v5m1 -4v4m1 -6v5m1 -3v4m1 -4v4m1 -5v4m1 -4v4m1 -4v4m1 -4v5m1 -5v5m1 -5v5m1 -4v4m1 -4v4m1 -5v4m1 -3v5m1 -6v5m1 -4v4m1 -4v5m1 -6v5m1 -5v5m1 -5v5m1 -4v4m1 -5v5m1 -4v4m1 -5v6m1 -6v4m1 -3v4m1 -6v8m1 -6v3m1 -5v5m1 -4v4m1 -3v4m1 -5v5m1 -5v4m1 -3v5m1 -6v4m1 -4v5m1 -4v4m1 -5v4m1 -4v4m1 -3v4m1 -5v4" stroke="#2ca02c" fill="none"/><rect x="909" y="524" width="789" height="21" fill="url(#sp3)"/><path d="M909.5 547v12m1 -11v12m1 -14v14m1 -11v10m1 -10v11m1 -11v11m1 -10v11m1 -11v12m1 -11v9m1 -10v11m1 -12v13m1 -11v11m1 -11v10m1 -11v10m1 -12v13m1 -13v13m1 -13v12m1 -10v12m1 -14v13m1 -16v15m1 -11v11m1 -11v11m1 -12v13m1 -10v9m1 -10v11m1 -13v12m1 -9v9m1 -9v9m1 -9v11m1 -13v11m1 -10v10m1 -11v12m1 -11v10m1 -9v9m1 -9v9m1 -10v10m1 -9v9m1 -10v13m1 -12v9m1 -10v11m1 -11v10m1 -10v10m1 -10v11m1 -11v10m1 -10v11m1 -14v14m1 -15v15m1 -11v11m1 -13v12m1 -9v9m1 -10v10m1 -10v10m1 -11v12m1 -10v9m1 -14v14m1 -9v9m1 -9v9m1 -10v10m1 -10v11m1 -11v11m1 -11v10m1 -10v9m1 -8v9m1 -10v10m1 -10v10m1 -10v10m1 -11v11m1 -10v10m1 -10v10m1 -10v10m1 -10v10m1 -10v10m1 -10v11m1 -10v10m1 -14v13m1 -9v10m1 -11v11m1 -10v9m1 -11v13m1 -12v12m1 -13v12m1 -12v12m1 -12v11m1 -11v11m1 -11v11m1 -13v14m1 -12v11m1 -10v10m1 -10v10m1 -11v12m1 -12v10m1 -11v13m1 -12v11m1 -11v12m1 -14v13m1 -10v10m1 -9v9m1 -10v11m1 -11v11m1 -11v10m1 -9v9m1 -10v12m1 -11v9m1 -10v10m1 -10v10m1 -9v9m1 -9v9m1 -10v11m1 -11v10m1 -10v10m1 -9v11m1 -13v12m1 -11v11m1 -12v11m1 -10v11m1 -11v11m1 -11v12m1 -12v10m1 -10v9m1 -10v11m1 -9v9m1 -9v10m1 -10v9m1 -10v10m1 -10v10m1 -11v11m1 -9v9m1 -11v12m1 -11v10m1 -11v10m1 -10v11m1 -11v11m1 -11v11m1 -13v13m1 -12v12m1 -12v13m1 -13v11m1 -11v13m1 -12v11m1 -10v10m1 -10v10m1 -10v10m1 -10v9m1 -9v9m1 -10v11m1 -10v10m1 -11v11m1 -10v10m1 -10v10m1 -14v16m1 -14v12m1 -11v11m1 -13v12m1 -11v12m1 -10v11m1 -14v12m1 -12v14m1 -12v10m1 -10v11m1 -11v10m1 -10v10m1 -10v9m1 -9v9m1 -8v10m1 -11v11m1 -12v11m1 -11v11m1 -10v11m1 -12v11m1 -11v12m1 -15v13m1 -10v12m1 -12v12m1 -11v10m1 -9v12m1 -12v10m1 -10v9m1 -10v10m1 -10v9m1 -8v10m1 -11v11m1 -12v12m1 -11v10m1 -12v11m1 -10v12m1 -14v12m1 -11v12m1 -12v12m1 -11v11m1 -10v11m1 -11v10m1 -10v11m1 -11v11m1 -11v10m1 -10v10m1 -10v12m1 -11v11m1 -12v11m1 -10v10m1 -11v11m1 -13v12m1 -9v9m1 -9v10m1 -10v11m1 -12v11m1 -10v9m1 -9v9m1 -10v11m1 -11v10m1 -9v12m1 -12v11m1 -12v13m1 -18v16m1 -12v12m1 -9v10m1 -12v11m1 -12v12m1 -11v10m1 -9v10m1 -12v12m1 -10v10m1 -10v9m1 -13v15m1 -11v9m1 -13v14m1 -11v11m1 -10v11m1 -11v9m1 -10v11m1 -11v11m1 -10v10m1 -9v10m1 -10v9m1 -10v10m1 -10v10m1 -9v9m1 -9v11m1 -12v10m1 -9v9m1 -11v12m1 -12v11m1 -10v10m1 -10v10m1 -11v11m1 -11v10m1 -11v11m1 -8v10m1 -13v12m1 -11v12m1 -11v10m1 -11v11m1 -11v12m1 -11v10m1 -11v12m1 -11v10m1 -11v11m1 -14v14m1 -10v10m1 -10v11m1 -11v12m1 -12v10m1 -10v11m1 -10v9m1 -12v11m1 -9v10m1 -10v11m1 -11v10m1 -9v9m1 -10v10m1 -11v12m1 -10v10m1 -11v10m1 -10v10m1 -10v11m1 -14v14m1 -12v12m1 -11v10m1 -11v11m1 -10v11m1 -12v11m1 -11v11m1 -11v11m1 -9v9m1 -9v9m1 -12v13m1 -10v9m1 -9v10m1 -15v16m1 -12v12m1 -11v11m1 -12v11m1 -11v10m1 -11v12m1 -12v11m1 -10v11m1 -11v10m1 -15v15m1 -10v11m1 -12v13m1 -13v10m1 -10v11m1 -10v11m1 -13v12m1 -11v11m1 -11v11m1 -10v11m1 -12v11m1 -10v9m1 -9v10m1 -11v11m1 -11v11m1 -11v11m1 -11v11m1 -10v11m1 -13v12m1 -10v10m1 -10v12m1 -12v10m1 -10v11m1 -10v10m1 -11v10m1 -9v10m1 -11v11m1 -12v12m1 -12v11m1 -9v10m1 -10v9m1 -10v11m1 -12v13m1 -13v10m1 -9v11m1 -11v11m1 -13v12m1 -13v13m1 -13v13m1 -11v11m1 -13v13m1 -11v11m1 -13v12m1 -9v9m1 -8v9m1 -10v9m1 -9v10m1 -10v9m1 -9v11m1 -13v12m1 -12v12m1 -10v10m1 -11v13m1 -13v10m1 -10v10m1 -9v9m1 -9v10m1 -10v9m1 -10v10m1 -9v10m1 -10v11m1 -12v11m1 -11v12m1 -12v11m1 -12v12m1 -10v10m1 -10v10m1 -9v9m1 -9v9m1 -10v10m1 -10v11m1 -11v10m1 -10v10m1 -10v10m1 -10v10m1 -10v10m1 -11v10m1 -9v10m1 -11v10m1 -11v12m1 -13v12m1 -9v9m1 -10v10m1 -10v10m1 -9v9m1 -11v12m1 -12v12m1 -10v10m1 -12v11m1 -12v13m1 -10v10m1 -12v12m1 -12v13m1 -12v11m1 -12v11m1 -11v13m1 -13v11m1 -9v10m1 -10v10m1 -11v9m1 -9v11m1 -15v14m1 -10v11m1 -10v10m1 -11v10m1 -9v9m1 -12v11m1 -9v11m1 -11v12m1 -16v14m1 -11v12m1 -11v10m1 -10v11m1 -10v9m1 -10v10m1 -9v10m1 -11v11m1 -11v10m1 -9v9m1 -9v10m1 -11v11m1 -11v11m1 -10v10m1 -11v11m1 -11v10m1 -10v11m1 -11v11m1 -14v13m1 -12v14m1 -12v13m1 -17v15m1 -11v10m1 -9v9m1 -10v11m1 -11v10m1 -10v10m1 -11v10m1 -9v10m1 -12v12m1 -11v11m1 -11v12m1 -13v11m1 -10v11m1 -10v10m1 -10v10m1 -10v10m1 -11v11m1 -11v10m1 -10v10m1 -10v11m1 -13v13m1 -11v11m1 -11v12m1 -12v11m1 -10v10m1 -10v11m1 -10v9m1 -10v10m1 -9v11m1 -11v9m1 -9v10m1 -10v10m1 -10v10m1 -10v10m1 -11v10m1 -9v10m1 -10v10m1 -10v10m1 -10v9m1 -9v11m1 -11v12m1 -13v11m1 -11v12m1 -12v11m1 -11v12m1 -12v12m1 -10v10m1 -14v15m1 -12v10m1 -12v9m1 -8v10m1 -14v12m1 -10v11m1 -11v10m1 -8v10m1 -11v9m1 -9v9m1 -8v10m1 -11v10m1 -10v10m1 -11v11m1 -11v11m1 -11v10m1 -9v11m1 -12v11m1 -12v12m1 -12v12m1 -10v11m1 -10v10m1 -11v10m1 -9v9m1 -10v10m1 -10v11m1 -13v13m1 -12v13m1 -14v11m1 -11v12m1 -12v11m1 -9v11m1 -11v10m1 -11v10m1 -8v9m1 -10v11m1 -11v11m1 -11v9m1 -9v11m1 -11v12m1 -13v10m1 -10v10m1 -11v11m1 -10v10m1 -10v11m1 -12v12m1 -13v13m1 -12v13m1 -11v12m1 -11v9m1 -9v9m1 -9v10m1 -11v10m1 -10v10m1 -9v9m1 -10v12m1 -12v10m1 -10v10m1 -10v11m1 -12v11m1 -11v12m1 -12v11m1 -12v12m1 -12v14m1 -15v13m1 -9v9m1 -10v10m1 -10v9m1 -9v10m1 -10v9m1 -10v11m1 -10v12m1 -12v10m1 -12v12m1 -11v11m1 -10v10m1 -9v9m1 -9v10m1 -10v9m1 -9v9m1 -11v11m1 -9v11m1 -14v13m1 -10v9m1 -13v13m1 -9v10m1 -11v12m1 -13v13m1 -12v11m1 -11v11m1 -11v13m1 -12v10m1 -11v10m1 -11v11m1 -10v11m1 -11v11m1 -13v13m1 -11v11m1 -12v11m1 -12v12m1 -11v12m1 -12v11m1 -12v12m1 -11v11m1 -11v10m1 -10v12m1 -11v10m1 -10v10m1 -10v10m1 -10v12m1 -11v10m1 -10v10m1 -11v10m1 -10v10m1 -9v9m1 -10v10m1 -11v12m1 -11v10m1 -10v11m1 -11v10m1 -10v11m1 -15v14m1 -10v11m1 -10v9m1 -10v11m1 -14v14m1 -11v10m1 -9v10m1 -12v10m1 -9v9m1 -9v10m1 -10v9m1 -9v10m1 -10v10m1 -10v10m1 -10v11m1 -15v14m1 -11v10m1 -8v10m1 -12v11m1 -10v10m1 -9v11m1 -12v10m1 -9v9m1 -11v13m1 -12v10m1 -11v11m1 -11v11m1 -11v11m1 -11v11m1 -10v11m1 -10v9m1 -10v10m1 -11v10m1 -11v10m1 -10v11m1 -12v9m1 -11v11m1 -14v14m1 -14v13m1 -7v12m1 -11v10m1 -11v10m1 -8v10m1 -10v10m1 -10v13m1 -12v11m1 -11v12m1 -10v11m1 -11v9m1 -9v11m1 -12v10m1 -10v10m1 -10v11m1 -11v10m1 -10v10m1 -10v11m1 -12v11m1 -11v12m1 -12v11m1 -12v12m1 -10v11m1 -12v12m1 -11v10m1 -10v10m1 -12v11m1 -9v10m1 -10v9m1 -9v10m1 -12v12m1 -10v11m1 -12v12m1 -10v9m1 -9v10m1 -11v12m1 -12v10m1 -8v9m1 -9v11m1 -12v9m1 -8v9m1 -10v11m1 -10v9m1 -9v9m1 -10v11m1 -11v10m1 -11v11m1 -11v11m1 -10v10m1 -10v10m1 -10v11m1 -11v10m1 -12v11m1 -9v11m1 -14v12m1 -10v10m1 -10v10m1 -10v11m1 -10v9m1 -10v12m1 -11v10m1 -11v13m1 -12v10m1 -11v11m1 -11v10m1 -9v9m1 -10v10m1 -12v12m1 -11v11m1 -11v12m1 -13v13m1 -12v11m1 -12v14m1 -11v9m1 -9v10m1 -10v10m1 -11v11m1 -11v10m1 -10v11m1 -10v11m1 -13v12m1 -12v12m1 -11v10m1 -9v11m1 -12v10m1 -11v11m1 -9v11m1 -11v10m1 -11v10m1 -9v9m1 -9v10m1 -11v11m1 -10v10m1 -11v11m1 -11v12m1 -11v10m1 -10v11m1 -12v12m1 -13v13m1 -11v10m1 -12v13m1 -10v9m1 -10v10m1 -9v10m1 -12v11m1 -9v9m1 -10v9m1 -11v13m1 -12v10m1 -10v10m1 -9v10m1 -16v16m1 -13v13m1 -11v12m1 -12v12m1 -12v12m1 -13v13m1 -13v12m1 -12v13m1 -13v12m1 -10v9m1 -9v10m1 -10v9m1 -9v9m1 -9v9m1 -9v9m1 -9v11m1 -12v10m1 -10v11m1 -10v11m1 -11v11m1 -11v9m1 -11v12m1 -12v11m1 -10v10m1 -10v11m1 -12v11m1 -13v13m1 -11v11m1 -11v11m1 -9v10m1 -11v11m1 -11v11m1 -12v13m1 -13v11m1 -8v9m1 -10v11m1 -11v9m1 -9v9m1 -10v11m1 -12v12m1 -10v9m1 -10v11m1 -10v10m1 -10v11m1 -12v11m1 -10v10" stroke="#d62728" stroke-opacity="0.80" fill="none"/><path d="M909.5 552v5m1 -5v6m1 -5v6m1 -7v6m1 -5v4m1 -5v6m1 -5v4m1 -5v6m1 -5v4m1 -5v6m1 -5v5m1 -5v6m1 -6v5m1 -5v5m1 -5v5m1 -6v6m1 -5v4m1 -5v6m1 -5v6m1 -7v6m1 -7v7m1 -7v8m1 -6v5m1 -6v6m1 -5v5m1 -5v5m1 -4v4m1 -6v6m1 -6v5m1 -4v5m1 -5v5m1 -6v7m1 -6v6m1 -6v5m1 -5v4m1 -4v6m1 -7v6m1 -5v5m1 -5v4m1 -5v6m1 -6v6m1 -5v4m1 -5v5m1 -5v6m1 -5v6m1 -6v5m1 -6v6m1 -5v4m1 -4v5m1 -5v5m1 -5v4m1 -5v6m1 -5v5m1 -5v5m1 -5v4m1 -4v5m1 -4v5m1 -6v5m1 -5v5m1 -5v5m1 -6v6m1 -5v5m1 -5v5m1 -5v5m1 -5v4m1 -4v5m1 -5v5m1 -5v6m1 -5v4m1 -4v5m1 -6v4m1 -4v5m1 -4v4m1 -5v4m1 -4v4m1 -3v4m1 -5v5m1 -5v5m1 -4v5m1 -6v5m1 -5v6m1 -6v6m1 -6v6m1 -7v5m1 -4v5m1 -5v5m1 -6v5m1 -4v6m1 -6v5m1 -6v6m1 -6v7m1 -6v5m1 -7v6m1 -4v5m1 -5v5m1 -5v5m1 -5v5m1 -5v4m1 -4v4m1 -4v5m1 -5v4m1 -4v5m1 -5v5m1 -5v5m1 -5v5m1 -4v4m1 -6v6m1 -5v5m1 -5v5m1 -6v7m1 -6v5m1 -4v4m1 -4v4m1 -5v5m1 -5v4m1 -4v4m1 -4v4m1 -4v5m1 -5v5m1 -5v5m1 -5v5m1 -6v6m1 -5v5m1 -5v5m1 -5v5m1 -6v5m1 -5v5m1 -5v5m1 -4v4m1 -4v4m1 -4v5m1 -6v5m1 -6v6m1 -5v5m1 -5v6m1 -6v5m1 -5v5m1 -4v4m1 -4v5m1 -7v6m1 -5v5m1 -4v5m1 -6v5m1 -5v5m1 -5v6m1 -5v5m1 -6v5m1 -6v6m1 -5v5m1 -5v6m1 -7v7m1 -6v6m1 -7v5m1 -4v7m1 -6v5m1 -6v6m1 -7v6m1 -4v4m1 -6v6m1 -5v4m1 -4v4m1 -4v5m1 -5v5m1 -5v4m1 -5v5m1 -5v5m1 -5v6m1 -6v5m1 -4v5m1 -5v5m1 -5v5m1 -6v5m1 -5v5m1 -5v5m1 -5v6m1 -5v7m1 -7v5m1 -5v5m1 -5v4m1 -4v4m1 -4v5m1 -7v7m1 -6v5m1 -5v6m1 -6v5m1 -5v5m1 -6v7m1 -6v5m1 -6v6m1 -4v5m1 -5v5m1 -5v5m1 -4v4m1 -5v4m1 -5v6m1 -5v5m1 -5v4m1 -5v7m1 -6v5m1 -4v4m1 -5v5m1 -5v6m1 -5v5m1 -6v5m1 -4v4m1 -4v5m1 -5v6m1 -7v5m1 -4v4m1 -4v4m1 -4v6m1 -6v4m1 -5v5m1 -4v4m1 -4v5m1 -5v4m1 -5v7m1 -7v5m1 -5v5m1 -5v6m1 -5v4m1 -5v5m1 -4v5m1 -5v5m1 -6v5m1 -4v5m1 -6v7m1 -7v5m1 -5v6m1 -5v5m1 -5v5m1 -5v5m1 -6v5m1 -4v4m1 -4v4m1 -4v4m1 -4v4m1 -4v4m1 -5v6m1 -5v4m1 -4v4m1 -4v5m1 -6v5m1 -4v5m1 -5v4m1 -5v6m1 -5v6m1 -6v4m1 -4v6m1 -6v4m1 -5v5m1 -5v6m1 -6v6m1 -5v5m1 -5v5m1 -5v5m1 -6v6m1 -5v5m1 -5v4m1 -4v4m1 -4v5m1 -5v5m1 -5v5m1 -5v5m1 -5v5m1 -5v5m1 -5v5m1 -5v5m1 -5v5m1 -6v5m1 -4v4m1 -4v5m1 -5v4m1 -4v5m1 -5v5m1 -5v6m1 -6v5m1 -5v4m1 -5v6m1 -6v5m1 -4v5m1 -5v6m1 -7v6m1 -4v4m1 -4v5m1 -5v4m1 -5v5m1 -4v4m1 -5v6m1 -7v6m1 -5v5m1 -5v5m1 -5v6m1 -6v5m1 -5v4m1 -4v6m1 -7v6m1 -5v5m1 -6v6m1 -6v6m1 -5v5m1 -6v5m1 -5v6m1 -5v5m1 -7v6m1 -6v6m1 -4v4m1 -5v6m1 -5v4m1 -4v5m1 -6v6m1 -6v5m1 -5v6m1 -6v6m1 -5v4m1 -4v5m1 -5v5m1 -5v5m1 -6v6m1 -6v7m1 -6v4m1 -4v5m1 -4v4m1 -5v4m1 -4v5m1 -5v5m1 -5v5m1 -5v5m1 -5v5m1 -6v5m1 -4v4m1 -4v5m1 -5v6m1 -6v6m1 -7v6m1 -6v5m1 -5v6m1 -6v7m1 -7v5m1 -5v5m1 -5v6m1 -5v5m1 -5v6m1 -6v4m1 -4v4m1 -4v5m1 -6v5m1 -5v5m1 -5v5m1 -5v5m1 -5v5m1 -4v4m1 -5v5m1 -5v4m1 -5v6m1 -5v5m1 -5v5m1 -5v5m1 -6v7m1 -6v5m1 -4v5m1 -5v4m1 -4v5m1 -5v5m1 -5v4m1 -5v6m1 -5v4m1 -4v4m1 -4v6m1 -7v6m1 -5v5m1 -6v5m1 -5v6m1 -5v5m1 -5v5m1 -5v5m1 -5v5m1 -5v4m1 -5v6m1 -6v5m1 -5v5m1 -5v7m1 -7v4m1 -4v6m1 -7v6m1 -5v5m1 -5v5m1 -5v6m1 -6v5m1 -6v6m1 -6v6m1 -5v5m1 -5v6m1 -6v4m1 -4v5m1 -5v4m1 -5v5m1 -4v4m1 -5v6m1 -5v5m1 -5v5m1 -5v5m1 -6v6m1 -5v5m1 -5v5m1 -5v4m1 -5v6m1 -5v5m1 -5v4m1 -4v5m1 -5v5m1 -4v4m1 -5v5m1 -5v5m1 -4v5m1 -6v5m1 -6v6m1 -6v6m1 -4v4m1 -5v5m1 -5v5m1 -5v5m1 -6v6m1 -5v5m1 -5v4m1 -4v6m1 -6v4m1 -5v6m1 -5v5m1 -6v6m1 -6v6m1 -5v5m1 -6v5m1 -5v5m1 -4v6m1 -8v7m1 -5v5m1 -6v6m1 -7v6m1 -5v5m1 -5v5m1 -4v4m1 -5v6m1 -5v7m1 -7v5m1 -6v6m1 -6v5m1 -4v5m1 -7v7m1 -6v6m1 -5v5m1 -5v4m1 -5v5m1 -3v5m1 -7v6m1 -5v6m1 -6v4m1 -4v5m1 -4v4m1 -4v5m1 -5v4m1 -5v6m1 -6v5m1 -4v4m1 -5v5m1 -5v6m1 -5v5m1 -6v7m1 -7v5m1 -6v7m1 -6v6m1 -5v5m1 -5v5m1 -5v4m1 -4v4m1 -6v6m1 -6v5m1 -6v5m1 -4v5m1 -5v4m1 -4v4m1 -5v5m1 -5v6m1 -5v5m1 -5v4m1 -4v5m1 -5v5m1 -5v5m1 -6v6m1 -6v6m1 -5v5m1 -6v5m1 -4v6m1 -6v5m1 -6v5m1 -3v4m1 -5v5m1 -5v5m1 -5v4m1 -4v5m1 -7v7m1 -7v7m1 -6v6m1 -6v5m1 -4v6m1 -6v4m1 -4v5m1 -6v6m1 -5v4m1 -5v5m1 -4v5m1 -5v5m1 -5v5m1 -5v5m1 -7v6m1 -4v5m1 -6v6m1 -6v5m1 -5v7m1 -7v5m1 -5v6m1 -6v6m1 -5v5m1 -5v5m1 -5v4m1 -4v4m1 -4v5m1 -4v5m1 -7v6m1 -6v6m1 -5v4m1 -4v5m1 -5v5m1 -5v5m1 -5v5m1 -6v6m1 -6v5m1 -4v5m1 -5v5m1 -5v5m1 -5v4m1 -5v7m1 -6v4m1 -4v4m1 -4v5m1 -6v5m1 -5v7m1 -7v6m1 -5v5m1 -5v5m1 -5v4m1 -3v5m1 -7v6m1 -5v4m1 -4v6m1 -5v5m1 -6v5m1 -5v6m1 -5v4m1 -5v6m1 -7v6m1 -4v5m1 -5v4m1 -6v6m1 -4v4m1 -4v5m1 -6v4m1 -4v6m1 -5v4m1 -5v4m1 -4v5m1 -6v7m1 -8v6m1 -5v6m1 -5v5m1 -6v5m1 -5v6m1 -6v7m1 -6v5m1 -5v4m1 -4v4m1 -4v5m1 -5v5m1 -5v5m1 -4v5m1 -6v4m1 -3v5m1 -6v5m1 -6v5m1 -5v5m1 -4v5m1 -5v6m1 -6v6m1 -6v5m1 -5v6m1 -6v5m1 -5v5m1 -6v5m1 -4v4m1 -4v4m1 -4v4m1 -4v5m1 -5v5m1 -5v5m1 -5v5m1 -5v4m1 -4v4m1 -5v5m1 -4v6m1 -6v5m1 -6v6m1 -5v7m1 -7v4m1 -4v4m1 -5v5m1 -5v6m1 -5v5m1 -5v6m1 -8v6m1 -4v5m1 -6v6m1 -5v6m1 -7v5m1 -4v4m1 -5v5m1 -4v4m1 -6v6m1 -7v5m1 -5v5m1 -5v5m1 -6v6m1 -7v6m1 -5v5m1 -4v6m1 -5v5m1 -4v5m1 -5v5m1 -4v5m1 -5v5m1 -4v5m1 -4v4m1 -3v4m1 -5v6m1 -6v6m1 -7v5m1 -4v5m1 -4v5m1 -6v5m1 -5v4m1 -4v5m1 -5v7m1 -6v4m1 -6v5m1 -4v4m1 -4v4m1 -4v5m1 -6v7m1 -6v4m1 -5v5m1 -4v4m1 -4v4m1 -4v4m1 -4v6m1 -6v5m1 -5v6m1 -5v5m1 -5v4m1 -5v5m1 -4v4m1 -4v5m1 -6v5m1 -5v5m1 -5v5m1 -4v4m1 -4v4m1 -4v5m1 -5v6m1 -6v4m1 -5v5m1 -4v5m1 -5v4m1 -5v5m1 -5v5m1 -4v5m1 -5v4m1 -4v5m1 -6v5m1 -4v4m1 -5v4m1 -3v4m1 -5v5m1 -4v5m1 -6v5m1 -5v4m1 -3v5m1 -6v4m1 -4v4m1 -4v5m1 -5v4m1 -4v5m1 -5v4m1 -4v5m1 -5v7m1 -7v5m1 -5v5m1 -5v5m1 -5v4m1 -3v5m1 -6v4m1 -4v4m1 -4v4m1 -5v6m1 -5v4m1 -4v5m1 -6v5m1 -4v5m1 -5v4m1 -3v4m1 -5v5m1 -4v4m1 -4v5m1 -5v4m1 -5v5m1 -5v5m1 -4v5m1 -5v4m1 -4v4m1 -5v6m1 -5v5m1 -6v6m1 -6v5m1 -4v5m1 -5v5m1 -5v4m1 -4v5m1 -6v5m1 -4v4m1 -4v5m1 -5v5m1 -6v6m1 -5v4m1 -4v4m1 -5v5m1 -6v6m1 -5v5m1 -5v6m1 -6v5m1 -6v6m1 -6v6m1 -6v5m1 -4v6m1 -6v5m1 -5v5m1 -5v6m1 -6v5m1 -4v4m1 -5v6m1 -5v4m1 -5v5m1 -4v5m1 -7v7m1 -6v5m1 -5v5m1 -5v6m1 -6v5m1 -6v6m1 -5v5m1 -6v8m1 -8v6m1 -6v6m1 -5v5m1 -5v5m1 -5v5m1 -4v4m1 -4v5m1 -6v5m1 -5v6m1 -5v5m1 -5v4m1 -5v5m1 -4v4m1 -5v5m1 -4v5m1 -5v4m1 -4v5m1 -6v5m1 -5v7m1 -6v5m1 -6v6" stroke="#d62728" fill="none"/><rect x="909" y="538" width="789" height="26" fill="url(#sp3)"/></g><path d="M908.5 45V645.5H1698" stroke="#999" fill="none"/><g fill="#f2f2f2" font-size="13" text-anchor="end" stroke="#f2f2f2"><text x="903" y="638.7">0</text><text x="903" y="521.0">0.2</text><text x="903" y="403.3">0.4</text><text x="903" y="285.6">0.6</text><text x="903" y="167.9">0.8</text></g><rect x="899" y="45" width="1.3" height="5" fill="#eee"/><g fill="#f2f2f2" font-size="13" text-anchor="middle" stroke="#f2f2f2"><text x="1015.5" y="662">-6d</text><text x="1129.2" y="662">-5d</text><text x="1242.8" y="662">-4d</text><text x="1356.5" y="662">-3d</text><text x="1470.2" y="662">-2d</text><text x="1583.8" y="662">-1d</text></g><clipPath id="zc10"><rect x="0" y="0" width="1698" height="1409"/></clipPath><text x="1697.5" y="662" fill="#f2f2f2" font-size="13" text-anchor="middle" clip-path="url(#zc10)" stroke="#f2f2f2">0</text><text transform="translate(876 346) rotate(-90)" fill="#f2f2f2" font-size="13" text-anchor="middle" textLength="40" lengthAdjust="spacingAndGlyphs" stroke="#f2f2f2">counts</text><rect x="918.5" y="55.5" width="341" height="62" fill="rgba(24,24,24,0.68)" stroke="#555"/><rect x="927" y="64" width="19" height="19" fill="#2ca02c"/><text x="952.0" y="79" fill="#f0f0f0" font-size="13" textLength="299" lengthAdjust="spacingAndGlyphs" stroke="#f0f0f0">H0:VAC-MR_FAN2_170_1_ACC_INCHSEC [m-trend]</text><rect x="927" y="89" width="19" height="19" fill="#d62728"/><text x="952.0" y="104" fill="#f0f0f0" font-size="13" textLength="299" lengthAdjust="spacingAndGlyphs" stroke="#f0f0f0">H0:VAC-MR_FAN2_170_2_ACC_INCHSEC [m-trend]</text><clipPath id="c20"><rect x="1751" y="45" width="789" height="600"/></clipPath><path d="M1751 633.5H2540M1751 515.5H2540M1751 398.5H2540M1751 280.5H2540M1751 162.5H2540" stroke="#121212"/><path d="M1751 574.5H2540M1751 456.5H2540M1751 339.5H2540M1751 221.5H2540M1751 103.5H2540" stroke="#0c0c0c"/><path d="M1751 45.5H2540" stroke="#1f1f1f"/><path d="M1857.5 45V645M1971.5 45V645M2084.5 45V645M2198.5 45V645M2312.5 45V645M2425.5 45V645M2539.5 45V645" stroke="#1c1c1c"/><g clip-path="url(#c20)"><path d="M1751.5 528v3m1 -3v2m1 -3v3m1 -2v2m1 -2v2m1 -2v2m1 -2v2m1 -2v2m1 -2v3m1 -2v2m1 -3v2m1 -2v2m1 -2v3m1 -3v2m1 -2v2m1 -2v2m1 -2v2m1 -2v2m1 -4v2m1 0v3m1 -4v4m1 -3v3m1 -3v2m1 -2v2m1 -2v2m1 -3v2m1 -1v2m1 -2v2m1 -2v2m1 -4v3m1 -1v3m1 -4v2m1 -2v2m1 -2v2m1 -1v2m1 -2v2m1 -3v2m1 -2v3m1 -3v2m1 -1v3m1 -3v2m1 -3v4m1 -3v2m1 -3v3m1 -2v2m1 -3v2m1 -2v2m1 -2v3m1 -2v2m1 -2v2m1 -2v3m1 -3v2m1 -3v2m1 -1v3m1 -3v3m1 -3v2m1 -3v2m1 -1v2m1 -2v2m1 -2v2m1 -2v3m1 -3v3m1 -3v2m1 -3v3m1 -3v2m1 -2v3m1 -2v2m1 -2v2m1 -3v2m1 -1v2m1 -2v3m1 -3v2m1 -2v3m1 -5v3m1 -1v2m1 -2v2m1 -2v2m1 -3v2m1 -1v3m1 -4v3m1 -1v2m1 -3v2m1 -2v2m1 -2v2m1 -2v3m1 -5v2m1 0v2m1 -2v3m1 -4v4m1 -3v2m1 -3v2m1 -1v3m1 -3v2m1 -3v2m1 -1v2m1 -2v2m1 -3v2m1 -1v3m1 -3v2m1 -2v2m1 -3v2m1 -1v2m1 -2v3m1 -4v3m1 -2v2m1 -3v2m1 -1v3m1 -3v2m1 -3v2m1 -2v2m1 -2v2m1 -2v3m1 -3v3m1 -3v3m1 -3v2m1 -2v2m1 -2v2m1 -2v2m1 -2v2m1 -2v2m1 -1v3m1 -4v3m1 -2v3m1 -3v2m1 -3v2m1 -2v2m1 -2v2m1 -2v2m1 -3v2m1 -1v2m1 -2v2m1 -2v2m1 -2v2m1 -1v2m1 -3v2m1 -2v2m1 -1v3m1 -4v2m1 -2v3m1 -3v2m1 -2v2m1 -1v2m1 -3v2m1 -2v2m1 -2v2m1 -2v2m1 -2v3m1 -3v2m1 -1v2m1 -3v3m1 -2v2m1 -4v2m1 -1v2m1 -2v2m1 -1v2m1 -2v3m1 -5v2m1 0v3m1 -5v2m1 -1v2m1 -2v2m1 -1v3m1 -4v3m1 -3v3m1 -3v4m1 -4v3m1 -3v3m1 -2v2m1 -3v2m1 -2v2m1 -2v3m1 -2v3m1 -4v2m1 -2v4m1 -3v2m1 -3v2m1 -2v2m1 -3v2m1 -1v2m1 -1v2m1 -2v2m1 -3v2m1 -1v2m1 -2v2m1 -2v3m1 -3v2m1 -3v2m1 -1v2m1 -3v3m1 -3v2m1 -2v2m1 -1v2m1 -2v2m1 -1v2m1 -3v2m1 -2v2m1 -2v2m1 -2v2m1 -2v3m1 -4v2m1 -1v2m1 -2v2m1 -2v2m1 -2v2m1 -3v2m1 -2v2m1 -1v2m1 -2v2m1 -2v2m1 -2v2m1 -2v2m1 -3v2m1 -2v2m1 -1v2m1 -2v2m1 -3v3m1 -2v2m1 -2v2m1 -2v2m1 -2v2m1 -2v2m1 -2v3m1 -3v2m1 -2v2m1 -3v3m1 -2v3m1 -3v2m1 -2v2m1 -1v3m1 -4v2m1 -2v2m1 -2v2m1 -1v3m1 -4v3m1 -3v2m1 -2v3m1 -3v2m1 -2v3m1 -3v2m1 -3v2m1 0v2m1 -3v2m1 -2v2m1 -2v2m1 -2v2m1 -2v4m1 -3v2m1 -3v2m1 -2v2m1 -1v3m1 -4v2m1 -1v2m1 -2v2m1 -4v3m1 -3v2m1 0v2m1 -3v2m1 -1v3m1 -4v3m1 -2v2m1 -2v2m1 -3v2m1 -1v3m1 -4v2m1 -2v2m1 -2v2m1 -2v2m1 -1v2m1 -3v3m1 -2v2m1 -3v2m1 -1v2m1 -3v3m1 -3v2m1 -1v2m1 -3v3m1 -3v2m1 -2v2m1 -1v2m1 -3v3m1 -3v2m1 -2v2m1 -3v2m1 -1v2m1 -2v2m1 -2v2m1 -1v3m1 -4v2m1 -2v2m1 -1v2m1 -3v3m1 -4v2m1 -1v2m1 -2v3m1 -2v3m1 -4v2m1 -3v2m1 -1v2m1 -2v2m1 -2v2m1 -1v3m1 -4v2m1 -2v2m1 -2v2m1 -2v2m1 -3v2m1 -3v2m1 0v2m1 -2v3m1 -4v2m1 -2v2m1 -1v2m1 -2v3m1 -3v3m1 -3v2m1 -1v3m1 -4v2m1 -2v2m1 -2v3m1 -4v2m1 -1v2m1 -4v2m1 -1v2m1 -3v2m1 0v2m1 -2v2m1 -1v2m1 -3v2m1 -2v4m1 -4v2m1 -2v2m1 -2v2m1 -2v2m1 -3v2m1 0v2m1 -3v2m1 -3v2m1 -1v3m1 -3v2m1 -2v2m1 -3v2m1 -1v2m1 -2v3m1 -3v2m1 -2v2m1 -3v2m1 -1v2m1 -3v2m1 0v2m1 -3v2m1 -2v2m1 -2v3m1 -3v2m1 -2v2m1 -2v2m1 -2v2m1 -3v2m1 -1v2m1 -3v2m1 -1v2m1 -1v4m1 -6v3m1 -3v2m1 -1v2m1 -1v3m1 -4v2m1 -4v2m1 0v2m1 -2v2m1 -2v2m1 -2v3m1 -4v2m1 -3v2m1 1v2m1 -3v2m1 -2v3m1 -4v2m1 -1v2m1 -3v3m1 -3v2m1 -2v2m1 -2v2m1 -1v2m1 -3v3m1 -1v2m1 -3v2m1 -2v2m1 -2v3m1 -3v2m1 -3v3m1 -2v3m1 -2v2m1 -2v2m1 -3v2m1 -2v2m1 -1v3m1 -4v2m1 -1v2m1 -4v2m1 -2v2m1 -1v2m1 -2v2m1 -3v2m1 -1v2m1 -1v2m1 -3v2m1 -2v3m1 -3v2m1 -2v2m1 -2v3m1 -3v2m1 -2v2m1 -2v2m1 -2v2m1 -2v3m1 -4v2m1 -1v2m1 -2v2m1 -2v3m1 -2v2m1 -3v3m1 -3v3m1 -2v2m1 -3v2m1 -3v3m1 -2v3m1 -3v2m1 -2v2m1 -2v2m1 -2v2m1 -2v3m1 -4v3m1 -2v2m1 -3v3m1 -2v2m1 -1v2m1 -3v2m1 -2v2m1 -3v2m1 -1v3m1 -2v2m1 -3v2m1 -2v3m1 -4v2m1 -1v3m1 -4v2m1 -1v3m1 -3v3m1 -3v2m1 -2v2m1 -2v2m1 -2v2m1 -2v2m1 -2v2m1 -2v3m1 -4v2m1 -1v2m1 -2v2m1 -2v2m1 -2v2m1 -3v3m1 -1v3m1 -5v2m1 -1v2m1 -3v3m1 -3v3m1 -2v2m1 -2v2m1 -2v2m1 -2v2m1 -3v2m1 -3v2m1 0v2m1 -3v2m1 -1v2m1 -2v2m1 -3v3m1 -3v2m1 -1v2m1 -1v2m1 -3v2m1 -2v2m1 -2v2m1 -3v3m1 -3v2m1 -1v2m1 -2v2m1 -3v3m1 -2v3m1 -3v3m1 -4v2m1 -1v2m1 -4v2m1 -1v3m1 -3v2m1 -2v2m1 -1v3m1 -3v2m1 -3v2m1 -2v3m1 -2v4m1 -4v3m1 -4v3m1 -3v2m1 -2v2m1 -3v2m1 -1v2m1 -2v2m1 -2v2m1 -2v2m1 -1v2m1 -2v2m1 -3v3m1 -3v2m1 -2v2m1 -2v2m1 -1v3m1 -4v2m1 -3v2m1 -1v3m1 -3v2m1 -2v3m1 -3v3m1 -3v2m1 -1v2m1 -3v3m1 -2v2m1 -3v2m1 -2v2m1 -3v2m1 -1v2m1 -2v3m1 -2v3m1 -5v2m1 -1v2m1 -3v3m1 -3v2m1 -1v3m1 -3v2m1 -2v3m1 -2v3m1 -3v3m1 -3v2m1 -4v3m1 -1v2m1 -4v2m1 -1v2m1 -2v2m1 -1v2m1 -2v2m1 -2v2m1 -3v3m1 -3v3m1 -3v2m1 -2v3m1 -3v2m1 -1v2m1 -2v2m1 -2v2m1 -3v2m1 -2v2m1 -2v2m1 -1v3m1 -3v2m1 -3v2m1 -2v2m1 -2v3m1 -3v2m1 -1v2m1 -3v2m1 -2v3m1 -3v2m1 -2v2m1 -1v3m1 -3v2m1 -2v2m1 -3v2m1 -1v3m1 -5v3m1 -1v2m1 -3v3m1 -3v2m1 -2v3m1 -4v3m1 -1v2m1 -3v3m1 -2v3m1 -4v2m1 -2v2m1 -1v3m1 -4v2m1 -1v3m1 -3v2m1 -3v2m1 -1v2m1 -1v3m1 -4v2m1 -3v2m1 -1v2m1 -2v2m1 -2v3m1 -3v2m1 -2v3m1 -2v2m1 -3v2m1 -3v2m1 -1v2m1 -2v2m1 -3v2m1 -3v3m1 -2v3m1 -2v2m1 -2v2m1 -2v2m1 -2v3m1 -3v3m1 -4v3m1 -2v2m1 -3v2m1 -2v2m1 -2v2m1 -2v3m1 -2v3m1 -3v2m1 -3v4m1 -3v2m1 -2v2m1 -2v2m1 -2v2m1 -2v2m1 -2v3m1 -4v2m1 -1v3m1 -4v2m1 -1v3m1 -3v2m1 -2v3m1 -4v3m1 -1v2m1 -3v2m1 -2v2m1 -2v2m1 -2v2m1 -2v2m1 -2v3m1 -3v2m1 -2v2m1 -2v3m1 -3v4m1 -5v2m1 -1v2m1 -3v2m1 -1v2m1 -2v2m1 -2v2m1 -2v2m1 -2v2m1 -3v2m1 -2v2m1 -1v2m1 -2v2m1 -1v2m1 -3v2m1 -2v2m1 -2v2m1 -1v2m1 -3v3m1 -3v2m1 -2v2m1 -1v2m1 -2v2m1 -4v2m1 -1v2m1 -2v3m1 -3v3m1 -4v2m1 -1v2m1 -2v3m1 -3v2m1 -3v3m1 -3v2m1 -1v2m1 -2v2m1 -2v3m1 -3v2m1 -3v3m1 -1v3m1 -3v3m1 -4v2m1 -2v2m1 -1v3m1 -4v2m1 -2v2m1 -2v2m1 -3v2m1 -1v2m1 -1v2m1 -3v2m1 -2v2m1 -2v2m1 -3v2m1 -1v2m1 -2v2m1 -1v2m1 -3v2m1 -1v2m1 -3v2m1 -2v2m1 -2v2m1 -2v2m1 -2v2m1 -2v3m1 -3v2m1 -1v2m1 -2v2m1 -3v3m1 -3v2m1 -2v2m1 -2v2m1 -2v2m1 -1v3m1 -4v2m1 -1v2m1 -3v2m1 -2v2m1 -3v2m1 -1v3m1 -3v2m1 -2v2m1 -1v3m1 -4v2m1 -1v2m1 -2v3m1 -3v3m1 -3v2m1 -3v3m1 -3v2m1 -2v2m1 -2v3m1 -2v2m1 -2v2m1 -4v3m1 -2v3m1 -3v2m1 -2v3m1 -3v2m1 -1v3m1 -5v2m1 -1v2m1 -2v3m1 -4v2m1 0v2m1 -2v2m1 -3v2m1 -1v3m1 -4v2m1 -2v2m1 -1v2m1 -3v3m1 -2v2m1 -2v3m1 -4v2m1 -1v2m1 -3v2m1 -1v3m1 -4v2m1 -1v2m1 -3v2m1 -1v2m1 -3v2m1 -1v2m1 -2v2m1 -3v2m1 -2v3m1 -3v2m1 -2v2m1 -1v2m1 -2v2m1 -2v3m1 -4v2m1 -2v2m1 -3v3m1 -1v2m1 -2v2m1 -3v2m1 -3v2m1 0v2m1 -3v2m1 -2v2" stroke="#8c564b" stroke-opacity="0.9" fill="none"/><path d="M1751.5 619v2m1 -1v2m1 -3v2m1 -1v2m1 -2v3m1 -4v2m1 -2v3m1 -2v3m1 -4v2m1 -1v3m1 -4v2m1 -2v3m1 -3v2m1 -2v3m1 -3v2m1 -2v2m1 -1v2m1 -2v3m1 -3v2m1 -3v3m1 -3v3m1 -3v3m1 -3v3m1 -2v2m1 -3v3m1 -3v3m1 -3v2m1 -1v2m1 -3v3m1 -3v2m1 -1v4m1 -6v2m1 0v3m1 -3v2m1 -3v3m1 -3v3m1 -2v2m1 -2v4m1 -4v3m1 -3v3m1 -3v3m1 -3v3m1 -3v3m1 -3v4m1 -4v2m1 -3v2m1 -2v2m1 -1v2m1 -1v3m1 -5v2m1 -2v3m1 -3v2m1 -1v2m1 -2v2m1 -2v2m1 -2v3m1 -4v3m1 -2v2m1 -1v3m1 -5v2m1 -1v2m1 -3v3m1 -3v2m1 -1v3m1 -3v2m1 -2v2m1 -2v2m1 -2v2m1 -2v3m1 -3v2m1 -2v3m1 -2v2m1 -2v2m1 -3v2m1 -2v2m1 -2v2m1 -1v2m1 -2v2m1 -3v2m1 -2v2m1 -1v2m1 -3v2m1 -1v2m1 -3v3m1 -3v2m1 -2v2m1 -2v3m1 -2v2m1 -2v2m1 -3v2m1 -1v4m1 -5v3m1 -3v2m1 -2v2m1 -1v2m1 -3v2m1 -2v2m1 -2v2m1 -1v2m1 -3v2m1 -1v3m1 -4v2m1 -2v3m1 -2v2m1 -2v3m1 -4v2m1 -2v2m1 -1v2m1 -3v2m1 -1v2m1 -2v3m1 -4v2m1 -2v2m1 -1v2m1 -2v2m1 -2v2m1 -2v2m1 -3v2m1 -1v3m1 -3v3m1 -4v3m1 -2v3m1 -3v3m1 -4v3m1 -3v2m1 -2v2m1 -2v2m1 -1v2m1 -3v3m1 -2v3m1 -3v3m1 -4v2m1 -2v3m1 -2v2m1 -2v3m1 -4v2m1 -2v2m1 -2v3m1 -2v2m1 -3v2m1 -2v2m1 -3v2m1 -1v2m1 -1v4m1 -5v2m1 -1v2m1 -2v2m1 -3v2m1 -1v3m1 -3v3m1 -4v3m1 -2v3m1 -3v3m1 -4v3m1 -2v2m1 -2v3m1 -4v3m1 -3v2m1 -2v3m1 -3v3m1 -2v2m1 -3v2m1 -1v2m1 -2v2m1 -3v2m1 -2v2m1 -2v3m1 -2v2m1 -3v2m1 -1v2m1 -3v2m1 -2v2m1 -1v2m1 -2v2m1 -3v3m1 -3v2m1 -1v2m1 -3v3m1 -2v2m1 -3v2m1 -2v2m1 -2v2m1 -3v2m1 -2v3m1 -1v2m1 -3v2m1 -2v2m1 -1v2m1 -3v2m1 -2v3m1 -4v3m1 -3v2m1 0v2m1 -2v2m1 -2v3m1 -3v2m1 -2v2m1 -3v3m1 -2v4m1 -5v3m1 -3v2m1 -2v2m1 -2v4m1 -4v2m1 -2v3m1 -3v3m1 -3v2m1 -2v2m1 -1v2m1 -4v2m1 -1v2m1 -2v2m1 -1v4m1 -5v2m1 -3v3m1 -1v2m1 -3v2m1 -2v3m1 -3v2m1 -2v2m1 -1v2m1 -4v3m1 -3v2m1 -1v2m1 -2v2m1 -3v2m1 0v2m1 -3v3m1 -3v2m1 -1v2m1 -4v2m1 -1v2m1 -2v2m1 -1v3m1 -3v3m1 -4v3m1 -3v2m1 -1v2m1 -3v3m1 -3v2m1 -3v3m1 -2v2m1 -2v3m1 -2v2m1 -2v3m1 -5v3m1 -2v2m1 -3v3m1 -2v3m1 -4v3m1 -2v3m1 -2v3m1 -4v2m1 -2v2m1 -1v4m1 -5v3m1 -3v2m1 -1v3m1 -3v2m1 -4v3m1 -3v2m1 -1v3m1 -3v2m1 -2v2m1 -2v3m1 -2v2m1 -2v2m1 -4v3m1 -3v2m1 -1v2m1 -1v2m1 -2v2m1 -3v2m1 -2v2m1 -2v2m1 -2v2m1 -2v2m1 -3v2m1 -1v2m1 -2v2m1 -2v3m1 -2v4m1 -4v3m1 -4v2m1 -1v2m1 -3v4m1 -3v3m1 -4v3m1 -2v2m1 -3v2m1 -2v3m1 -3v2m1 -1v3m1 -4v2m1 -2v3m1 -3v2m1 -2v3m1 -3v3m1 -3v2m1 -2v2m1 -1v2m1 -2v2m1 -3v2m1 -2v2m1 -1v2m1 -3v2m1 -2v3m1 -3v2m1 -1v2m1 -2v3m1 -4v2m1 -2v2m1 -1v2m1 -3v2m1 -2v2m1 -2v3m1 -2v3m1 -4v2m1 -2v2m1 -1v3m1 -3v2m1 -2v3m1 -3v3m1 -4v3m1 -2v2m1 -2v2m1 -3v2m1 -3v3m1 -1v2m1 -3v2m1 -2v3m1 -3v3m1 -3v2m1 -2v2m1 -1v2m1 -3v3m1 -2v3m1 -4v2m1 -1v3m1 -3v2m1 -2v2m1 -2v2m1 -3v3m1 -2v2m1 -3v3m1 -2v3m1 -4v2m1 -1v2m1 -3v2m1 -2v2m1 -2v2m1 -2v3m1 -4v2m1 -1v2m1 -1v2m1 -3v2m1 -2v2m1 -2v2m1 -2v4m1 -3v3m1 -4v2m1 -2v3m1 -3v3m1 -3v3m1 -4v3m1 -2v2m1 -1v3m1 -4v3m1 -2v2m1 -2v3m1 -3v2m1 -2v3m1 -3v2m1 -4v2m1 -1v2m1 -2v3m1 -3v3m1 -3v2m1 -2v2m1 -1v2m1 -3v2m1 -2v3m1 -3v2m1 -1v2m1 -2v3m1 -4v3m1 -2v2m1 -3v2m1 -2v3m1 -3v3m1 -3v2m1 -2v2m1 -1v2m1 -2v2m1 -3v2m1 -1v3m1 -3v2m1 -3v3m1 -3v2m1 -1v2m1 -3v3m1 -2v2m1 -3v2m1 -2v3m1 -3v2m1 -2v3m1 -3v2m1 -1v2m1 -3v2m1 -2v3m1 -4v2m1 -1v3m1 -3v3m1 -2v2m1 -3v3m1 -4v2m1 0v3m1 -5v2m1 0v2m1 -2v2m1 -3v2m1 -3v2m1 -2v2m1 -2v2m1 -1v2m1 -2v3m1 -3v2m1 -2v3m1 -3v2m1 -2v3m1 -3v2m1 -1v3m1 -3v3m1 -4v3m1 -3v2m1 -2v3m1 -2v3m1 -4v2m1 -2v2m1 -3v2m1 -1v3m1 -2v3m1 -3v2m1 -3v2m1 0v3m1 -5v2m1 -2v2m1 -1v2m1 -3v3m1 -2v2m1 -3v2m1 -1v2m1 -3v2m1 -2v2m1 -1v3m1 -3v3m1 -4v3m1 -3v3m1 -2v2m1 -2v2m1 -3v2m1 -2v2m1 -2v2m1 -2v2m1 -2v2m1 -2v3m1 -3v3m1 -3v3m1 -3v3m1 -2v3m1 -4v2m1 -2v3m1 -2v2m1 -2v3m1 -4v2m1 -2v2m1 -1v3m1 -4v3m1 -3v3m1 -4v3m1 -1v2m1 -2v2m1 -3v2m1 -1v2m1 -2v4m1 -4v2m1 -2v2m1 -2v2m1 -2v2m1 -2v2m1 -2v3m1 -3v3m1 -3v2m1 -2v2m1 -2v2m1 -2v2m1 -2v3m1 -3v3m1 -3v4m1 -4v4m1 -4v2m1 -2v2m1 -2v3m1 -3v3m1 -3v2m1 -2v2m1 -2v2m1 -2v3m1 -4v2m1 -1v2m1 -3v3m1 -2v2m1 -2v3m1 -3v2m1 -2v2m1 -2v2m1 -2v2m1 -3v3m1 -2v2m1 -3v2m1 -2v2m1 -2v2m1 -1v2m1 -2v2m1 -2v2m1 -1v2m1 -3v4m1 -4v2m1 -2v2m1 -2v2m1 -2v2m1 -2v2m1 -3v2m1 -1v3m1 -3v2m1 -2v3m1 -4v3m1 -1v3m1 -4v2m1 -2v2m1 -2v4m1 -5v2m1 -1v2m1 -2v2m1 -2v2m1 -2v2m1 -2v2m1 -1v2m1 -2v3m1 -3v3m1 -4v3m1 -3v3m1 -3v3m1 -3v3m1 -3v3m1 -3v2m1 -2v3m1 -3v3m1 -4v2m1 -1v2m1 -2v2m1 -2v2m1 -1v2m1 -3v2m1 -2v2m1 -2v3m1 -3v2m1 -2v2m1 -2v3m1 -3v2m1 -1v2m1 -3v3m1 -3v3m1 -2v3m1 -3v3m1 -4v3m1 -3v2m1 -2v3m1 -3v2m1 -2v3m1 -3v2m1 -1v3m1 -3v3m1 -3v3m1 -4v2m1 -2v2m1 -2v2m1 -2v2m1 -1v3m1 -4v2m1 -2v2m1 -1v2m1 -4v4m1 -3v2m1 -1v2m1 -2v2m1 -2v2m1 -3v3m1 -3v2m1 -2v3m1 -3v2m1 -1v2m1 -2v2m1 -2v2m1 -3v2m1 -2v3m1 -3v2m1 -2v2m1 -1v2m1 -2v3m1 -4v2m1 -1v2m1 -3v2m1 -2v3m1 -2v2m1 -3v3m1 -3v2m1 -3v3m1 -1v2m1 -3v2m1 -2v2m1 -2v2m1 -2v3m1 -2v3m1 -4v2m1 -2v2m1 -3v2m1 0v2m1 -2v3m1 -3v2m1 -2v2m1 -3v2m1 0v2m1 -3v3m1 -3v3m1 -4v2m1 -1v2m1 -2v3m1 -4v2m1 -2v3m1 -2v2m1 -2v2m1 -3v2m1 -1v2m1 -2v3m1 -3v2m1 -3v2m1 -2v2m1 -1v2m1 -2v4m1 -5v2m1 -2v2m1 -1v3m1 -4v2m1 -2v2m1 -1v2m1 -3v3m1 -3v3m1 -2v2m1 -2v2m1 -2v3m1 -4v2m1 -1v2m1 -3v2m1 -1v3m1 -3v2m1 -3v3m1 -3v2m1 -2v3m1 -3v2m1 -2v2m1 -1v3m1 -4v2m1 -2v2m1 -2v2m1 -1v2m1 -2v3m1 -4v3m1 -3v2m1 -1v2m1 -2v2m1 -2v2m1 -2v2m1 -3v3m1 -2v3m1 -3v3m1 -4v2m1 -1v2m1 -2v3m1 -4v2m1 -1v2m1 -3v3m1 -3v2m1 -2v2m1 0v2m1 -3v2m1 -2v2m1 -3v3m1 -3v3m1 -2v3m1 -3v2m1 -2v2m1 -2v3m1 -4v2m1 -2v4m1 -3v2m1 -2v2m1 -2v3m1 -3v2m1 -2v2m1 -2v3m1 -3v2m1 -1v2m1 -3v2m1 -2v2m1 -1v2m1 -3v2m1 -3v2m1 -2v2m1 -2v3m1 -2v3m1 -3v2m1 -3v2m1 -1v2m1 -3v2m1 -1v4m1 -3v2m1 -3v4m1 -5v3m1 -3v2m1 -2v2m1 -1v2m1 -2v2m1 -2v2m1 -2v3m1 -3v2m1 -3v2m1 -1v2m1 -3v3m1 -3v2m1 -1v3m1 -2v2m1 -3v4m1 -5v2m1 -2v2m1 -1v2m1 -3v3m1 -2v2m1 -2v2m1 -3v2m1 -1v2m1 -2v3m1 -2v3m1 -4v3m1 -3v3m1 -3v2m1 -2v2m1 -2v2m1 -3v2m1 -2v2m1 -1v2m1 -2v2m1 -3v3m1 -2v3m1 -3v2m1 -2v2m1 -2v4m1 -5v2m1 -1v2m1 -2v3m1 -3v2m1 -2v2m1 -2v2m1 -1v2m1 -3v3m1 -3v3m1 -3v4m1 -4v3m1 -3v2m1 -1v3m1 -4v2m1 -2v3m1 -4v2m1 -1v2m1 -2v2m1 -2v3m1 -3v3m1 -4v3m1 -3v2" stroke="#9467bd" fill="none"/></g><path d="M1750.5 45V645.5H2540" stroke="#999" fill="none"/><g fill="#f2f2f2" font-size="13" text-anchor="end" stroke="#f2f2f2"><text x="1745" y="638.7">0</text><text x="1745" y="521.0">0.2</text><text x="1745" y="403.3">0.4</text><text x="1745" y="285.6">0.6</text><text x="1745" y="167.9">0.8</text></g><rect x="1741" y="45" width="1.3" height="5" fill="#eee"/><g fill="#f2f2f2" font-size="13" text-anchor="middle" stroke="#f2f2f2"><text x="1857.5" y="662">-6d</text><text x="1971.2" y="662">-5d</text><text x="2084.8" y="662">-4d</text><text x="2198.5" y="662">-3d</text><text x="2312.2" y="662">-2d</text><text x="2425.8" y="662">-1d</text></g><clipPath id="zc20"><rect x="0" y="0" width="2540" height="1409"/></clipPath><text x="2539.5" y="662" fill="#f2f2f2" font-size="13" text-anchor="middle" clip-path="url(#zc20)" stroke="#f2f2f2">0</text><text transform="translate(1718 346) rotate(-90)" fill="#f2f2f2" font-size="13" text-anchor="middle" textLength="40" lengthAdjust="spacingAndGlyphs" stroke="#f2f2f2">counts</text><rect x="1760.5" y="55.5" width="341" height="62" fill="rgba(24,24,24,0.68)" stroke="#555"/><rect x="1769" y="64" width="19" height="19" fill="#9467bd"/><text x="1794.0" y="79" fill="#f0f0f0" font-size="13" textLength="299" lengthAdjust="spacingAndGlyphs" stroke="#f0f0f0">H0:VAC-MR_FAN3_170_1_ACC_INCHSEC [m-trend]</text><rect x="1769" y="89" width="19" height="19" fill="#8c564b"/><text x="1794.0" y="104" fill="#f0f0f0" font-size="13" textLength="299" lengthAdjust="spacingAndGlyphs" stroke="#f0f0f0">H0:VAC-MR_FAN3_170_2_ACC_INCHSEC [m-trend]</text><clipPath id="c01"><rect x="67" y="673" width="789" height="601"/></clipPath><path d="M67 1262.5H856M67 1144.5H856M67 1026.5H856M67 909.5H856M67 791.5H856" stroke="#121212"/><path d="M67 1203.5H856M67 1085.5H856M67 968.5H856M67 850.5H856M67 732.5H856" stroke="#0c0c0c"/><path d="M67 673.5H856" stroke="#1f1f1f"/><path d="M173.5 673V1274M287.5 673V1274M400.5 673V1274M514.5 673V1274M628.5 673V1274M741.5 673V1274M855.5 673V1274" stroke="#1c1c1c"/><g clip-path="url(#c01)"><path d="M67.5 1138v4m1 -4v4m1 -5v5m1 -5v5m1 -6v6m1 -5v5m1 -6v6m1 -5v4m1 -4v5m1 -4v4m1 -5v5m1 -5v5m1 -5v5m1 -4v4m1 -4v4m1 -4v4m1 -4v5m1 -6v5m1 -5v6m1 -6v5m1 -4v5m1 -7v8m1 -6v5m1 -5v5m1 -4v4m1 -4v4m1 -5v5m1 -5v5m1 -5v5m1 -5v5m1 -5v5m1 -4v4m1 -4v4m1 -5v5m1 -5v5m1 -5v5m1 -4v4m1 -5v5m1 -4v5m1 -5v5m1 -4v4m1 -7v7m1 -5v5m1 -4v5m1 -6v4m1 -4v5m1 -5v5m1 -4v4m1 -5v5m1 -4v5m1 -6v5m1 -4v4m1 -5v5m1 -7v8m1 -5v5m1 -6v5m1 -4v4m1 -5v6m1 -5v4m1 -5v6m1 -6v5m1 -5v6m1 -6v6m1 -6v6m1 -5v4m1 -5v5m1 -5v5m1 -5v4m1 -4v5m1 -5v6m1 -5v4m1 -4v4m1 -5v6m1 -6v5m1 -4v5m1 -5v5m1 -5v5m1 -5v5m1 -6v5m1 -4v4m1 -4v5m1 -6v5m1 -4v4m1 -4v5m1 -5v5m1 -5v4m1 -4v6m1 -6v5m1 -5v4m1 -4v4m1 -4v4m1 -4v5m1 -6v5m1 -5v5m1 -5v5m1 -6v6m1 -4v6m1 -7v5m1 -4v4m1 -4v5m1 -7v6m1 -5v4m1 -3v4m1 -6v6m1 -5v5m1 -4v4m1 -4v4m1 -4v4m1 -5v5m1 -7v7m1 -4v4m1 -6v6m1 -4v5m1 -6v5m1 -5v5m1 -4v4m1 -4v5m1 -6v5m1 -5v4m1 -4v6m1 -6v5m1 -4v4m1 -4v5m1 -5v4m1 -7v7m1 -4v4m1 -7v8m1 -6v4m1 -4v5m1 -5v4m1 -3v4m1 -6v5m1 -4v4m1 -5v5m1 -4v4m1 -4v5m1 -5v5m1 -5v4m1 -4v5m1 -6v6m1 -5v5m1 -7v6m1 -5v5m1 -5v5m1 -4v5m1 -6v6m1 -5v5m1 -5v4m1 -5v4m1 -4v4m1 -3v4m1 -5v5m1 -6v6m1 -5v5m1 -5v4m1 -4v6m1 -5v4m1 -5v5m1 -4v4m1 -5v4m1 -4v4m1 -4v5m1 -5v5m1 -4v4m1 -5v5m1 -5v5m1 -5v5m1 -5v4m1 -4v4m1 -4v6m1 -5v5m1 -6v5m1 -5v5m1 -5v5m1 -5v5m1 -5v5m1 -5v6m1 -6v5m1 -5v5m1 -5v4m1 -5v6m1 -5v5m1 -5v4m1 -5v6m1 -5v5m1 -5v5m1 -5v4m1 -3v4m1 -5v5m1 -4v5m1 -5v6m1 -7v5m1 -4v4m1 -4v4m1 -4v5m1 -5v5m1 -5v5m1 -4v5m1 -7v6m1 -5v6m1 -7v6m1 -6v6m1 -4v4m1 -4v5m1 -5v4m1 -4v5m1 -6v5m1 -7v6m1 -4v4m1 -3v4m1 -4v4m1 -6v6m1 -5v6m1 -5v4m1 -5v5m1 -5v4m1 -4v5m1 -5v5m1 -5v5m1 -5v5m1 -4v4m1 -6v7m1 -5v4m1 -5v5m1 -4v4m1 -5v5m1 -4v5m1 -5v6m1 -7v5m1 -5v5m1 -4v5m1 -5v4m1 -4v4m1 -5v5m1 -4v4m1 -4v4m1 -5v5m1 -6v6m1 -5v4m1 -5v6m1 -5v4m1 -3v5m1 -6v6m1 -6v4m1 -3v4m1 -4v5m1 -6v5m1 -4v4m1 -5v6m1 -5v5m1 -6v5m1 -4v4m1 -6v5m1 -4v6m1 -5v4m1 -4v4m1 -5v5m1 -4v5m1 -7v7m1 -6v5m1 -4v4m1 -5v4m1 -5v5m1 -4v4m1 -6v5m1 -4v5m1 -5v4m1 -4v4m1 -3v4m1 -5v4m1 -4v5m1 -4v5m1 -6v4m1 -4v4m1 -4v5m1 -4v4m1 -5v5m1 -5v5m1 -5v5m1 -6v5m1 -5v5m1 -4v5m1 -5v5m1 -4v5m1 -6v4m1 -4v4m1 -4v5m1 -5v5m1 -5v5m1 -5v5m1 -5v6m1 -6v5m1 -5v6m1 -6v5m1 -5v5m1 -5v5m1 -5v5m1 -5v4m1 -4v6m1 -6v5m1 -4v4m1 -4v4m1 -5v6m1 -6v5m1 -5v5m1 -5v4m1 -5v5m1 -3v4m1 -5v4m1 -4v5m1 -6v6m1 -5v6m1 -6v5m1 -4v4m1 -5v4m1 -4v5m1 -6v5m1 -4v5m1 -5v5m1 -5v4m1 -4v6m1 -6v4m1 -4v4m1 -4v4m1 -4v4m1 -4v5m1 -6v7m1 -6v5m1 -5v4m1 -4v5m1 -6v5m1 -5v5m1 -4v5m1 -5v5m1 -5v4m1 -4v6m1 -6v5m1 -5v4m1 -5v5m1 -4v4m1 -5v5m1 -5v6m1 -5v5m1 -5v5m1 -5v5m1 -5v5m1 -5v5m1 -6v6m1 -5v4m1 -4v4m1 -4v4m1 -5v5m1 -4v5m1 -5v4m1 -4v4m1 -6v7m1 -5v5m1 -5v4m1 -4v4m1 -4v4m1 -6v6m1 -4v5m1 -5v5m1 -6v5m1 -5v5m1 -4v5m1 -5v5m1 -4v4m1 -5v5m1 -5v5m1 -5v5m1 -6v5m1 -5v5m1 -5v6m1 -5v5m1 -6v5m1 -3v6m1 -7v4m1 -4v5m1 -5v5m1 -5v4m1 -4v5m1 -5v5m1 -6v6m1 -6v6m1 -4v5m1 -6v4m1 -4v5m1 -6v5m1 -4v6m1 -6v6m1 -6v4m1 -3v5m1 -6v4m1 -3v5m1 -7v7m1 -6v5m1 -5v4m1 -3v5m1 -7v6m1 -4v6m1 -7v5m1 -4v4m1 -4v4m1 -5v4m1 -3v4m1 -4v5m1 -6v5m1 -5v5m1 -5v4m1 -4v5m1 -4v4m1 -4v5m1 -5v4m1 -4v4m1 -4v5m1 -6v5m1 -5v5m1 -5v6m1 -6v6m1 -7v5m1 -3v4m1 -5v5m1 -5v5m1 -4v4m1 -4v5m1 -6v5m1 -4v5m1 -5v5m1 -6v5m1 -5v5m1 -4v5m1 -6v6m1 -5v5m1 -5v5m1 -5v4m1 -5v5m1 -4v6m1 -6v4m1 -4v5m1 -5v4m1 -4v4m1 -5v7m1 -7v5m1 -6v6m1 -4v6m1 -6v4m1 -5v5m1 -5v5m1 -4v4m1 -4v5m1 -5v5m1 -5v5m1 -6v5m1 -5v5m1 -4v5m1 -5v5m1 -5v4m1 -4v4m1 -5v5m1 -5v6m1 -6v5m1 -5v5m1 -4v5m1 -5v4m1 -4v5m1 -5v5m1 -5v5m1 -5v4m1 -5v5m1 -5v4m1 -4v5m1 -4v4m1 -5v6m1 -5v4m1 -4v4m1 -4v5m1 -5v5m1 -6v5m1 -5v5m1 -4v4m1 -5v6m1 -8v7m1 -4v4m1 -5v5m1 -5v4m1 -4v6m1 -5v5m1 -6v4m1 -4v6m1 -5v4m1 -6v5m1 -4v4m1 -4v4m1 -4v5m1 -5v4m1 -4v4m1 -5v6m1 -6v6m1 -6v5m1 -6v7m1 -5v4m1 -4v4m1 -5v5m1 -4v5m1 -6v5m1 -4v4m1 -4v5m1 -6v5m1 -5v5m1 -4v4m1 -3v5m1 -5v4m1 -4v4m1 -4v5m1 -5v4m1 -5v5m1 -4v4m1 -4v6m1 -6v4m1 -4v5m1 -5v5m1 -5v5m1 -5v4m1 -4v5m1 -6v5m1 -5v5m1 -4v4m1 -4v4m1 -4v5m1 -6v5m1 -4v5m1 -5v4m1 -4v5m1 -5v5m1 -5v4m1 -4v4m1 -4v4m1 -5v5m1 -4v5m1 -5v5m1 -5v4m1 -4v4m1 -4v5m1 -5v5m1 -5v4m1 -5v7m1 -7v5m1 -5v6m1 -6v5m1 -4v5m1 -5v4m1 -5v6m1 -6v5m1 -4v5m1 -5v4m1 -5v5m1 -4v5m1 -5v4m1 -6v6m1 -4v5m1 -5v4m1 -4v4m1 -4v4m1 -4v4m1 -4v4m1 -4v5m1 -5v4m1 -4v4m1 -5v5m1 -4v4m1 -4v4m1 -5v6m1 -5v6m1 -6v4m1 -5v6m1 -5v5m1 -5v4m1 -5v5m1 -4v5m1 -5v5m1 -5v5m1 -5v5m1 -4v5m1 -5v4m1 -7v6m1 -3v5m1 -6v4m1 -3v4m1 -4v5m1 -6v6m1 -5v4m1 -4v5m1 -5v4m1 -4v4m1 -5v5m1 -4v5m1 -5v4m1 -4v4m1 -5v6m1 -5v4m1 -4v4m1 -4v6m1 -8v6m1 -4v4m1 -4v4m1 -4v4m1 -4v4m1 -4v5m1 -5v4m1 -4v4m1 -4v4m1 -4v5m1 -6v5m1 -4v4m1 -4v5m1 -5v4m1 -4v4m1 -4v4m1 -4v5m1 -6v5m1 -4v5m1 -5v4m1 -5v6m1 -7v7m1 -5v5m1 -6v5m1 -4v5m1 -6v5m1 -5v5m1 -5v5m1 -4v5m1 -5v5m1 -6v6m1 -5v5m1 -6v5m1 -4v4m1 -4v5m1 -5v4m1 -5v6m1 -5v4m1 -4v4m1 -5v6m1 -5v4m1 -5v5m1 -5v6m1 -6v5m1 -4v4m1 -4v5m1 -5v5m1 -6v6m1 -5v6m1 -6v4m1 -4v4m1 -5v6m1 -5v4m1 -5v5m1 -5v5m1 -4v4m1 -4v5m1 -5v5m1 -5v5m1 -5v5m1 -5v4m1 -5v6m1 -5v6m1 -7v5m1 -4v5m1 -6v5m1 -4v5m1 -5v4m1 -6v6m1 -5v5m1 -6v5m1 -6v6m1 -5v5m1 -4v4m1 -4v4m1 -6v7m1 -6v5m1 -4v4m1 -5v5m1 -5v5m1 -4v5m1 -7v6m1 -5v5m1 -5v4m1 -4v5m1 -5v5m1 -6v6m1 -5v5m1 -4v5m1 -7v6m1 -4v4m1 -4v4m1 -5v5m1 -5v5m1 -5v6m1 -5v5m1 -5v4m1 -4v5m1 -6v5m1 -6v5m1 -3v4m1 -5v5m1 -4v4m1 -5v5m1 -5v4m1 -4v5m1 -5v5m1 -5v5m1 -4v5m1 -5v4m1 -5v4m1 -3v4m1 -5v5m1 -4v4m1 -5v4m1 -4v4m1 -4v5m1 -4v4m1 -4v5m1 -5v5m1 -5v5m1 -6v5m1 -5v5m1 -5v4m1 -3v4m1 -5v5m1 -5v5m1 -5v4m1 -3v4m1 -4v4m1 -5v4m1 -4v4m1 -5v6m1 -5v6m1 -7v6m1 -5v4m1 -4v5m1 -5v5m1 -7v6m1 -4v5m1 -5v5m1 -4v4m1 -6v5m1 -4v5m1 -5v4m1 -4v4m1 -5v5m1 -5v5m1 -4v4m1 -5v4m1 -4v6m1 -5v4m1 -5v4m1 -4v5m1 -5v5m1 -5v4m1 -4v5m1 -5v4m1 -5v7m1 -6v5m1 -5v4m1 -3v4m1 -5v4m1 -4v4m1 -4v5m1 -4v5m1 -6v4m1 -4v4m1 -4v4m1 -4v4m1 -4v5m1 -4v4m1 -4v5m1 -4v5m1 -5v5m1 -5v4m1 -4v4m1 -3v4m1 -5v5m1 -5v5m1 -5v6m1 -6v6m1 -6v4m1 -4v4m1 -4v5m1 -5v5" stroke="#e377c2" stroke-opacity="1.00" fill="none"/><rect x="67" y="1134" width="789" height="13" fill="url(#sp1)"/><path d="M67.5 1218v2m1 -1v3m1 -4v3m1 -3v2m1 -1v4m1 -5v3m1 -3v3m1 -3v3m1 -2v3m1 -5v2m1 -1v2m1 -2v3m1 -3v4m1 -5v4m1 -3v2m1 -2v3m1 -3v3m1 -3v3m1 -3v2m1 -3v3m1 -2v3m1 -3v3m1 -2v2m1 -3v3m1 -3v3m1 -3v3m1 -3v3m1 -4v3m1 -3v3m1 -3v3m1 -2v3m1 -3v3m1 -4v2m1 -1v3m1 -2v3m1 -5v4m1 -3v3m1 -4v3m1 -2v3m1 -4v3m1 -3v3m1 -3v4m1 -3v3m1 -2v2m1 -3v3m1 -3v3m1 -4v2m1 -1v3m1 -3v3m1 -3v3m1 -3v3m1 -3v2m1 -1v2m1 -2v2m1 -3v3m1 -2v3m1 -4v3m1 -3v4m1 -4v2m1 -2v3m1 -3v3m1 -3v3m1 -3v2m1 -2v3m1 -3v3m1 -3v4m1 -4v4m1 -4v2m1 -2v3m1 -2v2m1 -3v3m1 -2v3m1 -5v3m1 -2v4m1 -4v4m1 -3v3m1 -4v3m1 -2v3m1 -4v3m1 -3v3m1 -3v4m1 -4v2m1 -3v3m1 -2v2m1 -2v3m1 -3v3m1 -3v3m1 -4v3m1 -2v2m1 -3v3m1 -2v3m1 -2v3m1 -5v3m1 -1v2m1 -4v3m1 -2v3m1 -3v2m1 -1v3m1 -5v3m1 -1v3m1 -3v3m1 -4v4m1 -4v3m1 -2v3m1 -5v3m1 -3v2m1 -1v2m1 -2v2m1 -1v3m1 -3v2m1 -3v2m1 -2v3m1 -3v3m1 -3v3m1 -3v3m1 -2v4m1 -5v3m1 -3v2m1 -1v3m1 -4v4m1 -4v3m1 -2v3m1 -3v4m1 -4v3m1 -3v2m1 -3v3m1 -3v3m1 -2v3m1 -3v2m1 -3v3m1 -2v3m1 -3v3m1 -4v3m1 -3v4m1 -2v3m1 -5v3m1 -2v2m1 -3v3m1 -3v3m1 -2v2m1 -3v4m1 -3v3m1 -4v3m1 -2v4m1 -6v3m1 -2v3m1 -3v3m1 -3v3m1 -2v2m1 -3v3m1 -2v3m1 -4v2m1 -1v2m1 -3v3m1 -3v3m1 -2v3m1 -3v2m1 -4v3m1 -1v3m1 -5v4m1 -3v3m1 -2v2m1 -4v4m1 -3v3m1 -4v3m1 -2v3m1 -2v3m1 -3v2m1 -3v4m1 -5v2m1 -1v2m1 -1v3m1 -4v3m1 -2v3m1 -3v3m1 -4v2m1 -1v3m1 -5v2m1 0v3m1 -4v2m1 -2v3m1 -3v2m1 -2v3m1 -3v2m1 -2v2m1 -2v3m1 -3v2m1 -3v3m1 -3v4m1 -3v2m1 -2v3m1 -3v2m1 -3v4m1 -3v3m1 -3v2m1 -3v3m1 -1v2m1 -3v3m1 -3v2m1 -1v2m1 -3v3m1 -3v4m1 -5v3m1 -4v2m1 0v3m1 -3v3m1 -2v3m1 -4v2m1 -2v3m1 -4v3m1 -2v2m1 -2v3m1 -3v3m1 -3v4m1 -4v2m1 -2v2m1 -2v3m1 -2v2m1 -3v4m1 -4v2m1 -1v4m1 -5v2m1 -1v3m1 -3v2m1 -3v3m1 -2v3m1 -3v3m1 -4v3m1 -3v2m1 -2v3m1 -3v3m1 -3v3m1 -2v4m1 -5v3m1 -2v3m1 -4v3m1 -3v3m1 -3v3m1 -3v3m1 -3v3m1 -3v3m1 -3v3m1 -3v3m1 -4v2m1 -1v3m1 -2v3m1 -4v3m1 -2v3m1 -4v2m1 -1v3m1 -4v2m1 -3v3m1 -2v3m1 -2v2m1 -4v3m1 -2v3m1 -3v3m1 -4v3m1 -2v3m1 -3v2m1 -2v2m1 -2v3m1 -4v3m1 -2v2m1 -2v2m1 -2v3m1 -3v2m1 -3v4m1 -2v3m1 -4v3m1 -4v3m1 -2v3m1 -2v3m1 -3v2m1 -3v2m1 -1v2m1 -2v3m1 -5v2m1 -3v3m1 -2v3m1 -2v2m1 -1v2m1 -3v2m1 -1v3m1 -4v3m1 -4v3m1 -1v3m1 -3v2m1 -2v2m1 -3v2m1 -1v3m1 -4v3m1 -3v3m1 -3v4m1 -4v3m1 -2v3m1 -3v3m1 -4v3m1 -2v2m1 -2v3m1 -4v3m1 -2v2m1 -3v2m1 -2v3m1 -3v3m1 -2v3m1 -4v3m1 -3v3m1 -3v4m1 -3v3m1 -4v3m1 -3v3m1 -3v4m1 -3v2m1 -2v3m1 -4v3m1 -2v2m1 -2v3m1 -4v4m1 -4v2m1 -1v3m1 -3v2m1 -3v3m1 -3v4m1 -4v3m1 -2v3m1 -3v3m1 -3v3m1 -3v4m1 -4v2m1 -3v3m1 -2v2m1 -3v3m1 -3v3m1 -3v3m1 -2v3m1 -4v3m1 -1v3m1 -4v2m1 -2v3m1 -4v2m1 -1v3m1 -3v3m1 -4v3m1 -2v3m1 -3v2m1 -3v2m1 -1v3m1 -3v3m1 -3v3m1 -4v3m1 -3v3m1 -2v2m1 -2v3m1 -3v3m1 -4v2m1 -2v2m1 -2v3m1 -2v3m1 -4v3m1 -3v3m1 -3v3m1 -4v3m1 -2v3m1 -2v3m1 -3v2m1 -3v2m1 -2v2m1 -2v2m1 -2v2m1 -1v3m1 -3v4m1 -5v3m1 -3v3m1 -3v3m1 -2v3m1 -4v3m1 -2v3m1 -3v2m1 -2v2m1 -2v3m1 -3v3m1 -3v3m1 -4v4m1 -3v3m1 -4v3m1 -3v3m1 -3v2m1 -2v2m1 -2v2m1 -2v3m1 -2v3m1 -4v3m1 -2v2m1 -2v2m1 -2v2m1 -2v2m1 -2v2m1 -1v3m1 -5v3m1 -2v3m1 -4v3m1 -3v2m1 -2v3m1 -2v3m1 -3v3m1 -3v3m1 -3v3m1 -3v2m1 -2v2m1 -2v3m1 -4v3m1 -3v3m1 -3v3m1 -3v3m1 -4v2m1 -1v4m1 -4v2m1 -2v2m1 -1v3m1 -3v3m1 -2v3m1 -5v2m1 -1v3m1 -3v3m1 -4v3m1 -2v3m1 -3v2m1 -3v3m1 -2v3m1 -4v3m1 -2v3m1 -3v3m1 -2v3m1 -5v3m1 -3v3m1 -3v2m1 -2v3m1 -1v3m1 -3v3m1 -5v2m1 -1v2m1 -2v3m1 -2v3m1 -5v3m1 -2v2m1 -3v2m1 -2v2m1 -1v4m1 -5v3m1 -3v3m1 -2v3m1 -4v3m1 -2v2m1 -2v2m1 -3v3m1 -1v3m1 -6v2m1 0v3m1 -3v2m1 -1v3m1 -5v3m1 -3v2m1 -2v3m1 -3v3m1 -3v3m1 -2v3m1 -4v3m1 -2v3m1 -3v3m1 -4v4m1 -3v3m1 -4v3m1 -2v2m1 -2v2m1 -2v3m1 -4v3m1 -4v2m1 1v4m1 -6v3m1 -2v3m1 -4v3m1 -2v2m1 -4v3m1 -1v3m1 -4v3m1 -3v4m1 -4v2m1 -2v3m1 -3v2m1 -1v3m1 -4v3m1 -2v3m1 -4v3m1 -2v4m1 -6v3m1 -3v3m1 -2v4m1 -3v3m1 -3v3m1 -3v3m1 -4v2m1 -1v3m1 -4v3m1 -4v2m1 -1v2m1 -2v2m1 -2v2m1 -2v3m1 -3v3m1 -3v3m1 -2v3m1 -4v4m1 -4v3m1 -3v3m1 -2v3m1 -3v3m1 -3v3m1 -3v3m1 -4v3m1 -3v3m1 -3v2m1 -2v3m1 -3v4m1 -4v4m1 -4v2m1 -2v3m1 -3v3m1 -3v2m1 -3v2m1 0v3m1 -4v3m1 -3v3m1 -3v3m1 -3v3m1 -3v4m1 -3v3m1 -4v3m1 -3v3m1 -3v3m1 -3v3m1 -4v2m1 -2v2m1 -1v4m1 -3v3m1 -4v3m1 -4v2m1 0v2m1 -3v2m1 -3v3m1 -3v3m1 -3v2m1 0v2m1 -3v3m1 -3v3m1 -3v3m1 -3v3m1 -4v2m1 0v2m1 -1v3m1 -4v3m1 -5v3m1 -2v3m1 -3v4m1 -5v2m1 -1v3m1 -3v2m1 -2v3m1 -3v3m1 -2v3m1 -5v2m1 -1v2m1 -2v3m1 -4v3m1 -1v3m1 -3v3m1 -5v3m1 -1v2m1 -3v3m1 -3v3m1 -2v4m1 -5v3m1 -3v3m1 -3v3m1 -3v3m1 -3v2m1 -2v3m1 -2v2m1 -2v3m1 -5v2m1 -2v3m1 -2v3m1 -3v3m1 -4v4m1 -4v3m1 -2v3m1 -3v3m1 -3v2m1 -3v3m1 -2v2m1 -1v2m1 -3v3m1 -4v3m1 -2v3m1 -4v4m1 -4v2m1 -1v3m1 -3v3m1 -2v3m1 -4v3m1 -3v4m1 -4v3m1 -3v3m1 -3v3m1 -3v3m1 -3v4m1 -5v3m1 -3v3m1 -2v4m1 -4v3m1 -4v3m1 -2v3m1 -3v2m1 -1v3m1 -5v2m1 -2v3m1 -2v3m1 -3v3m1 -2v3m1 -4v2m1 -3v3m1 -2v2m1 -2v2m1 -2v3m1 -4v3m1 -3v2m1 -1v3m1 -3v4m1 -4v2m1 -2v2m1 -2v2m1 -1v4m1 -5v3m1 -4v3m1 -2v2m1 -2v3m1 -3v3m1 -3v3m1 -3v3m1 -3v3m1 -3v3m1 -3v2m1 -2v3m1 -4v3m1 -2v3m1 -3v3m1 -3v2m1 -2v2m1 -1v3m1 -4v3m1 -3v3m1 -3v4m1 -3v3m1 -4v2m1 -3v3m1 -1v2m1 -2v2m1 -3v2m1 -2v3m1 -4v3m1 -1v3m1 -5v3m1 -2v3m1 -4v3m1 -2v3m1 -2v3m1 -4v2m1 -2v2m1 -2v2m1 -2v2m1 -1v3m1 -4v3m1 -4v2m1 -1v2m1 -2v2m1 -2v4m1 -4v2m1 -3v4m1 -2v3m1 -4v3m1 -3v3m1 -3v3m1 -3v3m1 -4v3m1 -1v3m1 -5v3m1 -2v3m1 -2v4m1 -5v2m1 -2v3m1 -3v3m1 -2v3m1 -5v2m1 -2v2m1 0v2m1 -2v3m1 -5v2m1 -1v4m1 -3v4m1 -5v3m1 -3v3m1 -3v2m1 -2v3m1 -4v3m1 -2v3m1 -3v3m1 -3v3m1 -3v3m1 -3v2m1 -2v2m1 -3v2m1 0v2m1 -3v2m1 -2v3m1 -3v4m1 -3v4m1 -5v3m1 -3v3m1 -4v3m1 -2v3m1 -2v3m1 -5v2m1 0v2m1 -3v2m1 -2v3m1 -3v3m1 -4v3m1 -2v3m1 -3v3m1 -3v3m1 -3v3m1 -3v3m1 -4v3m1 -3v4m1 -3v3m1 -4v2m1 -1v3m1 -3v3m1 -3v2m1 -4v3m1 0v3m1 -5v2m1 -1v2m1 -2v3m1 -3v3m1 -3v3m1 -4v3m1 -3v3m1 -2v3m1 -4v3m1 -2v3m1 -3v2m1 -2v3m1 -3v2m1 -3v3m1 -2v2m1 -3v3m1 -2v2m1 -2v3m1 -3v2m1 -2v3m1 -3v3m1 -4v3m1 -2v3m1 -3v2m1 -1v4m1 -5v3m1 -4v3m1 -2v3m1 -4v4m1 -2v2m1 -2v3m1 -4v3m1 -4v2m1 0v3m1 -5v2m1 -1v3m1 -3v3m1 -3v3" stroke="#949494" stroke-opacity="0.9" fill="none"/></g><path d="M66.5 673V1274.5H856" stroke="#999" fill="none"/><g fill="#f2f2f2" font-size="13" text-anchor="end" stroke="#f2f2f2"><text x="61" y="1267.1">0</text><text x="61" y="1149.3">0.2</text><text x="61" y="1031.5">0.4</text><text x="61" y="913.7">0.6</text><text x="61" y="795.9">0.8</text></g><rect x="57" y="673" width="1.3" height="5" fill="#eee"/><g fill="#f2f2f2" font-size="13" text-anchor="middle" stroke="#f2f2f2"><text x="173.5" y="1291">-6d</text><text x="287.1" y="1291">-5d</text><text x="400.8" y="1291">-4d</text><text x="514.5" y="1291">-3d</text><text x="628.2" y="1291">-2d</text><text x="741.8" y="1291">-1d</text></g><clipPath id="zc01"><rect x="0" y="0" width="856" height="1409"/></clipPath><text x="855.5" y="1291" fill="#f2f2f2" font-size="13" text-anchor="middle" clip-path="url(#zc01)" stroke="#f2f2f2">0</text><text transform="translate(34 975) rotate(-90)" fill="#f2f2f2" font-size="13" text-anchor="middle" textLength="40" lengthAdjust="spacingAndGlyphs" stroke="#f2f2f2">counts</text><rect x="76.5" y="683.5" width="341" height="62" fill="rgba(24,24,24,0.68)" stroke="#555"/><rect x="85" y="692" width="19" height="19" fill="#e377c2"/><text x="110.0" y="707" fill="#f0f0f0" font-size="13" textLength="299" lengthAdjust="spacingAndGlyphs" stroke="#f0f0f0">H0:VAC-MR_FAN4_170_1_ACC_INCHSEC [m-trend]</text><rect x="85" y="717" width="19" height="19" fill="#7f7f7f"/><text x="110.0" y="732" fill="#f0f0f0" font-size="13" textLength="299" lengthAdjust="spacingAndGlyphs" stroke="#f0f0f0">H0:VAC-MR_FAN4_170_2_ACC_INCHSEC [m-trend]</text><clipPath id="c11"><rect x="909" y="673" width="789" height="601"/></clipPath><path d="M909 1262.5H1698M909 1144.5H1698M909 1026.5H1698M909 909.5H1698M909 791.5H1698" stroke="#121212"/><path d="M909 1203.5H1698M909 1085.5H1698M909 968.5H1698M909 850.5H1698M909 732.5H1698" stroke="#0c0c0c"/><path d="M909 673.5H1698" stroke="#1f1f1f"/><path d="M1015.5 673V1274M1129.5 673V1274M1242.5 673V1274M1356.5 673V1274M1470.5 673V1274M1583.5 673V1274M1697.5 673V1274" stroke="#1c1c1c"/><g clip-path="url(#c11)"><path d="M909.5 1030v9m1 -10v8m1 -8v8m1 -7v9m1 -8v7m1 -10v9m1 -7v7m1 -6v8m1 -8v7m1 -8v7m1 -7v8m1 -8v7m1 -9v10m1 -9v8m1 -6v9m1 -10v7m1 -8v9m1 -7v7m1 -10v9m1 -7v8m1 -8v8m1 -8v7m1 -7v9m1 -9v7m1 -7v7m1 -8v8m1 -8v9m1 -8v7m1 -8v9m1 -8v7m1 -7v9m1 -9v10m1 -11v8m1 -7v7m1 -7v7m1 -9v9m1 -7v9m1 -10v9m1 -11v12m1 -10v11m1 -10v7m1 -8v8m1 -7v7m1 -8v11m1 -11v10m1 -9v8m1 -9v8m1 -7v9m1 -9v8m1 -9v8m1 -8v8m1 -8v8m1 -11v11m1 -8v8m1 -7v8m1 -8v7m1 -9v10m1 -8v8m1 -8v8m1 -8v8m1 -8v9m1 -10v9m1 -9v10m1 -9v7m1 -7v10m1 -10v10m1 -10v7m1 -7v8m1 -8v9m1 -9v8m1 -9v9m1 -9v9m1 -10v10m1 -8v9m1 -11v9m1 -8v9m1 -9v8m1 -8v9m1 -9v7m1 -7v9m1 -8v7m1 -7v8m1 -8v7m1 -8v9m1 -8v7m1 -8v9m1 -9v9m1 -8v8m1 -8v7m1 -7v7m1 -10v11m1 -8v8m1 -8v10m1 -10v8m1 -9v8m1 -7v8m1 -8v8m1 -9v9m1 -12v11m1 -7v8m1 -8v10m1 -10v8m1 -8v10m1 -13v12m1 -9v7m1 -7v8m1 -8v8m1 -8v10m1 -10v8m1 -9v8m1 -8v8m1 -7v7m1 -7v8m1 -8v8m1 -10v11m1 -10v9m1 -8v7m1 -8v8m1 -7v7m1 -7v8m1 -8v8m1 -8v8m1 -8v7m1 -7v9m1 -9v8m1 -11v11m1 -8v10m1 -13v11m1 -8v8m1 -8v8m1 -8v8m1 -8v7m1 -7v8m1 -10v10m1 -8v7m1 -7v9m1 -8v8m1 -9v8m1 -7v7m1 -7v7m1 -9v9m1 -9v10m1 -9v9m1 -9v7m1 -8v9m1 -8v8m1 -10v10m1 -7v7m1 -8v7m1 -6v9m1 -9v7m1 -9v11m1 -10v8m1 -8v8m1 -7v7m1 -7v7m1 -7v8m1 -8v9m1 -9v7m1 -7v7m1 -7v10m1 -12v9m1 -7v9m1 -9v7m1 -8v9m1 -8v9m1 -11v11m1 -9v8m1 -9v8m1 -7v9m1 -9v7m1 -9v10m1 -9v9m1 -8v8m1 -12v13m1 -9v7m1 -7v8m1 -8v8m1 -9v8m1 -7v8m1 -8v8m1 -8v7m1 -7v8m1 -8v8m1 -9v8m1 -12v13m1 -9v8m1 -7v7m1 -7v8m1 -8v10m1 -11v7m1 -6v7m1 -8v8m1 -9v10m1 -9v7m1 -7v8m1 -8v8m1 -8v7m1 -6v7m1 -8v7m1 -7v8m1 -8v9m1 -9v9m1 -12v10m1 -6v7m1 -12v13m1 -9v10m1 -10v8m1 -7v8m1 -8v8m1 -9v8m1 -7v7m1 -8v8m1 -8v8m1 -7v7m1 -7v9m1 -10v10m1 -10v10m1 -12v11m1 -8v7m1 -7v7m1 -12v12m1 -8v8m1 -7v8m1 -12v12m1 -8v7m1 -7v10m1 -10v9m1 -10v8m1 -8v8m1 -7v7m1 -7v8m1 -9v8m1 -7v7m1 -8v8m1 -8v8m1 -8v8m1 -7v7m1 -7v8m1 -8v7m1 -8v10m1 -11v10m1 -9v8m1 -7v9m1 -9v7m1 -8v9m1 -11v10m1 -9v9m1 -7v9m1 -12v10m1 -8v8m1 -9v12m1 -10v7m1 -8v9m1 -12v13m1 -9v8m1 -8v7m1 -7v8m1 -8v7m1 -8v9m1 -12v10m1 -6v9m1 -11v11m1 -11v9m1 -8v8m1 -7v7m1 -8v8m1 -7v7m1 -8v9m1 -9v7m1 -8v9m1 -8v8m1 -7v8m1 -9v10m1 -10v8m1 -8v8m1 -8v7m1 -7v8m1 -8v7m1 -7v7m1 -8v10m1 -10v9m1 -8v8m1 -8v9m1 -13v13m1 -9v9m1 -10v9m1 -9v8m1 -11v11m1 -8v9m1 -8v7m1 -7v7m1 -7v8m1 -8v7m1 -11v11m1 -7v7m1 -8v8m1 -10v10m1 -7v8m1 -8v8m1 -10v9m1 -8v8m1 -7v9m1 -9v7m1 -7v7m1 -7v8m1 -8v7m1 -8v8m1 -7v8m1 -8v8m1 -8v8m1 -9v10m1 -9v8m1 -9v10m1 -11v9m1 -7v7m1 -7v8m1 -9v9m1 -9v9m1 -9v9m1 -9v8m1 -9v11m1 -9v8m1 -8v7m1 -7v7m1 -8v8m1 -8v9m1 -9v8m1 -8v8m1 -12v12m1 -8v8m1 -11v12m1 -9v10m1 -9v8m1 -10v10m1 -8v8m1 -8v7m1 -10v9m1 -6v7m1 -8v8m1 -10v10m1 -7v8m1 -8v7m1 -7v7m1 -8v9m1 -8v9m1 -10v7m1 -8v11m1 -13v10m1 -6v8m1 -9v10m1 -10v8m1 -8v7m1 -9v10m1 -8v7m1 -6v9m1 -10v7m1 -6v7m1 -7v7m1 -7v8m1 -13v12m1 -8v8m1 -7v7m1 -8v8m1 -10v12m1 -11v9m1 -7v7m1 -8v8m1 -8v8m1 -9v9m1 -8v8m1 -8v9m1 -8v7m1 -8v8m1 -7v8m1 -9v7m1 -8v8m1 -7v9m1 -9v7m1 -6v7m1 -7v8m1 -9v9m1 -9v8m1 -8v8m1 -9v10m1 -9v8m1 -8v8m1 -10v10m1 -9v10m1 -9v9m1 -9v8m1 -12v14m1 -10v8m1 -8v9m1 -9v7m1 -8v12m1 -12v10m1 -10v9m1 -9v9m1 -7v7m1 -8v8m1 -9v8m1 -7v7m1 -7v8m1 -7v7m1 -7v8m1 -9v8m1 -8v10m1 -10v8m1 -8v8m1 -8v7m1 -8v10m1 -9v8m1 -8v8m1 -8v9m1 -11v11m1 -9v8m1 -7v8m1 -11v11m1 -9v8m1 -8v9m1 -9v9m1 -12v11m1 -8v8m1 -7v8m1 -9v9m1 -12v12m1 -9v8m1 -7v9m1 -9v7m1 -8v8m1 -8v7m1 -6v7m1 -7v8m1 -10v9m1 -8v8m1 -7v7m1 -9v9m1 -9v11m1 -10v8m1 -9v11m1 -10v9m1 -9v8m1 -8v8m1 -8v9m1 -9v8m1 -7v8m1 -8v7m1 -7v7m1 -7v7m1 -8v8m1 -7v7m1 -7v8m1 -9v8m1 -8v8m1 -7v7m1 -8v10m1 -10v8m1 -8v9m1 -9v8m1 -8v8m1 -7v8m1 -9v7m1 -6v8m1 -8v8m1 -10v9m1 -8v9m1 -11v11m1 -11v10m1 -8v8m1 -7v7m1 -7v7m1 -7v9m1 -11v10m1 -8v9m1 -9v9m1 -10v8m1 -7v7m1 -8v8m1 -8v8m1 -7v7m1 -7v9m1 -12v10m1 -7v8m1 -9v8m1 -9v10m1 -8v7m1 -7v8m1 -8v7m1 -8v8m1 -7v9m1 -13v12m1 -12v11m1 -7v8m1 -8v7m1 -8v9m1 -9v9m1 -9v8m1 -8v9m1 -8v7m1 -9v11m1 -9v9m1 -11v9m1 -9v10m1 -8v8m1 -8v8m1 -12v11m1 -8v9m1 -8v7m1 -8v8m1 -7v7m1 -8v9m1 -9v8m1 -10v10m1 -8v9m1 -8v8m1 -9v9m1 -9v8m1 -7v7m1 -8v10m1 -9v8m1 -11v11m1 -9v8m1 -7v9m1 -11v11m1 -9v7m1 -6v7m1 -8v8m1 -9v9m1 -9v8m1 -11v12m1 -9v9m1 -9v10m1 -9v8m1 -8v8m1 -8v8m1 -8v7m1 -7v7m1 -8v8m1 -8v8m1 -8v9m1 -8v8m1 -10v9m1 -7v8m1 -9v8m1 -8v9m1 -8v8m1 -9v8m1 -8v9m1 -8v7m1 -7v7m1 -7v7m1 -8v7m1 -7v8m1 -8v8m1 -11v11m1 -8v9m1 -8v7m1 -8v9m1 -8v8m1 -10v9m1 -11v13m1 -9v9m1 -9v7m1 -7v7m1 -7v7m1 -7v8m1 -8v7m1 -8v10m1 -9v9m1 -9v7m1 -7v7m1 -8v9m1 -9v8m1 -8v9m1 -10v9m1 -7v8m1 -9v10m1 -9v7m1 -8v8m1 -7v7m1 -7v8m1 -8v8m1 -8v7m1 -7v7m1 -8v9m1 -9v10m1 -10v9m1 -9v10m1 -13v11m1 -8v8m1 -8v9m1 -9v9m1 -9v7m1 -6v8m1 -13v13m1 -10v10m1 -8v8m1 -9v9m1 -8v8m1 -10v8m1 -7v8m1 -9v9m1 -11v11m1 -8v8m1 -7v7m1 -8v8m1 -8v7m1 -8v9m1 -7v7m1 -7v7m1 -9v10m1 -12v11m1 -7v7m1 -8v8m1 -7v7m1 -7v7m1 -7v7m1 -7v7m1 -7v9m1 -10v7m1 -7v9m1 -9v9m1 -9v9m1 -8v7m1 -7v7m1 -8v8m1 -8v8m1 -8v8m1 -10v12m1 -9v9m1 -9v7m1 -7v8m1 -8v7m1 -12v14m1 -13v11m1 -8v8m1 -10v9m1 -8v8m1 -7v8m1 -8v7m1 -7v9m1 -9v9m1 -9v8m1 -8v7m1 -8v10m1 -9v7m1 -7v7m1 -7v7m1 -7v8m1 -11v12m1 -10v9m1 -8v7m1 -8v9m1 -9v8m1 -9v10m1 -9v8m1 -8v8m1 -9v10m1 -8v8m1 -10v11m1 -9v9m1 -9v8m1 -8v7m1 -7v8m1 -12v13m1 -9v9m1 -10v9m1 -8v7m1 -8v9m1 -10v9m1 -7v8m1 -8v8m1 -12v12m1 -9v7m1 -6v9m1 -9v7m1 -9v9m1 -10v11m1 -8v9m1 -10v9m1 -10v9m1 -8v9m1 -9v9m1 -11v10m1 -7v8m1 -9v8m1 -7v7m1 -8v9m1 -9v8m1 -8v8m1 -9v9m1 -7v7m1 -8v7m1 -6v9m1 -9v7m1 -8v9m1 -8v7m1 -7v8m1 -8v7m1 -9v9m1 -7v8m1 -9v10m1 -9v7m1 -7v7m1 -8v9m1 -8v7m1 -8v10m1 -9v8m1 -8v9m1 -10v8m1 -7v8m1 -8v7m1 -10v13m1 -10v9m1 -9v7m1 -8v8m1 -8v11m1 -12v9m1 -8v8m1 -7v8m1 -9v8m1 -8v8m1 -10v10m1 -7v8m1 -8v9m1 -10v8m1 -8v9m1 -8v7m1 -8v8m1 -8v9m1 -9v8m1 -7v8m1 -8v7m1 -7v8m1 -9v8m1 -7v7m1 -7v9m1 -9v7m1 -8v9m1 -8v9m1 -10v9m1 -9v8m1 -8v9m1 -12v11m1 -10v10m1 -7v7m1 -7v7m1 -8v8m1 -8v10m1 -10v7m1 -6v7m1 -9v10m1 -8v8m1 -12v13m1 -10v8m1 -8v8m1 -9v10m1 -13v11m1 -8v10m1 -9v8m1 -8v7m1 -6v9m1 -10v11m1 -10v9m1 -10v8m1 -8v8m1 -7v7m1 -7v9m1 -10v10m1 -11v10m1 -9v8m1 -8v9m1 -9v7m1 -6v7m1 -7v7m1 -9v8m1 -7v7m1 -6v7m1 -7v8m1 -12v12m1 -8v9m1 -11v10m1 -9v9m1 -9v10m1 -9v7m1 -7v8m1 -8v7m1 -8v9" stroke="#bcbd22" stroke-opacity="0.90" fill="none"/><path d="M909.5 1031v4m1 -3v4m1 -4v3m1 -5v6m1 -4v5m1 -6v4m1 -3v3m1 -3v4m1 -4v4m1 -4v5m1 -5v5m1 -5v4m1 -4v4m1 -5v5m1 -4v4m1 -4v4m1 -4v4m1 -7v7m1 -5v4m1 -3v5m1 -5v4m1 -5v4m1 -5v5m1 -3v6m1 -7v4m1 -3v3m1 -4v4m1 -4v5m1 -4v4m1 -5v5m1 -4v3m1 -4v5m1 -6v6m1 -4v4m1 -5v4m1 -3v5m1 -6v4m1 -3v3m1 -4v5m1 -4v3m1 -3v3m1 -4v5m1 -5v4m1 -3v4m1 -4v3m1 -4v5m1 -5v5m1 -5v4m1 -3v3m1 -3v3m1 -3v4m1 -5v4m1 -3v3m1 -4v4m1 -3v4m1 -4v3m1 -4v4m1 -4v5m1 -5v4m1 -3v4m1 -4v4m1 -4v3m1 -5v5m1 -4v5m1 -5v4m1 -4v5m1 -4v4m1 -4v3m1 -4v4m1 -3v4m1 -4v4m1 -4v4m1 -5v3m1 -4v5m1 -4v3m1 -4v5m1 -4v4m1 -4v4m1 -5v5m1 -4v5m1 -5v5m1 -5v3m1 -3v4m1 -4v4m1 -6v6m1 -4v5m1 -5v5m1 -4v4m1 -5v5m1 -4v4m1 -5v4m1 -3v5m1 -7v5m1 -3v4m1 -5v6m1 -5v4m1 -4v3m1 -3v4m1 -4v4m1 -4v5m1 -6v4m1 -3v4m1 -4v4m1 -5v4m1 -4v5m1 -5v4m1 -4v5m1 -5v6m1 -6v4m1 -3v4m1 -4v4m1 -5v5m1 -5v5m1 -5v4m1 -3v4m1 -4v4m1 -5v4m1 -4v5m1 -4v5m1 -6v4m1 -3v4m1 -4v4m1 -5v4m1 -4v4m1 -4v5m1 -4v4m1 -5v5m1 -4v4m1 -4v4m1 -5v4m1 -3v4m1 -4v4m1 -5v6m1 -6v5m1 -4v4m1 -4v5m1 -6v4m1 -3v5m1 -5v4m1 -4v4m1 -4v4m1 -4v4m1 -4v4m1 -4v4m1 -4v4m1 -4v4m1 -4v4m1 -4v3m1 -4v5m1 -5v4m1 -4v5m1 -4v4m1 -4v4m1 -4v4m1 -4v3m1 -4v5m1 -4v4m1 -4v4m1 -4v4m1 -3v5m1 -5v4m1 -5v4m1 -4v4m1 -4v4m1 -4v3m1 -3v5m1 -5v4m1 -4v4m1 -4v3m1 -3v3m1 -3v3m1 -3v5m1 -5v4m1 -5v5m1 -4v5m1 -4v3m1 -4v4m1 -4v4m1 -4v4m1 -4v6m1 -6v5m1 -5v4m1 -4v4m1 -3v4m1 -5v3m1 -3v4m1 -5v6m1 -5v4m1 -4v4m1 -4v4m1 -5v5m1 -4v6m1 -6v4m1 -4v3m1 -3v4m1 -5v5m1 -4v4m1 -4v5m1 -5v4m1 -4v4m1 -4v4m1 -5v4m1 -3v4m1 -4v4m1 -4v4m1 -5v4m1 -3v5m1 -5v5m1 -6v5m1 -4v3m1 -3v5m1 -6v5m1 -4v4m1 -4v4m1 -4v3m1 -3v5m1 -6v5m1 -4v4m1 -4v4m1 -4v5m1 -5v5m1 -4v4m1 -5v4m1 -4v5m1 -5v4m1 -4v5m1 -6v5m1 -4v5m1 -5v4m1 -4v4m1 -4v4m1 -4v4m1 -5v4m1 -3v3m1 -3v3m1 -3v3m1 -3v3m1 -4v5m1 -4v3m1 -4v4m1 -4v5m1 -4v3m1 -3v4m1 -4v4m1 -4v5m1 -7v5m1 -3v5m1 -5v4m1 -4v3m1 -3v3m1 -3v4m1 -5v5m1 -4v4m1 -4v3m1 -3v5m1 -6v5m1 -4v3m1 -3v4m1 -5v5m1 -4v4m1 -4v4m1 -5v6m1 -7v6m1 -4v3m1 -3v4m1 -4v4m1 -4v3m1 -3v4m1 -6v5m1 -4v4m1 -3v4m1 -5v4m1 -4v5m1 -6v7m1 -5v3m1 -3v4m1 -4v3m1 -3v4m1 -5v5m1 -5v4m1 -4v5m1 -4v4m1 -4v4m1 -5v4m1 -4v4m1 -5v5m1 -4v3m1 -3v5m1 -5v4m1 -4v5m1 -4v4m1 -4v3m1 -4v5m1 -6v5m1 -3v3m1 -3v4m1 -5v4m1 -5v6m1 -4v4m1 -5v4m1 -3v4m1 -5v5m1 -5v4m1 -3v5m1 -6v4m1 -4v4m1 -4v4m1 -3v3m1 -4v4m1 -3v3m1 -3v3m1 -4v4m1 -4v4m1 -3v3m1 -4v4m1 -4v4m1 -4v4m1 -4v5m1 -5v4m1 -4v4m1 -4v4m1 -4v4m1 -5v5m1 -4v4m1 -4v4m1 -4v5m1 -6v5m1 -4v5m1 -5v4m1 -5v5m1 -4v4m1 -4v4m1 -5v5m1 -4v4m1 -4v4m1 -4v4m1 -3v3m1 -4v4m1 -3v4m1 -4v4m1 -4v4m1 -5v4m1 -4v5m1 -5v4m1 -4v4m1 -4v4m1 -3v4m1 -6v5m1 -4v4m1 -4v4m1 -4v4m1 -5v4m1 -3v4m1 -4v5m1 -5v4m1 -4v4m1 -4v4m1 -5v5m1 -4v4m1 -5v5m1 -4v4m1 -4v4m1 -4v5m1 -5v4m1 -4v4m1 -4v4m1 -4v5m1 -5v3m1 -3v3m1 -3v5m1 -5v5m1 -5v4m1 -4v4m1 -5v5m1 -4v4m1 -4v4m1 -4v4m1 -4v4m1 -5v5m1 -5v4m1 -3v4m1 -4v5m1 -5v4m1 -4v4m1 -5v5m1 -5v5m1 -5v6m1 -6v5m1 -5v5m1 -4v4m1 -4v4m1 -4v5m1 -5v4m1 -4v3m1 -3v5m1 -6v4m1 -3v4m1 -4v4m1 -5v5m1 -5v6m1 -5v4m1 -4v4m1 -4v3m1 -4v5m1 -4v4m1 -5v4m1 -3v3m1 -4v4m1 -3v5m1 -5v5m1 -5v4m1 -4v4m1 -4v4m1 -4v4m1 -4v5m1 -5v3m1 -3v4m1 -3v4m1 -5v6m1 -6v4m1 -4v4m1 -4v4m1 -4v5m1 -5v5m1 -5v3m1 -3v5m1 -6v5m1 -4v4m1 -4v5m1 -5v4m1 -4v3m1 -3v4m1 -4v4m1 -5v5m1 -4v4m1 -5v5m1 -5v5m1 -4v4m1 -4v4m1 -5v5m1 -4v4m1 -4v4m1 -4v4m1 -4v3m1 -3v4m1 -5v5m1 -4v4m1 -5v5m1 -5v5m1 -4v5m1 -6v4m1 -3v3m1 -3v4m1 -4v4m1 -5v5m1 -5v5m1 -4v4m1 -4v4m1 -4v5m1 -5v4m1 -4v4m1 -5v5m1 -4v4m1 -4v4m1 -4v4m1 -4v3m1 -2v4m1 -5v5m1 -5v3m1 -3v4m1 -5v5m1 -5v4m1 -3v4m1 -3v4m1 -5v4m1 -4v4m1 -4v4m1 -3v4m1 -4v3m1 -4v5m1 -5v4m1 -5v6m1 -4v4m1 -5v4m1 -3v4m1 -6v5m1 -4v5m1 -6v6m1 -4v4m1 -4v4m1 -5v6m1 -5v4m1 -4v5m1 -5v4m1 -5v4m1 -5v5m1 -4v5m1 -4v4m1 -5v4m1 -4v5m1 -6v5m1 -4v5m1 -5v5m1 -5v5m1 -5v4m1 -4v4m1 -3v3m1 -3v4m1 -5v4m1 -4v5m1 -5v4m1 -3v3m1 -3v4m1 -5v4m1 -4v5m1 -4v4m1 -5v5m1 -4v3m1 -3v4m1 -5v4m1 -3v4m1 -4v4m1 -4v4m1 -5v5m1 -4v5m1 -5v4m1 -4v4m1 -5v4m1 -3v4m1 -4v4m1 -4v4m1 -5v4m1 -4v4m1 -4v5m1 -4v3m1 -4v5m1 -5v4m1 -4v4m1 -4v4m1 -4v4m1 -4v4m1 -4v5m1 -5v5m1 -4v4m1 -6v7m1 -6v3m1 -2v4m1 -4v4m1 -4v4m1 -4v4m1 -5v4m1 -3v3m1 -4v3m1 -3v4m1 -4v4m1 -4v5m1 -5v6m1 -6v5m1 -4v3m1 -4v4m1 -4v5m1 -4v4m1 -4v3m1 -4v4m1 -3v4m1 -5v4m1 -3v4m1 -4v4m1 -6v6m1 -5v4m1 -4v4m1 -3v3m1 -3v4m1 -4v3m1 -5v5m1 -3v3m1 -3v4m1 -5v4m1 -4v3m1 -4v4m1 -4v6m1 -5v5m1 -5v4m1 -4v4m1 -4v4m1 -3v3m1 -4v3m1 -5v6m1 -5v4m1 -3v4m1 -4v3m1 -3v4m1 -3v4m1 -5v4m1 -4v4m1 -3v4m1 -5v4m1 -4v4m1 -3v4m1 -6v5m1 -5v7m1 -6v4m1 -4v4m1 -4v4m1 -4v5m1 -5v4m1 -4v4m1 -5v6m1 -5v5m1 -5v4m1 -4v3m1 -3v4m1 -3v4m1 -6v5m1 -4v5m1 -4v4m1 -5v4m1 -3v4m1 -5v4m1 -4v4m1 -6v6m1 -4v4m1 -4v4m1 -3v3m1 -4v4m1 -4v3m1 -3v4m1 -4v5m1 -5v4m1 -4v5m1 -5v4m1 -5v5m1 -4v4m1 -5v5m1 -4v3m1 -3v4m1 -6v6m1 -5v5m1 -4v3m1 -4v5m1 -4v4m1 -5v6m1 -7v5m1 -3v4m1 -4v4m1 -4v3m1 -5v5m1 -4v5m1 -5v5m1 -5v4m1 -4v5m1 -4v4m1 -6v6m1 -5v5m1 -5v4m1 -4v4m1 -4v5m1 -4v4m1 -5v4m1 -3v3m1 -4v7m1 -6v3m1 -4v4m1 -3v3m1 -5v6m1 -6v6m1 -4v4m1 -4v4m1 -5v4m1 -3v5m1 -6v4m1 -3v4m1 -4v4m1 -5v5m1 -5v4m1 -5v5m1 -4v3m1 -3v4m1 -4v5m1 -4v4m1 -5v4m1 -4v5m1 -6v5m1 -4v6m1 -5v4m1 -6v5m1 -4v4m1 -4v4m1 -5v4m1 -3v4m1 -5v5m1 -4v4m1 -4v4m1 -4v4m1 -4v4m1 -4v4m1 -4v5m1 -5v4m1 -5v6m1 -5v4m1 -4v3m1 -3v5m1 -5v5m1 -6v5m1 -4v5m1 -5v4m1 -4v4m1 -4v4m1 -4v4m1 -3v3m1 -4v5m1 -6v5m1 -4v6m1 -6v5m1 -5v4m1 -4v3m1 -3v4m1 -4v5m1 -5v5m1 -5v4m1 -5v6m1 -5v5m1 -5v4m1 -5v5m1 -4v5m1 -6v5m1 -4v4m1 -4v5m1 -5v5m1 -5v5m1 -5v3m1 -4v5m1 -5v6m1 -6v6m1 -5v3m1 -3v5m1 -5v4m1 -4v4m1 -4v6m1 -7v5m1 -4v5m1 -6v5m1 -5v4m1 -3v5m1 -5v3m1 -3v4m1 -4v4m1 -4v3m1 -3v4m1 -5v4m1 -3v5m1 -5v4m1 -4v4m1 -4v4m1 -4v5m1 -5v4m1 -5v5m1 -4v3m1 -3v4m1 -4v4m1 -5v5m1 -5v5m1 -4v3m1 -3v4m1 -4v4m1 -5v5m1 -4v5m1 -5v4m1 -4v4m1 -4v4m1 -4v4m1 -4v4m1 -4v4m1 -4v5m1 -6v5m1 -4v4m1 -5v5m1 -5v6m1 -5v4m1 -3v4m1 -5v5m1 -4v4m1 -5v5m1 -5v4m1 -5v6m1 -4v4m1 -4v3m1 -4v4m1 -4v6" stroke="#bcbd22" fill="none"/><rect x="909" y="1023" width="789" height="19" fill="url(#sp1)"/><path d="M909.5 1172v30m1 -27v27m1 -33v34m1 -28v28m1 -30v30m1 -29v28m1 -37v38m1 -34v33m1 -34v35m1 -32v31m1 -30v30m1 -32v33m1 -32v31m1 -33v33m1 -31v31m1 -35v35m1 -32v32m1 -37v38m1 -30v31m1 -30v28m1 -28v29m1 -35v34m1 -30v31m1 -35v34m1 -31v31m1 -32v32m1 -37v37m1 -34v34m1 -29v29m1 -26v27m1 -27v26m1 -28v28m1 -27v27m1 -26v26m1 -32v31m1 -24v24m1 -24v25m1 -30v30m1 -27v27m1 -30v31m1 -27v25m1 -25v27m1 -27v25m1 -23v24m1 -29v29m1 -25v24m1 -27v28m1 -31v30m1 -27v28m1 -27v26m1 -27v28m1 -29v28m1 -29v29m1 -30v30m1 -30v30m1 -31v32m1 -28v29m1 -30v28m1 -24v25m1 -25v24m1 -25v25m1 -26v26m1 -28v28m1 -27v27m1 -33v33m1 -32v33m1 -31v30m1 -34v35m1 -28v27m1 -27v27m1 -25v24m1 -34v35m1 -27v27m1 -26v26m1 -28v28m1 -32v32m1 -31v32m1 -30v29m1 -25v26m1 -30v30m1 -25v24m1 -30v31m1 -30v30m1 -25v24m1 -29v29m1 -24v25m1 -29v29m1 -28v28m1 -28v29m1 -28v27m1 -29v30m1 -28v27m1 -29v28m1 -27v29m1 -26v25m1 -28v28m1 -28v28m1 -30v30m1 -25v25m1 -25v25m1 -26v26m1 -34v35m1 -25v25m1 -25v25m1 -25v24m1 -25v26m1 -28v28m1 -26v25m1 -24v26m1 -29v28m1 -27v27m1 -26v26m1 -27v27m1 -27v26m1 -28v29m1 -32v32m1 -35v34m1 -30v30m1 -27v27m1 -26v27m1 -27v26m1 -28v28m1 -29v29m1 -27v27m1 -26v26m1 -28v28m1 -32v32m1 -29v29m1 -30v30m1 -33v34m1 -28v28m1 -27v26m1 -25v26m1 -25v24m1 -30v31m1 -30v29m1 -28v29m1 -26v26m1 -29v29m1 -27v27m1 -28v27m1 -29v29m1 -29v31m1 -27v26m1 -28v27m1 -25v25m1 -31v31m1 -27v27m1 -28v29m1 -36v36m1 -36v36m1 -37v38m1 -41v41m1 -31v29m1 -34v34m1 -28v28m1 -28v28m1 -29v28m1 -27v28m1 -29v29m1 -30v31m1 -32v32m1 -30v29m1 -29v30m1 -26v25m1 -24v25m1 -27v26m1 -26v27m1 -27v26m1 -25v25m1 -25v26m1 -31v32m1 -28v27m1 -30v31m1 -28v27m1 -27v27m1 -31v31m1 -39v39m1 -32v33m1 -33v32m1 -29v31m1 -31v30m1 -26v25m1 -26v26m1 -26v25m1 -28v28m1 -26v27m1 -30v30m1 -30v30m1 -32v31m1 -35v35m1 -35v35m1 -27v27m1 -26v27m1 -28v27m1 -28v30m1 -31v29m1 -31v32m1 -30v29m1 -31v32m1 -32v31m1 -33v33m1 -30v31m1 -33v32m1 -38v38m1 -33v34m1 -33v32m1 -29v30m1 -29v29m1 -27v26m1 -24v24m1 -30v30m1 -26v26m1 -25v26m1 -28v28m1 -26v24m1 -25v27m1 -25v24m1 -28v27m1 -29v29m1 -25v26m1 -28v28m1 -26v27m1 -32v33m1 -29v27m1 -29v29m1 -28v28m1 -24v24m1 -23v24m1 -25v25m1 -27v27m1 -30v29m1 -28v29m1 -31v31m1 -31v31m1 -30v31m1 -32v32m1 -30v28m1 -30v31m1 -36v35m1 -29v30m1 -35v34m1 -28v29m1 -30v29m1 -29v30m1 -32v31m1 -30v31m1 -32v30m1 -32v33m1 -27v27m1 -27v27m1 -25v24m1 -24v24m1 -28v29m1 -25v25m1 -32v33m1 -32v31m1 -27v27m1 -26v26m1 -28v28m1 -26v26m1 -29v28m1 -27v29m1 -31v30m1 -31v30m1 -26v27m1 -33v34m1 -26v24m1 -24v25m1 -28v28m1 -24v24m1 -29v29m1 -30v31m1 -29v28m1 -28v28m1 -31v32m1 -37v35m1 -32v33m1 -34v34m1 -32v32m1 -36v36m1 -30v30m1 -31v31m1 -33v32m1 -34v35m1 -33v33m1 -33v33m1 -35v36m1 -31v30m1 -27v27m1 -25v25m1 -29v29m1 -31v31m1 -28v29m1 -33v32m1 -26v25m1 -27v28m1 -30v29m1 -27v28m1 -25v25m1 -25v27m1 -30v28m1 -32v32m1 -25v26m1 -26v25m1 -25v26m1 -26v25m1 -27v28m1 -35v34m1 -29v30m1 -30v29m1 -29v29m1 -33v33m1 -30v30m1 -32v33m1 -32v31m1 -30v30m1 -31v32m1 -33v32m1 -30v31m1 -27v26m1 -32v32m1 -27v28m1 -30v30m1 -29v29m1 -29v29m1 -31v30m1 -28v28m1 -34v35m1 -35v34m1 -27v28m1 -29v29m1 -34v33m1 -28v29m1 -27v27m1 -29v29m1 -35v35m1 -30v30m1 -29v30m1 -32v31m1 -30v30m1 -35v35m1 -31v31m1 -31v31m1 -30v30m1 -36v36m1 -26v26m1 -25v25m1 -27v27m1 -32v31m1 -27v28m1 -27v26m1 -25v25m1 -26v27m1 -29v28m1 -31v32m1 -26v27m1 -31v29m1 -26v26m1 -31v32m1 -31v30m1 -34v34m1 -28v29m1 -30v30m1 -35v35m1 -32v31m1 -29v30m1 -33v32m1 -30v30m1 -27v28m1 -26v25m1 -25v24m1 -23v25m1 -31v31m1 -32v31m1 -30v31m1 -31v31m1 -31v30m1 -36v36m1 -30v31m1 -27v27m1 -25v26m1 -31v31m1 -28v27m1 -25v24m1 -27v29m1 -26v26m1 -31v30m1 -27v27m1 -31v31m1 -26v27m1 -29v28m1 -30v30m1 -29v28m1 -26v26m1 -30v31m1 -25v24m1 -26v26m1 -28v28m1 -28v28m1 -26v26m1 -28v29m1 -29v28m1 -29v30m1 -36v35m1 -28v29m1 -34v33m1 -29v30m1 -27v27m1 -24v25m1 -32v31m1 -24v24m1 -25v25m1 -27v27m1 -29v28m1 -26v27m1 -27v27m1 -27v27m1 -27v27m1 -28v27m1 -28v29m1 -26v25m1 -25v26m1 -30v29m1 -24v25m1 -35v34m1 -26v26m1 -26v27m1 -27v26m1 -31v31m1 -29v31m1 -28v26m1 -25v26m1 -34v33m1 -29v29m1 -28v29m1 -29v29m1 -30v31m1 -28v27m1 -25v25m1 -25v25m1 -28v29m1 -27v27m1 -27v26m1 -27v27m1 -26v26m1 -28v28m1 -26v26m1 -30v30m1 -27v27m1 -29v29m1 -31v31m1 -33v33m1 -33v33m1 -32v32m1 -30v30m1 -29v31m1 -29v28m1 -27v27m1 -29v30m1 -29v27m1 -28v30m1 -27v27m1 -27v26m1 -26v26m1 -26v25m1 -26v26m1 -26v26m1 -26v26m1 -32v32m1 -29v28m1 -27v27m1 -30v31m1 -29v28m1 -33v34m1 -27v26m1 -30v31m1 -27v27m1 -29v29m1 -30v30m1 -28v28m1 -30v29m1 -29v30m1 -32v32m1 -32v32m1 -32v33m1 -29v28m1 -28v29m1 -31v30m1 -29v30m1 -29v29m1 -27v27m1 -28v27m1 -27v26m1 -27v28m1 -27v28m1 -30v29m1 -30v31m1 -37v37m1 -28v27m1 -27v26m1 -29v29m1 -26v27m1 -28v27m1 -28v28m1 -31v32m1 -34v34m1 -33v33m1 -37v36m1 -33v35m1 -26v25m1 -26v27m1 -29v29m1 -31v29m1 -29v30m1 -27v28m1 -28v26m1 -26v26m1 -26v27m1 -28v29m1 -29v29m1 -30v29m1 -32v31m1 -30v30m1 -29v30m1 -28v27m1 -28v28m1 -25v26m1 -33v33m1 -30v30m1 -30v30m1 -32v32m1 -29v29m1 -32v31m1 -28v28m1 -32v32m1 -25v25m1 -25v26m1 -25v25m1 -25v24m1 -24v25m1 -25v24m1 -24v26m1 -26v24m1 -23v23m1 -26v26m1 -24v24m1 -27v27m1 -25v25m1 -26v26m1 -29v30m1 -28v27m1 -28v28m1 -31v32m1 -31v30m1 -26v27m1 -26v26m1 -24v25m1 -29v28m1 -27v26m1 -24v25m1 -32v32m1 -26v26m1 -24v25m1 -27v27m1 -27v27m1 -33v32m1 -28v28m1 -34v34m1 -36v37m1 -32v30m1 -31v33m1 -33v33m1 -29v28m1 -29v30m1 -29v28m1 -25v25m1 -28v28m1 -25v26m1 -28v27m1 -27v28m1 -27v27m1 -33v33m1 -30v30m1 -30v29m1 -27v27m1 -28v28m1 -24v24m1 -26v26m1 -27v27m1 -26v27m1 -30v29m1 -32v32m1 -33v33m1 -27v28m1 -31v30m1 -27v27m1 -26v27m1 -26v25m1 -23v25m1 -27v26m1 -27v26m1 -25v25m1 -26v27m1 -25v25m1 -28v27m1 -23v23m1 -25v25m1 -26v27m1 -28v28m1 -29v28m1 -29v31m1 -32v31m1 -35v34m1 -30v30m1 -29v29m1 -30v30m1 -27v27m1 -26v27m1 -34v33m1 -29v29m1 -28v30m1 -31v31m1 -32v30m1 -30v30m1 -31v31m1 -35v36m1 -33v32m1 -30v31m1 -29v29m1 -29v29m1 -30v30m1 -25v25m1 -26v26m1 -29v28m1 -26v27m1 -30v30m1 -35v36m1 -29v28m1 -29v30m1 -35v33m1 -28v29m1 -29v30m1 -32v31m1 -31v31m1 -30v30m1 -28v28m1 -25v25m1 -27v28m1 -28v28m1 -29v29m1 -28v27m1 -33v34m1 -30v29m1 -32v32m1 -32v33m1 -34v33m1 -30v30m1 -30v31m1 -28v26m1 -26v27m1 -27v27m1 -35v35m1 -33v33m1 -30v30m1 -28v28m1 -29v29m1 -26v25m1 -29v29m1 -24v24m1 -26v27m1 -25v23m1 -23v25m1 -24v24m1 -29v28m1 -24v24m1 -26v27m1 -31v30m1 -27v28m1 -28v28m1 -32v32m1 -27v26m1 -27v27m1 -30v30m1 -26v26m1 -27v27m1 -26v26m1 -28v28m1 -34v33m1 -29v30m1 -29v29m1 -27v27m1 -27v26m1 -27v27m1 -29v29m1 -26v27m1 -26v25m1 -26v26m1 -29v29m1 -28v28m1 -26v26m1 -25v26m1 -27v26m1 -24v25m1 -27v27m1 -31v31m1 -31v31m1 -31v31m1 -30v30m1 -30v30m1 -36v36m1 -29v29m1 -29v29m1 -35v35m1 -32v32m1 -31v30m1 -28v29m1 -27v26m1 -25v26m1 -30v30m1 -30v29m1 -25v26m1 -25v26m1 -28v28m1 -28v28m1 -27v26m1 -34v34m1 -27v26m1 -29v29m1 -25v26m1 -29v29m1 -26v26m1 -26v25m1 -23v24m1 -31v31m1 -27v28m1 -30v30m1 -29v28m1 -30v30m1 -32v32m1 -36v36m1 -32v32m1 -31v32m1 -29v28m1 -30v30m1 -32v32m1 -30v31m1 -34v34m1 -31v31m1 -27v26m1 -25v26m1 -24v25m1 -28v27m1 -26v26m1 -26v25m1 -25v25m1 -28v29m1 -27v26m1 -25v24m1 -24v26m1 -27v26m1 -28v27m1 -26v27m1 -27v27m1 -33v33m1 -27v26m1 -26v26m1 -33v34m1 -27v26m1 -28v29m1 -24v24m1 -26v25m1 -24v25m1 -30v29m1 -28v29m1 -31v30m1 -27v28m1 -27v27m1 -29v30m1 -32v30m1 -31v32m1 -30v30m1 -32v31m1 -26v27m1 -28v28m1 -30v30m1 -28v29m1 -26v25m1 -26v26" stroke="#17becf" stroke-opacity="0.95" fill="none"/><path d="M909.5 1180v21m1 -20v20m1 -18v18m1 -19v19m1 -19v19m1 -20v19m1 -20v21m1 -20v20m1 -20v20m1 -20v20m1 -20v20m1 -20v20m1 -20v20m1 -21v21m1 -21v22m1 -23v21m1 -20v20m1 -20v21m1 -19v19m1 -21v21m1 -20v19m1 -19v20m1 -21v21m1 -21v20m1 -20v21m1 -21v21m1 -22v23m1 -22v21m1 -21v21m1 -20v19m1 -19v20m1 -18v18m1 -19v19m1 -18v18m1 -19v19m1 -20v19m1 -19v20m1 -20v19m1 -18v20m1 -21v19m1 -18v19m1 -20v20m1 -18v17m1 -18v19m1 -19v18m1 -18v18m1 -18v18m1 -18v18m1 -19v18m1 -18v19m1 -19v18m1 -19v20m1 -19v19m1 -19v19m1 -21v20m1 -20v21m1 -19v19m1 -18v18m1 -19v19m1 -19v19m1 -21v20m1 -18v19m1 -20v19m1 -18v19m1 -20v20m1 -20v19m1 -19v19m1 -19v19m1 -19v21m1 -20v19m1 -19v19m1 -19v18m1 -18v19m1 -20v20m1 -19v19m1 -19v21m1 -21v19m1 -18v18m1 -18v18m1 -18v18m1 -18v19m1 -18v17m1 -17v18m1 -19v18m1 -18v18m1 -18v19m1 -19v18m1 -18v19m1 -19v18m1 -18v18m1 -18v18m1 -18v19m1 -18v18m1 -20v20m1 -18v18m1 -19v19m1 -18v19m1 -19v18m1 -18v18m1 -18v18m1 -18v18m1 -18v18m1 -19v20m1 -19v18m1 -18v18m1 -19v19m1 -18v19m1 -19v18m1 -18v19m1 -19v19m1 -20v19m1 -18v19m1 -19v18m1 -19v20m1 -20v20m1 -20v19m1 -20v20m1 -21v21m1 -21v20m1 -17v17m1 -17v17m1 -18v18m1 -18v18m1 -18v18m1 -18v18m1 -18v18m1 -19v20m1 -20v19m1 -20v21m1 -19v19m1 -20v21m1 -20v19m1 -18v19m1 -19v18m1 -19v19m1 -18v18m1 -18v20m1 -20v19m1 -19v18m1 -19v19m1 -19v19m1 -19v20m1 -20v20m1 -20v19m1 -18v18m1 -19v19m1 -19v19m1 -19v20m1 -21v20m1 -21v20m1 -19v21m1 -23v21m1 -20v21m1 -20v21m1 -21v20m1 -20v20m1 -19v19m1 -19v19m1 -21v21m1 -20v20m1 -20v20m1 -20v20m1 -19v19m1 -19v19m1 -19v18m1 -19v20m1 -19v19m1 -19v19m1 -19v19m1 -20v20m1 -19v20m1 -19v19m1 -20v19m1 -18v19m1 -19v19m1 -20v19m1 -19v20m1 -21v20m1 -20v21m1 -21v21m1 -21v20m1 -17v19m1 -20v19m1 -18v18m1 -18v18m1 -19v19m1 -20v19m1 -19v19m1 -20v20m1 -21v20m1 -21v22m1 -21v20m1 -17v18m1 -19v19m1 -20v19m1 -19v20m1 -19v20m1 -21v20m1 -20v19m1 -19v20m1 -21v21m1 -21v21m1 -21v22m1 -22v21m1 -22v22m1 -21v23m1 -22v20m1 -20v20m1 -21v20m1 -18v20m1 -21v19m1 -18v19m1 -19v18m1 -18v19m1 -18v18m1 -19v19m1 -19v19m1 -19v18m1 -18v19m1 -19v18m1 -18v20m1 -20v19m1 -20v21m1 -22v20m1 -19v19m1 -18v19m1 -19v18m1 -17v18m1 -18v18m1 -18v19m1 -19v18m1 -19v19m1 -19v19m1 -19v19m1 -20v20m1 -20v20m1 -19v19m1 -19v20m1 -20v20m1 -22v21m1 -20v20m1 -20v19m1 -19v19m1 -20v20m1 -19v19m1 -20v20m1 -20v20m1 -21v21m1 -20v20m1 -19v19m1 -18v19m1 -18v18m1 -19v19m1 -20v19m1 -18v18m1 -19v20m1 -19v18m1 -19v20m1 -20v19m1 -18v19m1 -19v19m1 -19v19m1 -19v18m1 -19v19m1 -19v19m1 -19v19m1 -18v18m1 -18v19m1 -19v19m1 -18v17m1 -17v17m1 -18v19m1 -19v18m1 -20v20m1 -19v20m1 -22v21m1 -20v20m1 -20v21m1 -22v21m1 -20v21m1 -20v19m1 -19v20m1 -20v20m1 -22v21m1 -22v22m1 -20v21m1 -21v20m1 -20v20m1 -19v19m1 -18v19m1 -19v18m1 -19v20m1 -19v18m1 -18v19m1 -19v18m1 -18v19m1 -20v19m1 -18v19m1 -19v19m1 -19v19m1 -19v19m1 -18v18m1 -18v19m1 -19v17m1 -17v18m1 -19v19m1 -19v19m1 -18v19m1 -20v18m1 -19v20m1 -19v20m1 -20v20m1 -20v20m1 -21v20m1 -20v20m1 -20v20m1 -21v21m1 -20v20m1 -20v20m1 -20v20m1 -20v20m1 -19v19m1 -19v19m1 -19v19m1 -20v20m1 -20v19m1 -20v21m1 -21v20m1 -20v21m1 -20v22m1 -21v20m1 -19v19m1 -20v19m1 -19v19m1 -19v19m1 -20v20m1 -19v19m1 -19v20m1 -20v20m1 -21v20m1 -20v21m1 -21v22m1 -23v22m1 -21v20m1 -19v19m1 -19v20m1 -19v19m1 -19v19m1 -19v18m1 -18v18m1 -19v20m1 -20v19m1 -18v18m1 -18v18m1 -18v18m1 -19v19m1 -19v19m1 -20v20m1 -19v19m1 -19v19m1 -19v18m1 -19v20m1 -22v21m1 -19v19m1 -19v20m1 -21v20m1 -20v21m1 -21v20m1 -19v20m1 -19v19m1 -19v18m1 -17v19m1 -19v18m1 -20v19m1 -18v18m1 -19v20m1 -20v20m1 -21v20m1 -19v21m1 -21v22m1 -21v19m1 -17v18m1 -19v18m1 -17v17m1 -18v19m1 -18v18m1 -19v19m1 -19v18m1 -19v19m1 -19v20m1 -20v18m1 -17v18m1 -19v20m1 -20v20m1 -20v19m1 -18v18m1 -18v18m1 -19v19m1 -18v18m1 -18v18m1 -19v19m1 -19v18m1 -18v19m1 -19v18m1 -18v19m1 -18v18m1 -19v20m1 -21v20m1 -18v19m1 -19v18m1 -19v19m1 -19v18m1 -17v18m1 -18v19m1 -20v19m1 -18v18m1 -19v19m1 -19v19m1 -18v19m1 -20v18m1 -18v19m1 -20v19m1 -17v18m1 -18v18m1 -19v19m1 -18v18m1 -20v19m1 -18v18m1 -17v18m1 -18v19m1 -19v18m1 -20v20m1 -19v20m1 -19v18m1 -18v20m1 -20v19m1 -21v21m1 -19v19m1 -20v21m1 -20v18m1 -17v18m1 -20v19m1 -18v20m1 -20v19m1 -19v18m1 -18v20m1 -21v20m1 -19v18m1 -18v20m1 -21v20m1 -20v19m1 -20v20m1 -20v20m1 -22v23m1 -21v21m1 -21v21m1 -21v21m1 -19v19m1 -18v18m1 -18v18m1 -19v19m1 -19v19m1 -18v17m1 -17v18m1 -18v18m1 -19v18m1 -18v18m1 -18v19m1 -19v19m1 -20v19m1 -19v19m1 -19v19m1 -20v20m1 -19v20m1 -20v21m1 -21v19m1 -19v19m1 -19v18m1 -18v19m1 -19v19m1 -19v20m1 -21v20m1 -19v20m1 -21v21m1 -21v20m1 -20v20m1 -20v20m1 -18v19m1 -18v18m1 -19v19m1 -20v19m1 -18v18m1 -18v19m1 -20v20m1 -19v19m1 -20v21m1 -21v19m1 -20v20m1 -20v20m1 -19v20m1 -20v19m1 -18v19m1 -21v20m1 -19v20m1 -21v20m1 -20v19m1 -19v21m1 -22v22m1 -22v23m1 -23v21m1 -19v19m1 -18v18m1 -18v18m1 -19v19m1 -18v19m1 -20v21m1 -21v19m1 -19v19m1 -19v20m1 -21v21m1 -20v19m1 -21v22m1 -21v20m1 -19v19m1 -19v19m1 -21v21m1 -19v18m1 -18v19m1 -19v20m1 -21v19m1 -18v19m1 -20v19m1 -18v20m1 -21v20m1 -20v21m1 -20v18m1 -17v18m1 -19v20m1 -19v19m1 -18v18m1 -19v18m1 -18v18m1 -18v18m1 -17v17m1 -18v18m1 -19v18m1 -17v18m1 -19v19m1 -20v20m1 -19v19m1 -19v18m1 -18v18m1 -19v20m1 -19v19m1 -20v19m1 -18v19m1 -18v18m1 -18v18m1 -19v19m1 -17v18m1 -18v18m1 -19v20m1 -19v18m1 -18v18m1 -19v18m1 -18v19m1 -19v18m1 -20v21m1 -20v19m1 -19v21m1 -22v20m1 -20v22m1 -22v21m1 -20v21m1 -21v21m1 -19v18m1 -18v18m1 -19v19m1 -18v18m1 -18v18m1 -19v19m1 -19v19m1 -19v18m1 -18v20m1 -21v20m1 -20v20m1 -19v19m1 -18v18m1 -19v19m1 -18v18m1 -19v19m1 -19v19m1 -19v19m1 -19v19m1 -19v19m1 -19v20m1 -20v20m1 -20v18m1 -18v19m1 -19v20m1 -19v18m1 -18v18m1 -18v19m1 -20v18m1 -19v19m1 -18v19m1 -18v18m1 -19v18m1 -17v18m1 -20v20m1 -19v19m1 -21v21m1 -20v19m1 -19v20m1 -20v20m1 -20v20m1 -19v19m1 -18v20m1 -21v19m1 -19v20m1 -20v20m1 -21v20m1 -20v21m1 -22v21m1 -20v20m1 -20v20m1 -21v21m1 -21v21m1 -20v20m1 -19v20m1 -19v20m1 -20v19m1 -19v19m1 -20v19m1 -19v19m1 -18v20m1 -22v20m1 -19v19m1 -19v19m1 -19v20m1 -21v20m1 -19v20m1 -20v20m1 -22v22m1 -20v20m1 -20v19m1 -18v21m1 -20v18m1 -18v19m1 -20v19m1 -19v20m1 -20v21m1 -22v20m1 -20v20m1 -21v20m1 -19v20m1 -21v21m1 -20v21m1 -21v19m1 -19v20m1 -20v20m1 -20v19m1 -19v20m1 -20v19m1 -20v20m1 -20v19m1 -18v19m1 -20v21m1 -20v20m1 -19v18m1 -18v17m1 -17v18m1 -18v18m1 -18v18m1 -19v20m1 -19v18m1 -19v20m1 -21v20m1 -19v19m1 -19v19m1 -20v20m1 -19v19m1 -20v19m1 -17v18m1 -19v18m1 -19v19m1 -18v18m1 -19v19m1 -20v21m1 -20v19m1 -20v19m1 -18v19m1 -19v19m1 -18v18m1 -19v18m1 -17v18m1 -18v18m1 -18v18m1 -19v19m1 -19v18m1 -17v19m1 -19v19m1 -19v18m1 -19v19m1 -18v18m1 -18v19m1 -19v19m1 -19v19m1 -19v19m1 -20v19m1 -20v21m1 -21v20m1 -19v19m1 -20v21m1 -21v20m1 -20v20m1 -19v19m1 -20v21m1 -19v18m1 -18v19m1 -19v19m1 -19v19m1 -19v19m1 -20v20m1 -19v18m1 -19v19m1 -19v20m1 -19v18m1 -18v19m1 -19v17m1 -17v19m1 -19v19m1 -19v19m1 -19v18m1 -18v18m1 -18v19m1 -20v20m1 -21v21m1 -21v20m1 -20v22m1 -22v21m1 -20v20m1 -19v19m1 -20v19m1 -19v20m1 -21v21m1 -22v21m1 -20v21m1 -21v20m1 -19v20m1 -18v18m1 -19v18m1 -18v18m1 -18v18m1 -17v19m1 -21v19m1 -18v19m1 -19v19m1 -19v19m1 -19v18m1 -18v18m1 -18v19m1 -20v20m1 -20v19m1 -19v19m1 -19v19m1 -19v19m1 -19v19m1 -19v19m1 -19v19m1 -19v19m1 -18v18m1 -18v18m1 -19v19m1 -19v20m1 -20v20m1 -20v19m1 -20v20m1 -19v20m1 -21v20m1 -19v20m1 -20v19m1 -18v19m1 -19v19m1 -19v19m1 -18v18m1 -19v18m1 -18v18m1 -18v18" stroke="#17becf" fill="none"/><rect x="909" y="1162" width="789" height="45" fill="url(#sp1)"/><path d="M921.5 1165v13M962.5 1153v23M964.5 1161v15M980.5 1154v22M997.5 1165v12M1025.5 1163v14M1032.5 1163v14M1051.5 1162v16M1060.5 1164v13M1075.5 1163v14M1085.5 1168v10M1086.5 1150v28M1088.5 1160v18M1098.5 1158v20M1112.5 1152v25M1125.5 1161v16M1142.5 1161v16M1150.5 1147v30M1156.5 1155v22M1189.5 1159v18M1209.5 1154v23M1222.5 1166v12M1233.5 1161v17M1234.5 1150v27M1235.5 1165v12M1264.5 1157v20M1291.5 1149v29M1297.5 1164v14M1301.5 1165v12M1375.5 1165v13M1395.5 1148v30M1483.5 1163v15M1660.5 1152v26M1667.5 1165v13" stroke="#17becf" stroke-opacity="0.85" stroke-dasharray="3 1" fill="none"/></g><path d="M908.5 673V1274.5H1698" stroke="#999" fill="none"/><g fill="#f2f2f2" font-size="13" text-anchor="end" stroke="#f2f2f2"><text x="903" y="1267.1">0</text><text x="903" y="1149.3">0.2</text><text x="903" y="1031.5">0.4</text><text x="903" y="913.7">0.6</text><text x="903" y="795.9">0.8</text></g><rect x="899" y="673" width="1.3" height="5" fill="#eee"/><g fill="#f2f2f2" font-size="13" text-anchor="middle" stroke="#f2f2f2"><text x="1015.5" y="1291">-6d</text><text x="1129.2" y="1291">-5d</text><text x="1242.8" y="1291">-4d</text><text x="1356.5" y="1291">-3d</text><text x="1470.2" y="1291">-2d</text><text x="1583.8" y="1291">-1d</text></g><clipPath id="zc11"><rect x="0" y="0" width="1698" height="1409"/></clipPath><text x="1697.5" y="1291" fill="#f2f2f2" font-size="13" text-anchor="middle" clip-path="url(#zc11)" stroke="#f2f2f2">0</text><text transform="translate(876 975) rotate(-90)" fill="#f2f2f2" font-size="13" text-anchor="middle" textLength="40" lengthAdjust="spacingAndGlyphs" stroke="#f2f2f2">counts</text><rect x="918.5" y="683.5" width="341" height="62" fill="rgba(24,24,24,0.68)" stroke="#555"/><rect x="927" y="692" width="19" height="19" fill="#bcbd22"/><text x="952.0" y="707" fill="#f0f0f0" font-size="13" textLength="299" lengthAdjust="spacingAndGlyphs" stroke="#f0f0f0">H0:VAC-MR_FAN5_170_1_ACC_INCHSEC [m-trend]</text><rect x="927" y="717" width="19" height="19" fill="#17becf"/><text x="952.0" y="732" fill="#f0f0f0" font-size="13" textLength="299" lengthAdjust="spacingAndGlyphs" stroke="#f0f0f0">H0:VAC-MR_FAN5_170_2_ACC_INCHSEC [m-trend]</text><clipPath id="c21"><rect x="1751" y="673" width="789" height="601"/></clipPath><path d="M1751 1262.5H2540M1751 1144.5H2540M1751 1026.5H2540M1751 909.5H2540M1751 791.5H2540" stroke="#121212"/><path d="M1751 1203.5H2540M1751 1085.5H2540M1751 968.5H2540M1751 850.5H2540M1751 732.5H2540" stroke="#0c0c0c"/><path d="M1751 673.5H2540" stroke="#1f1f1f"/><path d="M1857.5 673V1274M1971.5 673V1274M2084.5 673V1274M2198.5 673V1274M2312.5 673V1274M2425.5 673V1274M2539.5 673V1274" stroke="#1c1c1c"/><g clip-path="url(#c21)"><path d="M1751.5 1145v27m1 -20v19m1 -12v13m1 -14v14m1 -18v19m1 -15v15m1 -17v16m1 -19v19m1 -19v20m1 -19v19m1 -20v19m1 -21v21m1 -22v23m1 -24v23m1 -23v24m1 -25v24m1 -23v23m1 -13v14m1 -14v14m1 -13v13m1 -14v14m1 -13v12m1 -15v15m1 -13v14m1 -15v14m1 -13v14m1 -15v14m1 -14v15m1 -17v16m1 -15v15m1 -15v15m1 -16v16m1 -16v16m1 -15v16m1 -22v21m1 -16v17m1 -16v16m1 -19v18m1 -22v22m1 -21v21m1 -16v17m1 -19v18m1 -15v15m1 -19v19m1 -21v21m1 -17v16m1 -17v18m1 -20v20m1 -21v21m1 -21v21m1 -27v27m1 -26v26m1 -20v21m1 -23v22m1 -25v24m1 -22v23m1 -26v26m1 -26v25m1 -22v23m1 -24v25m1 -26v25m1 -24v23m1 -19v19m1 -13v14m1 -16v16m1 -14v13m1 -21v21m1 -13v14m1 -17v16m1 -14v15m1 -20v19m1 -14v14m1 -17v17m1 -23v23m1 -15v15m1 -16v17m1 -21v19m1 -19v21m1 -17v16m1 -16v16m1 -16v16m1 -16v16m1 -18v18m1 -17v17m1 -19v20m1 -19v19m1 -18v17m1 -17v17m1 -24v24m1 -16v17m1 -17v16m1 -13v13m1 -19v19m1 -12v12m1 -14v14m1 -14v15m1 -20v20m1 -14v14m1 -14v13m1 -12v13m1 -16v15m1 -12v12m1 -16v16m1 -13v13m1 -15v15m1 -19v19m1 -18v17m1 -16v17m1 -18v17m1 -20v21m1 -21v22m1 -23v21m1 -22v23m1 -24v24m1 -22v22m1 -26v25m1 -28v29m1 -27v27m1 -31v31m1 -19v19m1 -14v14m1 -12v12m1 -17v16m1 -20v20m1 -13v15m1 -17v16m1 -17v17m1 -17v18m1 -19v18m1 -21v22m1 -19v19m1 -21v21m1 -24v25m1 -29v27m1 -23v24m1 -29v28m1 -25v26m1 -20v19m1 -21v21m1 -19v20m1 -16v17m1 -16v14m1 -12v12m1 -13v13m1 -14v14m1 -14v14m1 -13v13m1 -12v12m1 -14v15m1 -16v15m1 -14v14m1 -12v13m1 -16v15m1 -18v19m1 -17v16m1 -23v23m1 -15v15m1 -22v23m1 -21v20m1 -17v18m1 -20v21m1 -25v24m1 -19v19m1 -21v20m1 -22v22m1 -24v25m1 -24v23m1 -18v18m1 -14v15m1 -13v13m1 -18v18m1 -16v16m1 -13v13m1 -18v19m1 -19v18m1 -15v15m1 -18v17m1 -14v14m1 -12v13m1 -15v15m1 -13v13m1 -14v14m1 -16v15m1 -13v14m1 -15v15m1 -16v15m1 -15v15m1 -17v18m1 -19v19m1 -14v15m1 -22v22m1 -20v19m1 -17v16m1 -16v17m1 -18v17m1 -17v17m1 -15v16m1 -18v17m1 -16v16m1 -16v16m1 -17v17m1 -17v17m1 -24v24m1 -21v21m1 -20v20m1 -22v22m1 -15v14m1 -12v14m1 -18v17m1 -19v19m1 -16v16m1 -14v15m1 -19v18m1 -18v19m1 -15v15m1 -21v19m1 -14v15m1 -17v19m1 -18v16m1 -15v16m1 -17v17m1 -18v17m1 -20v21m1 -21v21m1 -15v14m1 -13v13m1 -15v15m1 -12v13m1 -12v12m1 -17v16m1 -13v15m1 -18v17m1 -18v17m1 -14v15m1 -14v13m1 -13v14m1 -14v15m1 -17v15m1 -13v13m1 -13v14m1 -14v14m1 -13v12m1 -20v20m1 -13v14m1 -17v17m1 -19v20m1 -19v18m1 -19v19m1 -23v22m1 -20v21m1 -24v24m1 -23v23m1 -18v19m1 -16v15m1 -22v22m1 -14v14m1 -13v13m1 -18v18m1 -17v17m1 -13v13m1 -14v14m1 -14v13m1 -15v16m1 -15v15m1 -15v14m1 -19v20m1 -16v15m1 -14v15m1 -23v23m1 -17v17m1 -22v23m1 -18v17m1 -15v14m1 -15v16m1 -17v16m1 -14v14m1 -14v14m1 -16v16m1 -13v13m1 -13v13m1 -16v16m1 -13v13m1 -17v16m1 -18v18m1 -14v15m1 -15v15m1 -17v17m1 -22v22m1 -23v23m1 -18v18m1 -20v21m1 -23v22m1 -26v25m1 -19v20m1 -21v21m1 -21v21m1 -28v28m1 -25v25m1 -22v22m1 -19v20m1 -16v15m1 -17v17m1 -15v15m1 -21v20m1 -16v16m1 -16v17m1 -17v16m1 -19v19m1 -17v18m1 -24v25m1 -19v17m1 -19v19m1 -20v20m1 -20v20m1 -22v22m1 -19v20m1 -21v19m1 -19v20m1 -17v17m1 -18v19m1 -18v17m1 -18v18m1 -21v21m1 -21v21m1 -21v20m1 -19v20m1 -27v27m1 -22v22m1 -28v28m1 -25v26m1 -24v24m1 -25v23m1 -23v23m1 -23v24m1 -23v23m1 -30v30m1 -21v21m1 -17v17m1 -13v15m1 -17v15m1 -16v16m1 -15v15m1 -14v15m1 -13v13m1 -13v12m1 -15v15m1 -14v15m1 -18v17m1 -15v17m1 -18v16m1 -12v13m1 -15v15m1 -16v16m1 -14v13m1 -14v15m1 -19v19m1 -20v20m1 -23v24m1 -23v22m1 -19v19m1 -26v27m1 -27v25m1 -21v22m1 -28v27m1 -24v24m1 -26v27m1 -20v21m1 -21v19m1 -19v20m1 -17v16m1 -20v21m1 -15v15m1 -19v19m1 -22v22m1 -15v15m1 -17v17m1 -17v18m1 -19v17m1 -16v17m1 -19v19m1 -25v24m1 -17v18m1 -19v18m1 -19v20m1 -21v22m1 -23v22m1 -19v20m1 -21v20m1 -17v17m1 -15v16m1 -14v14m1 -18v18m1 -13v12m1 -12v12m1 -13v13m1 -15v15m1 -13v14m1 -20v19m1 -14v15m1 -15v14m1 -14v15m1 -20v19m1 -15v15m1 -20v20m1 -15v16m1 -18v17m1 -17v18m1 -18v17m1 -17v17m1 -19v20m1 -18v18m1 -24v24m1 -18v17m1 -19v19m1 -21v21m1 -20v20m1 -20v20m1 -19v21m1 -24v22m1 -20v20m1 -22v24m1 -24v22m1 -23v23m1 -22v23m1 -21v20m1 -21v22m1 -21v20m1 -11v12m1 -16v15m1 -15v16m1 -15v14m1 -20v21m1 -17v18m1 -23v23m1 -23v21m1 -16v17m1 -20v19m1 -18v19m1 -19v19m1 -20v19m1 -20v21m1 -17v16m1 -17v17m1 -13v14m1 -14v14m1 -16v15m1 -21v22m1 -15v15m1 -17v17m1 -18v17m1 -17v17m1 -19v19m1 -16v16m1 -20v21m1 -19v18m1 -17v18m1 -20v19m1 -18v19m1 -18v18m1 -19v20m1 -20v18m1 -22v22m1 -21v21m1 -21v21m1 -22v21m1 -21v22m1 -16v16m1 -17v18m1 -13v12m1 -13v13m1 -13v13m1 -14v14m1 -13v14m1 -14v13m1 -15v15m1 -14v14m1 -18v19m1 -16v15m1 -16v16m1 -16v16m1 -18v18m1 -20v20m1 -26v26m1 -21v21m1 -21v21m1 -24v24m1 -21v21m1 -24v24m1 -25v25m1 -24v23m1 -26v27m1 -17v17m1 -16v16m1 -15v15m1 -15v15m1 -14v14m1 -13v13m1 -15v15m1 -15v16m1 -18v17m1 -16v16m1 -16v16m1 -23v23m1 -23v23m1 -20v21m1 -24v23m1 -17v17m1 -14v14m1 -13v14m1 -17v16m1 -16v16m1 -15v15m1 -20v20m1 -16v16m1 -19v19m1 -16v17m1 -26v25m1 -18v19m1 -18v17m1 -21v21m1 -22v23m1 -19v18m1 -15v15m1 -16v16m1 -18v18m1 -18v19m1 -26v25m1 -23v23m1 -21v22m1 -25v25m1 -22v21m1 -23v23m1 -25v25m1 -20v19m1 -13v14m1 -12v13m1 -14v13m1 -16v16m1 -18v17m1 -13v14m1 -13v13m1 -13v12m1 -15v16m1 -16v16m1 -16v15m1 -14v14m1 -14v14m1 -19v19m1 -18v18m1 -17v18m1 -17v17m1 -18v18m1 -18v18m1 -19v19m1 -20v20m1 -18v17m1 -15v16m1 -14v14m1 -14v14m1 -19v19m1 -18v17m1 -21v23m1 -19v18m1 -18v19m1 -20v19m1 -18v18m1 -25v26m1 -28v27m1 -28v28m1 -22v23m1 -26v25m1 -23v24m1 -26v26m1 -26v25m1 -25v25m1 -25v25m1 -16v17m1 -13v13m1 -17v16m1 -14v14m1 -12v13m1 -16v16m1 -15v14m1 -14v14m1 -16v16m1 -15v15m1 -16v16m1 -18v17m1 -17v18m1 -19v20m1 -19v18m1 -17v18m1 -19v18m1 -18v19m1 -25v24m1 -27v28m1 -21v21m1 -21v21m1 -21v21m1 -23v22m1 -19v19m1 -14v14m1 -17v18m1 -19v18m1 -18v18m1 -15v15m1 -17v17m1 -13v12m1 -16v17m1 -20v20m1 -18v19m1 -19v19m1 -25v23m1 -18v20m1 -21v20m1 -20v21m1 -20v19m1 -14v15m1 -14v13m1 -16v16m1 -18v18m1 -16v17m1 -20v19m1 -15v15m1 -17v18m1 -16v15m1 -22v22m1 -22v22m1 -19v20m1 -20v20m1 -24v24m1 -20v19m1 -21v21m1 -20v20m1 -24v25m1 -23v23m1 -25v25m1 -23v22m1 -26v27m1 -23v23m1 -19v19m1 -17v18m1 -19v17m1 -12v13m1 -14v14m1 -15v14m1 -14v15m1 -15v15m1 -24v24m1 -17v16m1 -16v17m1 -22v22m1 -19v19m1 -19v19m1 -24v24m1 -19v20m1 -23v22m1 -21v21m1 -21v21m1 -24v26m1 -27v26m1 -23v22m1 -28v29m1 -26v26m1 -28v28m1 -26v26m1 -26v24m1 -18v20m1 -13v12m1 -20v21m1 -14v13m1 -12v12m1 -18v18m1 -19v19m1 -14v15m1 -16v15m1 -14v14m1 -14v15m1 -19v18m1 -15v15m1 -19v19m1 -19v19m1 -19v19m1 -25v25m1 -21v21m1 -17v17m1 -17v17m1 -12v12m1 -20v20m1 -14v14m1 -14v14m1 -13v13m1 -18v19m1 -16v17m1 -15v13m1 -18v18m1 -15v15m1 -16v17m1 -16v15m1 -17v17m1 -16v16m1 -16v16m1 -18v20m1 -20v17m1 -20v22m1 -21v20m1 -22v22m1 -22v21m1 -21v24m1 -26v24m1 -21v22m1 -19v17m1 -18v19m1 -15v15m1 -19v18m1 -15v15m1 -19v20m1 -18v18m1 -23v22m1 -23v24m1 -23v23m1 -22v21m1 -25v26m1 -20v19m1 -17v17m1 -19v20m1 -18v17m1 -18v20m1 -20v19m1 -18v17m1 -16v17m1 -18v17m1 -18v18m1 -22v23m1 -21v21m1 -20v20m1 -20v20m1 -25v24m1 -21v22m1 -22v22m1 -24v23m1 -21v21m1 -23v24m1 -29v28m1 -23v24m1 -24v24m1 -25v26m1 -24v22m1 -19v20m1 -18v17m1 -14v15m1 -18v17m1 -15v16m1 -18v19m1 -17v17m1 -18v16m1 -19v20m1 -16v16m1 -17v17m1 -22v21m1 -16v16m1 -15v16m1 -14v14m1 -17v18m1 -18v18m1 -17v16m1 -14v15m1 -17v16m1 -17v17m1 -16v16m1 -15v15m1 -17v17m1 -19v19m1 -21v21m1 -18v18m1 -20v19m1 -16v17m1 -21v20m1 -24v24m1 -19v20m1 -21v21m1 -19v19m1 -23v23m1 -22v22m1 -28v28m1 -22v22m1 -22v21m1 -23v23m1 -19v19" stroke="#e8217a" stroke-opacity="0.95" fill="none"/><path d="M1751.5 1158v13m1 -9v10m1 -9v9m1 -9v9m1 -10v9m1 -9v9m1 -9v10m1 -12v11m1 -11v11m1 -11v12m1 -12v11m1 -12v13m1 -13v13m1 -13v12m1 -13v14m1 -14v13m1 -12v13m1 -10v9m1 -9v9m1 -9v10m1 -10v9m1 -8v9m1 -10v10m1 -10v10m1 -10v9m1 -9v10m1 -10v9m1 -10v10m1 -9v9m1 -9v9m1 -9v9m1 -10v10m1 -10v10m1 -9v10m1 -12v11m1 -10v10m1 -10v10m1 -10v11m1 -11v10m1 -10v10m1 -10v10m1 -9v10m1 -11v10m1 -11v11m1 -10v10m1 -11v11m1 -11v11m1 -12v11m1 -11v11m1 -10v11m1 -12v12m1 -12v11m1 -11v11m1 -12v13m1 -13v13m1 -12v12m1 -13v13m1 -13v13m1 -13v13m1 -15v15m1 -13v13m1 -12v13m1 -13v12m1 -10v10m1 -9v8m1 -8v9m1 -10v10m1 -10v9m1 -9v9m1 -9v9m1 -9v9m1 -10v11m1 -10v10m1 -11v9m1 -10v11m1 -10v9m1 -9v10m1 -11v11m1 -10v11m1 -11v10m1 -10v10m1 -10v10m1 -10v10m1 -11v11m1 -10v10m1 -11v11m1 -10v11m1 -11v11m1 -11v11m1 -11v11m1 -9v9m1 -9v9m1 -9v9m1 -9v9m1 -9v9m1 -11v11m1 -10v9m1 -9v9m1 -9v9m1 -8v8m1 -9v9m1 -9v8m1 -8v10m1 -10v9m1 -11v12m1 -12v11m1 -10v11m1 -11v10m1 -12v12m1 -12v12m1 -12v12m1 -12v12m1 -12v13m1 -14v13m1 -13v13m1 -14v13m1 -13v14m1 -14v14m1 -14v15m1 -13v11m1 -8v9m1 -9v8m1 -8v8m1 -8v9m1 -9v9m1 -9v9m1 -9v10m1 -10v10m1 -11v10m1 -10v10m1 -11v11m1 -11v12m1 -12v12m1 -13v14m1 -14v13m1 -13v13m1 -14v14m1 -11v11m1 -10v9m1 -9v11m1 -11v10m1 -10v9m1 -8v8m1 -8v9m1 -9v8m1 -9v10m1 -10v9m1 -8v8m1 -9v9m1 -10v10m1 -10v10m1 -9v9m1 -9v9m1 -9v9m1 -9v9m1 -9v9m1 -10v11m1 -11v10m1 -10v10m1 -10v11m1 -12v11m1 -11v11m1 -11v11m1 -12v14m1 -14v13m1 -13v13m1 -14v13m1 -10v11m1 -11v11m1 -9v10m1 -11v11m1 -11v10m1 -10v9m1 -9v9m1 -8v9m1 -9v9m1 -11v10m1 -8v9m1 -10v9m1 -9v9m1 -9v9m1 -9v10m1 -10v9m1 -8v9m1 -10v10m1 -9v9m1 -11v11m1 -10v9m1 -11v12m1 -10v10m1 -12v12m1 -11v11m1 -11v11m1 -11v12m1 -13v12m1 -11v11m1 -10v10m1 -10v10m1 -11v10m1 -11v11m1 -11v11m1 -12v12m1 -11v12m1 -12v11m1 -12v12m1 -13v13m1 -10v10m1 -9v10m1 -10v9m1 -9v9m1 -9v9m1 -10v10m1 -9v10m1 -10v9m1 -8v9m1 -10v9m1 -9v10m1 -10v11m1 -13v12m1 -12v12m1 -10v9m1 -10v11m1 -11v11m1 -12v11m1 -10v10m1 -9v10m1 -9v9m1 -10v10m1 -9v8m1 -8v9m1 -9v9m1 -10v10m1 -10v11m1 -11v9m1 -9v10m1 -9v8m1 -8v9m1 -9v9m1 -9v9m1 -11v12m1 -10v9m1 -9v8m1 -8v9m1 -11v10m1 -9v10m1 -12v12m1 -11v11m1 -12v12m1 -13v13m1 -13v12m1 -12v13m1 -12v12m1 -10v9m1 -9v9m1 -8v8m1 -8v9m1 -10v10m1 -10v9m1 -9v10m1 -10v9m1 -10v11m1 -10v9m1 -9v9m1 -10v11m1 -11v11m1 -10v11m1 -11v9m1 -9v10m1 -10v10m1 -10v9m1 -10v11m1 -10v10m1 -10v10m1 -9v10m1 -11v10m1 -11v11m1 -10v9m1 -9v8m1 -8v10m1 -10v9m1 -9v9m1 -9v9m1 -11v11m1 -10v9m1 -10v12m1 -11v10m1 -11v10m1 -10v11m1 -12v11m1 -11v12m1 -11v11m1 -11v11m1 -12v12m1 -12v13m1 -13v12m1 -12v13m1 -14v13m1 -13v13m1 -13v13m1 -9v9m1 -10v9m1 -9v9m1 -9v10m1 -11v11m1 -11v11m1 -11v11m1 -11v11m1 -11v10m1 -10v10m1 -11v11m1 -10v10m1 -11v11m1 -11v11m1 -11v12m1 -13v13m1 -12v11m1 -12v12m1 -12v12m1 -10v10m1 -10v11m1 -12v11m1 -11v12m1 -12v12m1 -13v13m1 -13v12m1 -12v12m1 -12v12m1 -13v13m1 -13v13m1 -12v12m1 -13v12m1 -11v13m1 -15v14m1 -13v13m1 -14v14m1 -13v13m1 -13v13m1 -10v11m1 -10v9m1 -11v10m1 -7v9m1 -10v9m1 -8v8m1 -9v9m1 -8v9m1 -10v9m1 -9v9m1 -9v9m1 -11v12m1 -11v11m1 -9v8m1 -8v9m1 -10v10m1 -10v10m1 -10v10m1 -10v10m1 -11v12m1 -12v11m1 -11v11m1 -12v12m1 -11v11m1 -12v12m1 -12v13m1 -14v14m1 -14v13m1 -14v15m1 -12v11m1 -10v10m1 -10v10m1 -10v10m1 -10v9m1 -9v10m1 -10v10m1 -11v11m1 -10v10m1 -10v10m1 -10v10m1 -12v12m1 -10v10m1 -12v12m1 -11v12m1 -12v11m1 -11v11m1 -11v12m1 -12v11m1 -11v11m1 -12v12m1 -11v11m1 -11v11m1 -10v11m1 -11v11m1 -10v9m1 -9v10m1 -10v9m1 -9v11m1 -10v9m1 -10v9m1 -9v10m1 -10v10m1 -12v12m1 -10v9m1 -9v10m1 -11v11m1 -11v11m1 -11v10m1 -10v11m1 -11v11m1 -11v12m1 -12v11m1 -11v11m1 -11v11m1 -13v12m1 -10v11m1 -12v12m1 -12v12m1 -12v12m1 -12v11m1 -12v12m1 -12v12m1 -12v13m1 -12v12m1 -12v12m1 -13v13m1 -14v14m1 -14v14m1 -11v11m1 -10v9m1 -8v8m1 -9v10m1 -10v9m1 -9v10m1 -10v9m1 -10v10m1 -9v10m1 -11v11m1 -11v10m1 -11v11m1 -11v11m1 -11v12m1 -12v11m1 -13v13m1 -10v10m1 -9v10m1 -10v9m1 -9v11m1 -11v9m1 -9v9m1 -11v11m1 -9v10m1 -10v10m1 -11v10m1 -11v12m1 -11v10m1 -10v11m1 -11v11m1 -11v10m1 -11v11m1 -11v12m1 -12v12m1 -12v10m1 -10v12m1 -12v11m1 -12v12m1 -12v13m1 -13v13m1 -13v13m1 -11v11m1 -10v10m1 -10v10m1 -10v8m1 -8v9m1 -9v9m1 -9v9m1 -9v9m1 -9v10m1 -11v11m1 -11v10m1 -10v10m1 -10v10m1 -11v10m1 -11v11m1 -11v13m1 -13v11m1 -12v13m1 -12v12m1 -12v13m1 -14v12m1 -12v13m1 -12v12m1 -13v14m1 -13v12m1 -10v11m1 -10v9m1 -9v10m1 -10v9m1 -9v10m1 -10v8m1 -9v10m1 -10v10m1 -10v10m1 -10v11m1 -12v10m1 -10v11m1 -12v12m1 -12v12m1 -11v11m1 -10v10m1 -10v10m1 -9v9m1 -10v10m1 -9v9m1 -11v11m1 -10v11m1 -12v11m1 -11v11m1 -11v11m1 -10v10m1 -11v11m1 -11v12m1 -12v11m1 -11v11m1 -11v11m1 -10v10m1 -10v11m1 -11v10m1 -11v11m1 -11v11m1 -11v12m1 -13v12m1 -12v13m1 -13v12m1 -13v13m1 -13v13m1 -12v11m1 -9v10m1 -9v8m1 -8v9m1 -9v10m1 -12v12m1 -10v10m1 -11v9m1 -8v9m1 -9v9m1 -11v11m1 -11v10m1 -9v9m1 -10v11m1 -10v10m1 -11v11m1 -11v11m1 -11v10m1 -10v11m1 -11v11m1 -12v11m1 -10v12m1 -13v12m1 -12v11m1 -9v10m1 -10v11m1 -11v11m1 -11v10m1 -11v12m1 -12v11m1 -12v11m1 -10v11m1 -12v12m1 -11v11m1 -12v13m1 -13v12m1 -12v13m1 -14v13m1 -14v15m1 -15v15m1 -15v14m1 -14v14m1 -14v14m1 -10v11m1 -9v9m1 -10v10m1 -10v10m1 -10v9m1 -9v9m1 -10v9m1 -8v9m1 -10v10m1 -9v9m1 -11v11m1 -11v13m1 -13v11m1 -10v11m1 -12v11m1 -11v11m1 -10v11m1 -12v11m1 -12v12m1 -12v12m1 -11v12m1 -12v12m1 -13v13m1 -13v13m1 -12v10m1 -8v9m1 -10v10m1 -9v10m1 -10v10m1 -10v9m1 -9v9m1 -10v10m1 -10v9m1 -8v9m1 -10v11m1 -11v10m1 -10v11m1 -12v12m1 -13v12m1 -12v12m1 -10v11m1 -11v11m1 -11v11m1 -11v10m1 -9v9m1 -9v10m1 -10v9m1 -9v10m1 -10v10m1 -10v10m1 -11v11m1 -11v11m1 -11v11m1 -12v12m1 -12v11m1 -11v12m1 -13v13m1 -12v12m1 -12v12m1 -13v13m1 -13v13m1 -14v14m1 -14v14m1 -13v13m1 -12v11m1 -8v10m1 -11v9m1 -8v9m1 -10v10m1 -10v9m1 -9v10m1 -10v10m1 -10v10m1 -10v10m1 -11v11m1 -11v11m1 -11v11m1 -12v12m1 -12v12m1 -11v12m1 -13v12m1 -12v13m1 -13v12m1 -13v14m1 -14v14m1 -15v14m1 -13v14m1 -14v13m1 -14v14m1 -13v13m1 -14v14m1 -12v11m1 -8v9m1 -9v9m1 -9v10m1 -10v9m1 -9v9m1 -8v8m1 -9v9m1 -9v9m1 -9v9m1 -11v11m1 -10v10m1 -10v11m1 -13v11m1 -10v11m1 -12v13m1 -13v12m1 -12v12m1 -12v12m1 -9v10m1 -10v9m1 -9v9m1 -9v9m1 -9v9m1 -9v9m1 -9v10m1 -10v9m1 -8v8m1 -10v10m1 -10v10m1 -9v9m1 -9v10m1 -11v10m1 -10v11m1 -12v11m1 -10v10m1 -11v11m1 -12v13m1 -12v11m1 -12v12m1 -12v14m1 -15v12m1 -11v12m1 -13v12m1 -10v12m1 -11v10m1 -10v9m1 -9v10m1 -11v12m1 -12v11m1 -11v11m1 -11v11m1 -12v11m1 -12v12m1 -11v12m1 -12v12m1 -12v11m1 -10v10m1 -11v11m1 -9v10m1 -12v11m1 -11v12m1 -11v12m1 -12v11m1 -11v11m1 -11v11m1 -11v11m1 -12v11m1 -10v11m1 -12v11m1 -12v12m1 -12v12m1 -12v12m1 -13v13m1 -12v12m1 -14v16m1 -15v14m1 -14v15m1 -15v13m1 -12v13m1 -11v11m1 -10v9m1 -9v10m1 -10v10m1 -10v10m1 -11v10m1 -9v11m1 -11v10m1 -10v10m1 -11v12m1 -12v10m1 -10v10m1 -10v10m1 -10v11m1 -11v11m1 -9v9m1 -11v10m1 -8v9m1 -10v10m1 -9v9m1 -10v11m1 -11v10m1 -10v10m1 -10v11m1 -13v12m1 -11v10m1 -10v11m1 -11v11m1 -11v11m1 -12v12m1 -12v13m1 -13v11m1 -11v11m1 -12v12m1 -11v11m1 -11v12m1 -12v11m1 -11v12m1 -13v13m1 -13v12m1 -12v12m1 -12v12" stroke="#e8217a" fill="none"/><rect x="1751" y="1138" width="789" height="37" fill="url(#sp4)"/><path d="M1751 1262.5H2540" stroke="#b3101e" stroke-width="1"/></g><path d="M1750.5 673V1274.5H2540" stroke="#999" fill="none"/><g fill="#f2f2f2" font-size="13" text-anchor="end" stroke="#f2f2f2"><text x="1745" y="1267.1">0</text><text x="1745" y="1149.3">0.2</text><text x="1745" y="1031.5">0.4</text><text x="1745" y="913.7">0.6</text><text x="1745" y="795.9">0.8</text></g><rect x="1741" y="673" width="1.3" height="5" fill="#eee"/><g fill="#f2f2f2" font-size="13" text-anchor="middle" stroke="#f2f2f2"><text x="1857.5" y="1291">-6d</text><text x="1971.2" y="1291">-5d</text><text x="2084.8" y="1291">-4d</text><text x="2198.5" y="1291">-3d</text><text x="2312.2" y="1291">-2d</text><text x="2425.8" y="1291">-1d</text></g><clipPath id="zc21"><rect x="0" y="0" width="2540" height="1409"/></clipPath><text x="2539.5" y="1291" fill="#f2f2f2" font-size="13" text-anchor="middle" clip-path="url(#zc21)" stroke="#f2f2f2">0</text><text transform="translate(1718 975) rotate(-90)" fill="#f2f2f2" font-size="13" text-anchor="middle" textLength="40" lengthAdjust="spacingAndGlyphs" stroke="#f2f2f2">counts</text><rect x="1760.5" y="683.5" width="341" height="62" fill="rgba(24,24,24,0.68)" stroke="#555"/><rect x="1769" y="692" width="19" height="19" fill="#e8217a"/><text x="1794.0" y="707" fill="#f0f0f0" font-size="13" textLength="299" lengthAdjust="spacingAndGlyphs" stroke="#f0f0f0">H0:VAC-MR_FAN6_170_1_ACC_INCHSEC [m-trend]</text><rect x="1769" y="717" width="19" height="19" fill="#a3000f"/><text x="1794.0" y="732" fill="#f0f0f0" font-size="13" textLength="299" lengthAdjust="spacingAndGlyphs" stroke="#f0f0f0">H0:VAC-MR_FAN6_170_2_ACC_INCHSEC [m-trend]</text><text x="1280" y="1332" fill="#f2f2f2" font-size="16.2" text-anchor="middle" textLength="398" lengthAdjust="spacingAndGlyphs" stroke="#f2f2f2">t0 = Sat Oct 18 2025 00:51:14 UTC [1444783892.1676]</text><rect x="2.5" y="1352.5" width="99" height="24" rx="2.5" fill="url(#btn)" stroke="#8f8f8f" shape-rendering="auto"/><rect x="4" y="1353" width="96" height="1" fill="#fbfbfb"/><text x="26.5" y="1369" fill="#111" font-size="13" textLength="64.5" lengthAdjust="spacingAndGlyphs" stroke="#111">start online</text><path d="M12.5 1360V1369.5L20.5 1364.7Z" fill="#e4e6e2" stroke="#a9aba8" stroke-width="0.8" shape-rendering="auto"/><rect x="104.5" y="1352.5" width="99" height="24" rx="2.5" fill="url(#btn)" stroke="#8f8f8f" shape-rendering="auto"/><rect x="106" y="1353" width="96" height="1" fill="#fbfbfb"/><text x="129.8" y="1369" fill="#a9a9a9" font-size="13" textLength="62.5" lengthAdjust="spacingAndGlyphs" stroke="#a9a9a9">stop online</text><rect x="116.5" y="1360.5" width="7" height="7" fill="#e9e9e9" stroke="#c4c4c4"/><rect x="206.5" y="1352.5" width="99" height="24" rx="2.5" fill="url(#btn)" stroke="#8f8f8f" shape-rendering="auto"/><rect x="208" y="1353" width="96" height="1" fill="#fbfbfb"/><text x="241.6" y="1369" fill="#111" font-size="13" textLength="29.0" lengthAdjust="spacingAndGlyphs" stroke="#111">reset</text><rect x="308.5" y="1352.5" width="99" height="24" rx="2.5" fill="url(#btn)" stroke="#8f8f8f" shape-rendering="auto"/><rect x="310" y="1353" width="96" height="1" fill="#fbfbfb"/><text x="320.2" y="1369" fill="#111" font-size="13" textLength="75.0" lengthAdjust="spacingAndGlyphs" stroke="#111">add channels</text><rect x="2448.5" y="1352.5" width="79" height="24" rx="2.5" fill="url(#btn)" stroke="#8f8f8f" shape-rendering="auto"/><rect x="2450" y="1353" width="76" height="1" fill="#fbfbfb"/><text x="2462.0" y="1369" fill="#111" font-size="13" textLength="52.0" lengthAdjust="spacingAndGlyphs" stroke="#111">snapshot</text><path d="M2537.7 1369L2550 1369L2543.85 1362.6Z" fill="#333" shape-rendering="auto"/><text x="15" y="1399" fill="#111" font-size="13" xml:space="preserve" textLength="201" lengthAdjust="spacingAndGlyphs" stroke="#111">h1daqnds1:8088  [429233 channels]</text><g font-size="13"><text x="2403" y="1398.5" fill="#0000ff" textLength="47" lengthAdjust="spacingAndGlyphs" stroke="#0000ff">ndscope</text><text x="2452.8" y="1398.5" fill="#0000ff" textLength="34.5" lengthAdjust="spacingAndGlyphs" stroke="#0000ff">0.19.3</text><text x="2490" y="1398.5" fill="#111" stroke="#111">(</text><text x="2494" y="1398.5" fill="#0000ff" textLength="60.5" lengthAdjust="spacingAndGlyphs" stroke="#0000ff">report bug</text><text x="2554.5" y="1398.5" fill="#111" stroke="#111">)</text></g><g fill="#0000ff"><rect x="2403" y="1401" width="47" height="1"/><rect x="2453" y="1401" width="34" height="1"/><rect x="2494" y="1401" width="60" height="1"/></g></svg></body></html>
